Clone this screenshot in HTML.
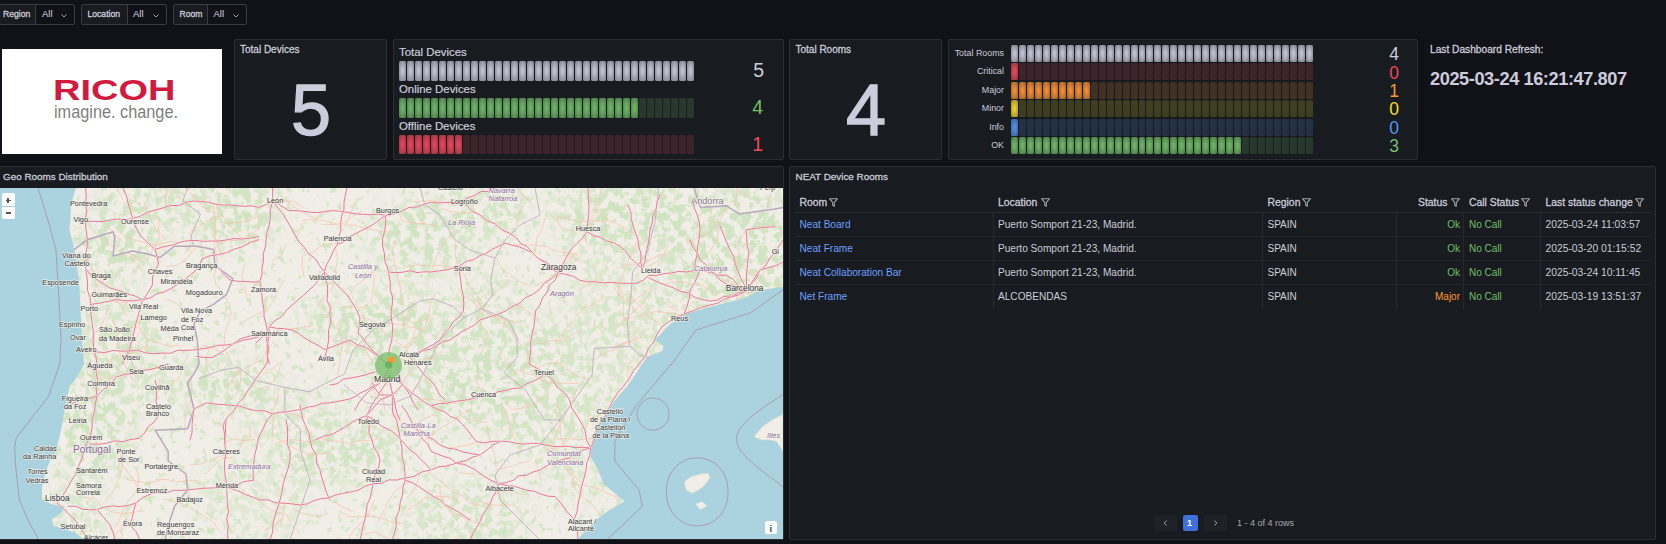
<!DOCTYPE html><html><head><meta charset="utf-8"><style>
*{margin:0;padding:0;box-sizing:border-box}
html,body{width:1666px;height:544px;overflow:hidden;background:#111217;font-family:"Liberation Sans",sans-serif;color:#ccccdc}
.a{position:absolute}
.panel{position:absolute;background:#181b1f;border:1px solid #2c2e34;border-radius:2px}
.t{position:absolute;white-space:nowrap;line-height:1}
.var{position:absolute;top:4px;height:21px;border:1px solid #3a3c42;border-radius:2px;background:#111217}
.var .lab{position:absolute;left:0;top:0;bottom:0;background:#181b1f;border-right:1px solid #3a3c42}
.cell{position:absolute;border-radius:1.5px}
</style></head><body>

<div class="var" style="left:-1px;width:76px"><div class="lab" style="width:36px"></div></div>
<div class="t" style="left:3px;top:10.2px;font-size:8.6px;-webkit-text-stroke:0.28px #ccccdc;color:#ccccdc">Region</div>
<div class="t" style="left:42px;top:9px;font-size:9.5px;color:#d8d8e4">All</div>
<svg class="a" style="left:61px;top:13.5px" width="6" height="4" viewBox="0 0 6 4"><path d="M0.5 0.5 L3 3 L5.5 0.5" fill="none" stroke="#aeb0b8" stroke-width="0.9"/></svg>
<div class="var" style="left:81px;width:86px"><div class="lab" style="width:46px"></div></div>
<div class="t" style="left:87.5px;top:10.2px;font-size:8.6px;-webkit-text-stroke:0.28px #ccccdc;color:#ccccdc">Location</div>
<div class="t" style="left:133px;top:9px;font-size:9.5px;color:#d8d8e4">All</div>
<svg class="a" style="left:153px;top:13.5px" width="6" height="4" viewBox="0 0 6 4"><path d="M0.5 0.5 L3 3 L5.5 0.5" fill="none" stroke="#aeb0b8" stroke-width="0.9"/></svg>
<div class="var" style="left:173px;width:74px"><div class="lab" style="width:34px"></div></div>
<div class="t" style="left:179.5px;top:10.2px;font-size:8.6px;-webkit-text-stroke:0.28px #ccccdc;color:#ccccdc">Room</div>
<div class="t" style="left:213.5px;top:9px;font-size:9.5px;color:#d8d8e4">All</div>
<svg class="a" style="left:233px;top:13.5px" width="6" height="4" viewBox="0 0 6 4"><path d="M0.5 0.5 L3 3 L5.5 0.5" fill="none" stroke="#aeb0b8" stroke-width="0.9"/></svg>
<div class="a" style="left:2px;top:49px;width:220px;height:105px;background:#fff"></div>
<svg class="a" style="left:2px;top:49px" width="220" height="105" viewBox="0 0 220 105"><text x="51" y="50.8" font-family="Liberation Sans" font-weight="bold" font-size="29.5" fill="#d21a3f" textLength="122.5" lengthAdjust="spacingAndGlyphs">RICOH</text><text x="52" y="68.6" font-family="Liberation Sans" font-size="17.5" fill="#7f7f7f" textLength="124" lengthAdjust="spacingAndGlyphs">imagine. change.</text></svg>
<div class="panel" style="left:234px;top:39px;width:153px;height:121px"></div>
<div class="panel" style="left:393px;top:39px;width:391px;height:121px"></div>
<div class="panel" style="left:789px;top:39px;width:153px;height:121px"></div>
<div class="panel" style="left:948px;top:39px;width:470px;height:121px"></div>
<div class="t" style="left:240px;top:44.6px;font-size:10px;-webkit-text-stroke:0.28px #ccccdc">Total Devices</div>
<div class="t" style="left:291px;top:73.5px;font-size:72px;-webkit-text-stroke:1.3px #ccccdc;color:#ccccdc">5</div>
<div class="t" style="left:795.5px;top:44.6px;font-size:10px;-webkit-text-stroke:0.28px #ccccdc">Total Rooms</div>
<div class="t" style="left:846px;top:73.5px;font-size:72px;-webkit-text-stroke:1.3px #ccccdc;color:#ccccdc">4</div>
<div class="t" style="left:399px;top:47px;font-size:11.4px;-webkit-text-stroke:0.2px #ccccdc">Total Devices</div>
<div class="t" style="left:399px;top:84px;font-size:11.4px;-webkit-text-stroke:0.2px #ccccdc">Online Devices</div>
<div class="t" style="left:399px;top:121px;font-size:11.4px;-webkit-text-stroke:0.2px #ccccdc">Offline Devices</div>
<div class="cell" style="left:399px;top:61px;width:7px;height:20px;background:radial-gradient(rgba(204,204,220,0.95) 10%,rgba(204,204,220,0.55))"></div>
<div class="cell" style="left:407px;top:61px;width:7px;height:20px;background:radial-gradient(rgba(204,204,220,0.95) 10%,rgba(204,204,220,0.55))"></div>
<div class="cell" style="left:415px;top:61px;width:7px;height:20px;background:radial-gradient(rgba(204,204,220,0.95) 10%,rgba(204,204,220,0.55))"></div>
<div class="cell" style="left:423px;top:61px;width:7px;height:20px;background:radial-gradient(rgba(204,204,220,0.95) 10%,rgba(204,204,220,0.55))"></div>
<div class="cell" style="left:431px;top:61px;width:7px;height:20px;background:radial-gradient(rgba(204,204,220,0.95) 10%,rgba(204,204,220,0.55))"></div>
<div class="cell" style="left:439px;top:61px;width:7px;height:20px;background:radial-gradient(rgba(204,204,220,0.95) 10%,rgba(204,204,220,0.55))"></div>
<div class="cell" style="left:447px;top:61px;width:7px;height:20px;background:radial-gradient(rgba(204,204,220,0.95) 10%,rgba(204,204,220,0.55))"></div>
<div class="cell" style="left:455px;top:61px;width:7px;height:20px;background:radial-gradient(rgba(204,204,220,0.95) 10%,rgba(204,204,220,0.55))"></div>
<div class="cell" style="left:463px;top:61px;width:7px;height:20px;background:radial-gradient(rgba(204,204,220,0.95) 10%,rgba(204,204,220,0.55))"></div>
<div class="cell" style="left:471px;top:61px;width:7px;height:20px;background:radial-gradient(rgba(204,204,220,0.95) 10%,rgba(204,204,220,0.55))"></div>
<div class="cell" style="left:479px;top:61px;width:7px;height:20px;background:radial-gradient(rgba(204,204,220,0.95) 10%,rgba(204,204,220,0.55))"></div>
<div class="cell" style="left:487px;top:61px;width:7px;height:20px;background:radial-gradient(rgba(204,204,220,0.95) 10%,rgba(204,204,220,0.55))"></div>
<div class="cell" style="left:495px;top:61px;width:7px;height:20px;background:radial-gradient(rgba(204,204,220,0.95) 10%,rgba(204,204,220,0.55))"></div>
<div class="cell" style="left:503px;top:61px;width:7px;height:20px;background:radial-gradient(rgba(204,204,220,0.95) 10%,rgba(204,204,220,0.55))"></div>
<div class="cell" style="left:511px;top:61px;width:7px;height:20px;background:radial-gradient(rgba(204,204,220,0.95) 10%,rgba(204,204,220,0.55))"></div>
<div class="cell" style="left:519px;top:61px;width:7px;height:20px;background:radial-gradient(rgba(204,204,220,0.95) 10%,rgba(204,204,220,0.55))"></div>
<div class="cell" style="left:527px;top:61px;width:7px;height:20px;background:radial-gradient(rgba(204,204,220,0.95) 10%,rgba(204,204,220,0.55))"></div>
<div class="cell" style="left:535px;top:61px;width:7px;height:20px;background:radial-gradient(rgba(204,204,220,0.95) 10%,rgba(204,204,220,0.55))"></div>
<div class="cell" style="left:543px;top:61px;width:7px;height:20px;background:radial-gradient(rgba(204,204,220,0.95) 10%,rgba(204,204,220,0.55))"></div>
<div class="cell" style="left:551px;top:61px;width:7px;height:20px;background:radial-gradient(rgba(204,204,220,0.95) 10%,rgba(204,204,220,0.55))"></div>
<div class="cell" style="left:559px;top:61px;width:7px;height:20px;background:radial-gradient(rgba(204,204,220,0.95) 10%,rgba(204,204,220,0.55))"></div>
<div class="cell" style="left:567px;top:61px;width:7px;height:20px;background:radial-gradient(rgba(204,204,220,0.95) 10%,rgba(204,204,220,0.55))"></div>
<div class="cell" style="left:575px;top:61px;width:7px;height:20px;background:radial-gradient(rgba(204,204,220,0.95) 10%,rgba(204,204,220,0.55))"></div>
<div class="cell" style="left:583px;top:61px;width:7px;height:20px;background:radial-gradient(rgba(204,204,220,0.95) 10%,rgba(204,204,220,0.55))"></div>
<div class="cell" style="left:591px;top:61px;width:7px;height:20px;background:radial-gradient(rgba(204,204,220,0.95) 10%,rgba(204,204,220,0.55))"></div>
<div class="cell" style="left:599px;top:61px;width:7px;height:20px;background:radial-gradient(rgba(204,204,220,0.95) 10%,rgba(204,204,220,0.55))"></div>
<div class="cell" style="left:607px;top:61px;width:7px;height:20px;background:radial-gradient(rgba(204,204,220,0.95) 10%,rgba(204,204,220,0.55))"></div>
<div class="cell" style="left:615px;top:61px;width:7px;height:20px;background:radial-gradient(rgba(204,204,220,0.95) 10%,rgba(204,204,220,0.55))"></div>
<div class="cell" style="left:623px;top:61px;width:7px;height:20px;background:radial-gradient(rgba(204,204,220,0.95) 10%,rgba(204,204,220,0.55))"></div>
<div class="cell" style="left:631px;top:61px;width:7px;height:20px;background:radial-gradient(rgba(204,204,220,0.95) 10%,rgba(204,204,220,0.55))"></div>
<div class="cell" style="left:639px;top:61px;width:7px;height:20px;background:radial-gradient(rgba(204,204,220,0.95) 10%,rgba(204,204,220,0.55))"></div>
<div class="cell" style="left:647px;top:61px;width:7px;height:20px;background:radial-gradient(rgba(204,204,220,0.95) 10%,rgba(204,204,220,0.55))"></div>
<div class="cell" style="left:655px;top:61px;width:7px;height:20px;background:radial-gradient(rgba(204,204,220,0.95) 10%,rgba(204,204,220,0.55))"></div>
<div class="cell" style="left:663px;top:61px;width:7px;height:20px;background:radial-gradient(rgba(204,204,220,0.95) 10%,rgba(204,204,220,0.55))"></div>
<div class="cell" style="left:671px;top:61px;width:7px;height:20px;background:radial-gradient(rgba(204,204,220,0.95) 10%,rgba(204,204,220,0.55))"></div>
<div class="cell" style="left:679px;top:61px;width:7px;height:20px;background:radial-gradient(rgba(204,204,220,0.95) 10%,rgba(204,204,220,0.55))"></div>
<div class="cell" style="left:687px;top:61px;width:7px;height:20px;background:radial-gradient(rgba(204,204,220,0.95) 10%,rgba(204,204,220,0.55))"></div>
<div class="cell" style="left:399px;top:98px;width:7px;height:19.5px;background:radial-gradient(rgba(115,191,105,0.95) 10%,rgba(115,191,105,0.55))"></div>
<div class="cell" style="left:407px;top:98px;width:7px;height:19.5px;background:radial-gradient(rgba(115,191,105,0.95) 10%,rgba(115,191,105,0.55))"></div>
<div class="cell" style="left:415px;top:98px;width:7px;height:19.5px;background:radial-gradient(rgba(115,191,105,0.95) 10%,rgba(115,191,105,0.55))"></div>
<div class="cell" style="left:423px;top:98px;width:7px;height:19.5px;background:radial-gradient(rgba(115,191,105,0.95) 10%,rgba(115,191,105,0.55))"></div>
<div class="cell" style="left:431px;top:98px;width:7px;height:19.5px;background:radial-gradient(rgba(115,191,105,0.95) 10%,rgba(115,191,105,0.55))"></div>
<div class="cell" style="left:439px;top:98px;width:7px;height:19.5px;background:radial-gradient(rgba(115,191,105,0.95) 10%,rgba(115,191,105,0.55))"></div>
<div class="cell" style="left:447px;top:98px;width:7px;height:19.5px;background:radial-gradient(rgba(115,191,105,0.95) 10%,rgba(115,191,105,0.55))"></div>
<div class="cell" style="left:455px;top:98px;width:7px;height:19.5px;background:radial-gradient(rgba(115,191,105,0.95) 10%,rgba(115,191,105,0.55))"></div>
<div class="cell" style="left:463px;top:98px;width:7px;height:19.5px;background:radial-gradient(rgba(115,191,105,0.95) 10%,rgba(115,191,105,0.55))"></div>
<div class="cell" style="left:471px;top:98px;width:7px;height:19.5px;background:radial-gradient(rgba(115,191,105,0.95) 10%,rgba(115,191,105,0.55))"></div>
<div class="cell" style="left:479px;top:98px;width:7px;height:19.5px;background:radial-gradient(rgba(115,191,105,0.95) 10%,rgba(115,191,105,0.55))"></div>
<div class="cell" style="left:487px;top:98px;width:7px;height:19.5px;background:radial-gradient(rgba(115,191,105,0.95) 10%,rgba(115,191,105,0.55))"></div>
<div class="cell" style="left:495px;top:98px;width:7px;height:19.5px;background:radial-gradient(rgba(115,191,105,0.95) 10%,rgba(115,191,105,0.55))"></div>
<div class="cell" style="left:503px;top:98px;width:7px;height:19.5px;background:radial-gradient(rgba(115,191,105,0.95) 10%,rgba(115,191,105,0.55))"></div>
<div class="cell" style="left:511px;top:98px;width:7px;height:19.5px;background:radial-gradient(rgba(115,191,105,0.95) 10%,rgba(115,191,105,0.55))"></div>
<div class="cell" style="left:519px;top:98px;width:7px;height:19.5px;background:radial-gradient(rgba(115,191,105,0.95) 10%,rgba(115,191,105,0.55))"></div>
<div class="cell" style="left:527px;top:98px;width:7px;height:19.5px;background:radial-gradient(rgba(115,191,105,0.95) 10%,rgba(115,191,105,0.55))"></div>
<div class="cell" style="left:535px;top:98px;width:7px;height:19.5px;background:radial-gradient(rgba(115,191,105,0.95) 10%,rgba(115,191,105,0.55))"></div>
<div class="cell" style="left:543px;top:98px;width:7px;height:19.5px;background:radial-gradient(rgba(115,191,105,0.95) 10%,rgba(115,191,105,0.55))"></div>
<div class="cell" style="left:551px;top:98px;width:7px;height:19.5px;background:radial-gradient(rgba(115,191,105,0.95) 10%,rgba(115,191,105,0.55))"></div>
<div class="cell" style="left:559px;top:98px;width:7px;height:19.5px;background:radial-gradient(rgba(115,191,105,0.95) 10%,rgba(115,191,105,0.55))"></div>
<div class="cell" style="left:567px;top:98px;width:7px;height:19.5px;background:radial-gradient(rgba(115,191,105,0.95) 10%,rgba(115,191,105,0.55))"></div>
<div class="cell" style="left:575px;top:98px;width:7px;height:19.5px;background:radial-gradient(rgba(115,191,105,0.95) 10%,rgba(115,191,105,0.55))"></div>
<div class="cell" style="left:583px;top:98px;width:7px;height:19.5px;background:radial-gradient(rgba(115,191,105,0.95) 10%,rgba(115,191,105,0.55))"></div>
<div class="cell" style="left:591px;top:98px;width:7px;height:19.5px;background:radial-gradient(rgba(115,191,105,0.95) 10%,rgba(115,191,105,0.55))"></div>
<div class="cell" style="left:599px;top:98px;width:7px;height:19.5px;background:radial-gradient(rgba(115,191,105,0.95) 10%,rgba(115,191,105,0.55))"></div>
<div class="cell" style="left:607px;top:98px;width:7px;height:19.5px;background:radial-gradient(rgba(115,191,105,0.95) 10%,rgba(115,191,105,0.55))"></div>
<div class="cell" style="left:615px;top:98px;width:7px;height:19.5px;background:radial-gradient(rgba(115,191,105,0.95) 10%,rgba(115,191,105,0.55))"></div>
<div class="cell" style="left:623px;top:98px;width:7px;height:19.5px;background:radial-gradient(rgba(115,191,105,0.95) 10%,rgba(115,191,105,0.55))"></div>
<div class="cell" style="left:631px;top:98px;width:7px;height:19.5px;background:radial-gradient(rgba(115,191,105,0.95) 10%,rgba(115,191,105,0.55))"></div>
<div class="cell" style="left:639px;top:98px;width:7px;height:19.5px;background:rgba(115,191,105,0.18)"></div>
<div class="cell" style="left:647px;top:98px;width:7px;height:19.5px;background:rgba(115,191,105,0.18)"></div>
<div class="cell" style="left:655px;top:98px;width:7px;height:19.5px;background:rgba(115,191,105,0.18)"></div>
<div class="cell" style="left:663px;top:98px;width:7px;height:19.5px;background:rgba(115,191,105,0.18)"></div>
<div class="cell" style="left:671px;top:98px;width:7px;height:19.5px;background:rgba(115,191,105,0.18)"></div>
<div class="cell" style="left:679px;top:98px;width:7px;height:19.5px;background:rgba(115,191,105,0.18)"></div>
<div class="cell" style="left:687px;top:98px;width:7px;height:19.5px;background:rgba(115,191,105,0.18)"></div>
<div class="cell" style="left:399px;top:135px;width:7px;height:19px;background:radial-gradient(rgba(242,73,92,0.95) 10%,rgba(242,73,92,0.55))"></div>
<div class="cell" style="left:407px;top:135px;width:7px;height:19px;background:radial-gradient(rgba(242,73,92,0.95) 10%,rgba(242,73,92,0.55))"></div>
<div class="cell" style="left:415px;top:135px;width:7px;height:19px;background:radial-gradient(rgba(242,73,92,0.95) 10%,rgba(242,73,92,0.55))"></div>
<div class="cell" style="left:423px;top:135px;width:7px;height:19px;background:radial-gradient(rgba(242,73,92,0.95) 10%,rgba(242,73,92,0.55))"></div>
<div class="cell" style="left:431px;top:135px;width:7px;height:19px;background:radial-gradient(rgba(242,73,92,0.95) 10%,rgba(242,73,92,0.55))"></div>
<div class="cell" style="left:439px;top:135px;width:7px;height:19px;background:radial-gradient(rgba(242,73,92,0.95) 10%,rgba(242,73,92,0.55))"></div>
<div class="cell" style="left:447px;top:135px;width:7px;height:19px;background:radial-gradient(rgba(242,73,92,0.95) 10%,rgba(242,73,92,0.55))"></div>
<div class="cell" style="left:455px;top:135px;width:7px;height:19px;background:radial-gradient(rgba(242,73,92,0.95) 10%,rgba(242,73,92,0.55))"></div>
<div class="cell" style="left:463px;top:135px;width:7px;height:19px;background:rgba(242,73,92,0.18)"></div>
<div class="cell" style="left:471px;top:135px;width:7px;height:19px;background:rgba(242,73,92,0.18)"></div>
<div class="cell" style="left:479px;top:135px;width:7px;height:19px;background:rgba(242,73,92,0.18)"></div>
<div class="cell" style="left:487px;top:135px;width:7px;height:19px;background:rgba(242,73,92,0.18)"></div>
<div class="cell" style="left:495px;top:135px;width:7px;height:19px;background:rgba(242,73,92,0.18)"></div>
<div class="cell" style="left:503px;top:135px;width:7px;height:19px;background:rgba(242,73,92,0.18)"></div>
<div class="cell" style="left:511px;top:135px;width:7px;height:19px;background:rgba(242,73,92,0.18)"></div>
<div class="cell" style="left:519px;top:135px;width:7px;height:19px;background:rgba(242,73,92,0.18)"></div>
<div class="cell" style="left:527px;top:135px;width:7px;height:19px;background:rgba(242,73,92,0.18)"></div>
<div class="cell" style="left:535px;top:135px;width:7px;height:19px;background:rgba(242,73,92,0.18)"></div>
<div class="cell" style="left:543px;top:135px;width:7px;height:19px;background:rgba(242,73,92,0.18)"></div>
<div class="cell" style="left:551px;top:135px;width:7px;height:19px;background:rgba(242,73,92,0.18)"></div>
<div class="cell" style="left:559px;top:135px;width:7px;height:19px;background:rgba(242,73,92,0.18)"></div>
<div class="cell" style="left:567px;top:135px;width:7px;height:19px;background:rgba(242,73,92,0.18)"></div>
<div class="cell" style="left:575px;top:135px;width:7px;height:19px;background:rgba(242,73,92,0.18)"></div>
<div class="cell" style="left:583px;top:135px;width:7px;height:19px;background:rgba(242,73,92,0.18)"></div>
<div class="cell" style="left:591px;top:135px;width:7px;height:19px;background:rgba(242,73,92,0.18)"></div>
<div class="cell" style="left:599px;top:135px;width:7px;height:19px;background:rgba(242,73,92,0.18)"></div>
<div class="cell" style="left:607px;top:135px;width:7px;height:19px;background:rgba(242,73,92,0.18)"></div>
<div class="cell" style="left:615px;top:135px;width:7px;height:19px;background:rgba(242,73,92,0.18)"></div>
<div class="cell" style="left:623px;top:135px;width:7px;height:19px;background:rgba(242,73,92,0.18)"></div>
<div class="cell" style="left:631px;top:135px;width:7px;height:19px;background:rgba(242,73,92,0.18)"></div>
<div class="cell" style="left:639px;top:135px;width:7px;height:19px;background:rgba(242,73,92,0.18)"></div>
<div class="cell" style="left:647px;top:135px;width:7px;height:19px;background:rgba(242,73,92,0.18)"></div>
<div class="cell" style="left:655px;top:135px;width:7px;height:19px;background:rgba(242,73,92,0.18)"></div>
<div class="cell" style="left:663px;top:135px;width:7px;height:19px;background:rgba(242,73,92,0.18)"></div>
<div class="cell" style="left:671px;top:135px;width:7px;height:19px;background:rgba(242,73,92,0.18)"></div>
<div class="cell" style="left:679px;top:135px;width:7px;height:19px;background:rgba(242,73,92,0.18)"></div>
<div class="cell" style="left:687px;top:135px;width:7px;height:19px;background:rgba(242,73,92,0.18)"></div>
<div class="t" style="right:902px;top:60.5px;font-size:19.5px;color:#ccccdc;text-align:right">5</div>
<div class="t" style="right:903px;top:97.5px;font-size:19.5px;color:#73bf69;text-align:right">4</div>
<div class="t" style="right:903px;top:134.5px;font-size:19.5px;color:#f2495c;text-align:right">1</div>
<div class="cell" style="left:1011px;top:45px;width:7px;height:17px;background:radial-gradient(rgba(204,204,220,0.95) 10%,rgba(204,204,220,0.55))"></div>
<div class="cell" style="left:1019px;top:45px;width:7px;height:17px;background:radial-gradient(rgba(204,204,220,0.95) 10%,rgba(204,204,220,0.55))"></div>
<div class="cell" style="left:1027px;top:45px;width:7px;height:17px;background:radial-gradient(rgba(204,204,220,0.95) 10%,rgba(204,204,220,0.55))"></div>
<div class="cell" style="left:1035px;top:45px;width:7px;height:17px;background:radial-gradient(rgba(204,204,220,0.95) 10%,rgba(204,204,220,0.55))"></div>
<div class="cell" style="left:1043px;top:45px;width:7px;height:17px;background:radial-gradient(rgba(204,204,220,0.95) 10%,rgba(204,204,220,0.55))"></div>
<div class="cell" style="left:1051px;top:45px;width:7px;height:17px;background:radial-gradient(rgba(204,204,220,0.95) 10%,rgba(204,204,220,0.55))"></div>
<div class="cell" style="left:1059px;top:45px;width:7px;height:17px;background:radial-gradient(rgba(204,204,220,0.95) 10%,rgba(204,204,220,0.55))"></div>
<div class="cell" style="left:1067px;top:45px;width:7px;height:17px;background:radial-gradient(rgba(204,204,220,0.95) 10%,rgba(204,204,220,0.55))"></div>
<div class="cell" style="left:1075px;top:45px;width:7px;height:17px;background:radial-gradient(rgba(204,204,220,0.95) 10%,rgba(204,204,220,0.55))"></div>
<div class="cell" style="left:1083px;top:45px;width:7px;height:17px;background:radial-gradient(rgba(204,204,220,0.95) 10%,rgba(204,204,220,0.55))"></div>
<div class="cell" style="left:1091px;top:45px;width:7px;height:17px;background:radial-gradient(rgba(204,204,220,0.95) 10%,rgba(204,204,220,0.55))"></div>
<div class="cell" style="left:1099px;top:45px;width:7px;height:17px;background:radial-gradient(rgba(204,204,220,0.95) 10%,rgba(204,204,220,0.55))"></div>
<div class="cell" style="left:1107px;top:45px;width:7px;height:17px;background:radial-gradient(rgba(204,204,220,0.95) 10%,rgba(204,204,220,0.55))"></div>
<div class="cell" style="left:1115px;top:45px;width:7px;height:17px;background:radial-gradient(rgba(204,204,220,0.95) 10%,rgba(204,204,220,0.55))"></div>
<div class="cell" style="left:1123px;top:45px;width:7px;height:17px;background:radial-gradient(rgba(204,204,220,0.95) 10%,rgba(204,204,220,0.55))"></div>
<div class="cell" style="left:1131px;top:45px;width:7px;height:17px;background:radial-gradient(rgba(204,204,220,0.95) 10%,rgba(204,204,220,0.55))"></div>
<div class="cell" style="left:1139px;top:45px;width:6px;height:17px;background:radial-gradient(rgba(204,204,220,0.95) 10%,rgba(204,204,220,0.55))"></div>
<div class="cell" style="left:1146px;top:45px;width:7px;height:17px;background:radial-gradient(rgba(204,204,220,0.95) 10%,rgba(204,204,220,0.55))"></div>
<div class="cell" style="left:1154px;top:45px;width:7px;height:17px;background:radial-gradient(rgba(204,204,220,0.95) 10%,rgba(204,204,220,0.55))"></div>
<div class="cell" style="left:1162px;top:45px;width:7px;height:17px;background:radial-gradient(rgba(204,204,220,0.95) 10%,rgba(204,204,220,0.55))"></div>
<div class="cell" style="left:1170px;top:45px;width:7px;height:17px;background:radial-gradient(rgba(204,204,220,0.95) 10%,rgba(204,204,220,0.55))"></div>
<div class="cell" style="left:1178px;top:45px;width:7px;height:17px;background:radial-gradient(rgba(204,204,220,0.95) 10%,rgba(204,204,220,0.55))"></div>
<div class="cell" style="left:1186px;top:45px;width:7px;height:17px;background:radial-gradient(rgba(204,204,220,0.95) 10%,rgba(204,204,220,0.55))"></div>
<div class="cell" style="left:1194px;top:45px;width:7px;height:17px;background:radial-gradient(rgba(204,204,220,0.95) 10%,rgba(204,204,220,0.55))"></div>
<div class="cell" style="left:1202px;top:45px;width:7px;height:17px;background:radial-gradient(rgba(204,204,220,0.95) 10%,rgba(204,204,220,0.55))"></div>
<div class="cell" style="left:1210px;top:45px;width:7px;height:17px;background:radial-gradient(rgba(204,204,220,0.95) 10%,rgba(204,204,220,0.55))"></div>
<div class="cell" style="left:1218px;top:45px;width:7px;height:17px;background:radial-gradient(rgba(204,204,220,0.95) 10%,rgba(204,204,220,0.55))"></div>
<div class="cell" style="left:1226px;top:45px;width:7px;height:17px;background:radial-gradient(rgba(204,204,220,0.95) 10%,rgba(204,204,220,0.55))"></div>
<div class="cell" style="left:1234px;top:45px;width:7px;height:17px;background:radial-gradient(rgba(204,204,220,0.95) 10%,rgba(204,204,220,0.55))"></div>
<div class="cell" style="left:1242px;top:45px;width:7px;height:17px;background:radial-gradient(rgba(204,204,220,0.95) 10%,rgba(204,204,220,0.55))"></div>
<div class="cell" style="left:1250px;top:45px;width:7px;height:17px;background:radial-gradient(rgba(204,204,220,0.95) 10%,rgba(204,204,220,0.55))"></div>
<div class="cell" style="left:1258px;top:45px;width:7px;height:17px;background:radial-gradient(rgba(204,204,220,0.95) 10%,rgba(204,204,220,0.55))"></div>
<div class="cell" style="left:1266px;top:45px;width:7px;height:17px;background:radial-gradient(rgba(204,204,220,0.95) 10%,rgba(204,204,220,0.55))"></div>
<div class="cell" style="left:1274px;top:45px;width:7px;height:17px;background:radial-gradient(rgba(204,204,220,0.95) 10%,rgba(204,204,220,0.55))"></div>
<div class="cell" style="left:1282px;top:45px;width:7px;height:17px;background:radial-gradient(rgba(204,204,220,0.95) 10%,rgba(204,204,220,0.55))"></div>
<div class="cell" style="left:1290px;top:45px;width:7px;height:17px;background:radial-gradient(rgba(204,204,220,0.95) 10%,rgba(204,204,220,0.55))"></div>
<div class="cell" style="left:1298px;top:45px;width:7px;height:17px;background:radial-gradient(rgba(204,204,220,0.95) 10%,rgba(204,204,220,0.55))"></div>
<div class="cell" style="left:1306px;top:45px;width:7px;height:17px;background:radial-gradient(rgba(204,204,220,0.95) 10%,rgba(204,204,220,0.55))"></div>
<div class="t" style="right:662px;top:48.9px;font-size:8.9px;text-align:right">Total Rooms</div>
<div class="t" style="right:267px;top:46.1px;font-size:17.5px;color:#ccccdc;text-align:right">4</div>
<div class="cell" style="left:1011px;top:63px;width:7px;height:17px;background:radial-gradient(rgba(242,73,92,0.95) 10%,rgba(242,73,92,0.55))"></div>
<div class="cell" style="left:1019px;top:63px;width:7px;height:17px;background:rgba(242,73,92,0.18)"></div>
<div class="cell" style="left:1027px;top:63px;width:7px;height:17px;background:rgba(242,73,92,0.18)"></div>
<div class="cell" style="left:1035px;top:63px;width:7px;height:17px;background:rgba(242,73,92,0.18)"></div>
<div class="cell" style="left:1043px;top:63px;width:7px;height:17px;background:rgba(242,73,92,0.18)"></div>
<div class="cell" style="left:1051px;top:63px;width:7px;height:17px;background:rgba(242,73,92,0.18)"></div>
<div class="cell" style="left:1059px;top:63px;width:7px;height:17px;background:rgba(242,73,92,0.18)"></div>
<div class="cell" style="left:1067px;top:63px;width:7px;height:17px;background:rgba(242,73,92,0.18)"></div>
<div class="cell" style="left:1075px;top:63px;width:7px;height:17px;background:rgba(242,73,92,0.18)"></div>
<div class="cell" style="left:1083px;top:63px;width:7px;height:17px;background:rgba(242,73,92,0.18)"></div>
<div class="cell" style="left:1091px;top:63px;width:7px;height:17px;background:rgba(242,73,92,0.18)"></div>
<div class="cell" style="left:1099px;top:63px;width:7px;height:17px;background:rgba(242,73,92,0.18)"></div>
<div class="cell" style="left:1107px;top:63px;width:7px;height:17px;background:rgba(242,73,92,0.18)"></div>
<div class="cell" style="left:1115px;top:63px;width:7px;height:17px;background:rgba(242,73,92,0.18)"></div>
<div class="cell" style="left:1123px;top:63px;width:7px;height:17px;background:rgba(242,73,92,0.18)"></div>
<div class="cell" style="left:1131px;top:63px;width:7px;height:17px;background:rgba(242,73,92,0.18)"></div>
<div class="cell" style="left:1139px;top:63px;width:6px;height:17px;background:rgba(242,73,92,0.18)"></div>
<div class="cell" style="left:1146px;top:63px;width:7px;height:17px;background:rgba(242,73,92,0.18)"></div>
<div class="cell" style="left:1154px;top:63px;width:7px;height:17px;background:rgba(242,73,92,0.18)"></div>
<div class="cell" style="left:1162px;top:63px;width:7px;height:17px;background:rgba(242,73,92,0.18)"></div>
<div class="cell" style="left:1170px;top:63px;width:7px;height:17px;background:rgba(242,73,92,0.18)"></div>
<div class="cell" style="left:1178px;top:63px;width:7px;height:17px;background:rgba(242,73,92,0.18)"></div>
<div class="cell" style="left:1186px;top:63px;width:7px;height:17px;background:rgba(242,73,92,0.18)"></div>
<div class="cell" style="left:1194px;top:63px;width:7px;height:17px;background:rgba(242,73,92,0.18)"></div>
<div class="cell" style="left:1202px;top:63px;width:7px;height:17px;background:rgba(242,73,92,0.18)"></div>
<div class="cell" style="left:1210px;top:63px;width:7px;height:17px;background:rgba(242,73,92,0.18)"></div>
<div class="cell" style="left:1218px;top:63px;width:7px;height:17px;background:rgba(242,73,92,0.18)"></div>
<div class="cell" style="left:1226px;top:63px;width:7px;height:17px;background:rgba(242,73,92,0.18)"></div>
<div class="cell" style="left:1234px;top:63px;width:7px;height:17px;background:rgba(242,73,92,0.18)"></div>
<div class="cell" style="left:1242px;top:63px;width:7px;height:17px;background:rgba(242,73,92,0.18)"></div>
<div class="cell" style="left:1250px;top:63px;width:7px;height:17px;background:rgba(242,73,92,0.18)"></div>
<div class="cell" style="left:1258px;top:63px;width:7px;height:17px;background:rgba(242,73,92,0.18)"></div>
<div class="cell" style="left:1266px;top:63px;width:7px;height:17px;background:rgba(242,73,92,0.18)"></div>
<div class="cell" style="left:1274px;top:63px;width:7px;height:17px;background:rgba(242,73,92,0.18)"></div>
<div class="cell" style="left:1282px;top:63px;width:7px;height:17px;background:rgba(242,73,92,0.18)"></div>
<div class="cell" style="left:1290px;top:63px;width:7px;height:17px;background:rgba(242,73,92,0.18)"></div>
<div class="cell" style="left:1298px;top:63px;width:7px;height:17px;background:rgba(242,73,92,0.18)"></div>
<div class="cell" style="left:1306px;top:63px;width:7px;height:17px;background:rgba(242,73,92,0.18)"></div>
<div class="t" style="right:662px;top:67.3px;font-size:8.9px;text-align:right">Critical</div>
<div class="t" style="right:267px;top:64.5px;font-size:17.5px;color:#f2495c;text-align:right">0</div>
<div class="cell" style="left:1011px;top:82px;width:7px;height:17px;background:radial-gradient(rgba(255,152,48,0.95) 10%,rgba(255,152,48,0.55))"></div>
<div class="cell" style="left:1019px;top:82px;width:7px;height:17px;background:radial-gradient(rgba(255,152,48,0.95) 10%,rgba(255,152,48,0.55))"></div>
<div class="cell" style="left:1027px;top:82px;width:7px;height:17px;background:radial-gradient(rgba(255,152,48,0.95) 10%,rgba(255,152,48,0.55))"></div>
<div class="cell" style="left:1035px;top:82px;width:7px;height:17px;background:radial-gradient(rgba(255,152,48,0.95) 10%,rgba(255,152,48,0.55))"></div>
<div class="cell" style="left:1043px;top:82px;width:7px;height:17px;background:radial-gradient(rgba(255,152,48,0.95) 10%,rgba(255,152,48,0.55))"></div>
<div class="cell" style="left:1051px;top:82px;width:7px;height:17px;background:radial-gradient(rgba(255,152,48,0.95) 10%,rgba(255,152,48,0.55))"></div>
<div class="cell" style="left:1059px;top:82px;width:7px;height:17px;background:radial-gradient(rgba(255,152,48,0.95) 10%,rgba(255,152,48,0.55))"></div>
<div class="cell" style="left:1067px;top:82px;width:7px;height:17px;background:radial-gradient(rgba(255,152,48,0.95) 10%,rgba(255,152,48,0.55))"></div>
<div class="cell" style="left:1075px;top:82px;width:7px;height:17px;background:radial-gradient(rgba(255,152,48,0.95) 10%,rgba(255,152,48,0.55))"></div>
<div class="cell" style="left:1083px;top:82px;width:7px;height:17px;background:radial-gradient(rgba(255,152,48,0.95) 10%,rgba(255,152,48,0.55))"></div>
<div class="cell" style="left:1091px;top:82px;width:7px;height:17px;background:rgba(255,152,48,0.18)"></div>
<div class="cell" style="left:1099px;top:82px;width:7px;height:17px;background:rgba(255,152,48,0.18)"></div>
<div class="cell" style="left:1107px;top:82px;width:7px;height:17px;background:rgba(255,152,48,0.18)"></div>
<div class="cell" style="left:1115px;top:82px;width:7px;height:17px;background:rgba(255,152,48,0.18)"></div>
<div class="cell" style="left:1123px;top:82px;width:7px;height:17px;background:rgba(255,152,48,0.18)"></div>
<div class="cell" style="left:1131px;top:82px;width:7px;height:17px;background:rgba(255,152,48,0.18)"></div>
<div class="cell" style="left:1139px;top:82px;width:6px;height:17px;background:rgba(255,152,48,0.18)"></div>
<div class="cell" style="left:1146px;top:82px;width:7px;height:17px;background:rgba(255,152,48,0.18)"></div>
<div class="cell" style="left:1154px;top:82px;width:7px;height:17px;background:rgba(255,152,48,0.18)"></div>
<div class="cell" style="left:1162px;top:82px;width:7px;height:17px;background:rgba(255,152,48,0.18)"></div>
<div class="cell" style="left:1170px;top:82px;width:7px;height:17px;background:rgba(255,152,48,0.18)"></div>
<div class="cell" style="left:1178px;top:82px;width:7px;height:17px;background:rgba(255,152,48,0.18)"></div>
<div class="cell" style="left:1186px;top:82px;width:7px;height:17px;background:rgba(255,152,48,0.18)"></div>
<div class="cell" style="left:1194px;top:82px;width:7px;height:17px;background:rgba(255,152,48,0.18)"></div>
<div class="cell" style="left:1202px;top:82px;width:7px;height:17px;background:rgba(255,152,48,0.18)"></div>
<div class="cell" style="left:1210px;top:82px;width:7px;height:17px;background:rgba(255,152,48,0.18)"></div>
<div class="cell" style="left:1218px;top:82px;width:7px;height:17px;background:rgba(255,152,48,0.18)"></div>
<div class="cell" style="left:1226px;top:82px;width:7px;height:17px;background:rgba(255,152,48,0.18)"></div>
<div class="cell" style="left:1234px;top:82px;width:7px;height:17px;background:rgba(255,152,48,0.18)"></div>
<div class="cell" style="left:1242px;top:82px;width:7px;height:17px;background:rgba(255,152,48,0.18)"></div>
<div class="cell" style="left:1250px;top:82px;width:7px;height:17px;background:rgba(255,152,48,0.18)"></div>
<div class="cell" style="left:1258px;top:82px;width:7px;height:17px;background:rgba(255,152,48,0.18)"></div>
<div class="cell" style="left:1266px;top:82px;width:7px;height:17px;background:rgba(255,152,48,0.18)"></div>
<div class="cell" style="left:1274px;top:82px;width:7px;height:17px;background:rgba(255,152,48,0.18)"></div>
<div class="cell" style="left:1282px;top:82px;width:7px;height:17px;background:rgba(255,152,48,0.18)"></div>
<div class="cell" style="left:1290px;top:82px;width:7px;height:17px;background:rgba(255,152,48,0.18)"></div>
<div class="cell" style="left:1298px;top:82px;width:7px;height:17px;background:rgba(255,152,48,0.18)"></div>
<div class="cell" style="left:1306px;top:82px;width:7px;height:17px;background:rgba(255,152,48,0.18)"></div>
<div class="t" style="right:662px;top:85.7px;font-size:8.9px;text-align:right">Major</div>
<div class="t" style="right:267px;top:82.9px;font-size:17.5px;color:#ff9830;text-align:right">1</div>
<div class="cell" style="left:1011px;top:100px;width:7px;height:17px;background:radial-gradient(rgba(250,222,42,0.95) 10%,rgba(250,222,42,0.55))"></div>
<div class="cell" style="left:1019px;top:100px;width:7px;height:17px;background:rgba(250,222,42,0.18)"></div>
<div class="cell" style="left:1027px;top:100px;width:7px;height:17px;background:rgba(250,222,42,0.18)"></div>
<div class="cell" style="left:1035px;top:100px;width:7px;height:17px;background:rgba(250,222,42,0.18)"></div>
<div class="cell" style="left:1043px;top:100px;width:7px;height:17px;background:rgba(250,222,42,0.18)"></div>
<div class="cell" style="left:1051px;top:100px;width:7px;height:17px;background:rgba(250,222,42,0.18)"></div>
<div class="cell" style="left:1059px;top:100px;width:7px;height:17px;background:rgba(250,222,42,0.18)"></div>
<div class="cell" style="left:1067px;top:100px;width:7px;height:17px;background:rgba(250,222,42,0.18)"></div>
<div class="cell" style="left:1075px;top:100px;width:7px;height:17px;background:rgba(250,222,42,0.18)"></div>
<div class="cell" style="left:1083px;top:100px;width:7px;height:17px;background:rgba(250,222,42,0.18)"></div>
<div class="cell" style="left:1091px;top:100px;width:7px;height:17px;background:rgba(250,222,42,0.18)"></div>
<div class="cell" style="left:1099px;top:100px;width:7px;height:17px;background:rgba(250,222,42,0.18)"></div>
<div class="cell" style="left:1107px;top:100px;width:7px;height:17px;background:rgba(250,222,42,0.18)"></div>
<div class="cell" style="left:1115px;top:100px;width:7px;height:17px;background:rgba(250,222,42,0.18)"></div>
<div class="cell" style="left:1123px;top:100px;width:7px;height:17px;background:rgba(250,222,42,0.18)"></div>
<div class="cell" style="left:1131px;top:100px;width:7px;height:17px;background:rgba(250,222,42,0.18)"></div>
<div class="cell" style="left:1139px;top:100px;width:6px;height:17px;background:rgba(250,222,42,0.18)"></div>
<div class="cell" style="left:1146px;top:100px;width:7px;height:17px;background:rgba(250,222,42,0.18)"></div>
<div class="cell" style="left:1154px;top:100px;width:7px;height:17px;background:rgba(250,222,42,0.18)"></div>
<div class="cell" style="left:1162px;top:100px;width:7px;height:17px;background:rgba(250,222,42,0.18)"></div>
<div class="cell" style="left:1170px;top:100px;width:7px;height:17px;background:rgba(250,222,42,0.18)"></div>
<div class="cell" style="left:1178px;top:100px;width:7px;height:17px;background:rgba(250,222,42,0.18)"></div>
<div class="cell" style="left:1186px;top:100px;width:7px;height:17px;background:rgba(250,222,42,0.18)"></div>
<div class="cell" style="left:1194px;top:100px;width:7px;height:17px;background:rgba(250,222,42,0.18)"></div>
<div class="cell" style="left:1202px;top:100px;width:7px;height:17px;background:rgba(250,222,42,0.18)"></div>
<div class="cell" style="left:1210px;top:100px;width:7px;height:17px;background:rgba(250,222,42,0.18)"></div>
<div class="cell" style="left:1218px;top:100px;width:7px;height:17px;background:rgba(250,222,42,0.18)"></div>
<div class="cell" style="left:1226px;top:100px;width:7px;height:17px;background:rgba(250,222,42,0.18)"></div>
<div class="cell" style="left:1234px;top:100px;width:7px;height:17px;background:rgba(250,222,42,0.18)"></div>
<div class="cell" style="left:1242px;top:100px;width:7px;height:17px;background:rgba(250,222,42,0.18)"></div>
<div class="cell" style="left:1250px;top:100px;width:7px;height:17px;background:rgba(250,222,42,0.18)"></div>
<div class="cell" style="left:1258px;top:100px;width:7px;height:17px;background:rgba(250,222,42,0.18)"></div>
<div class="cell" style="left:1266px;top:100px;width:7px;height:17px;background:rgba(250,222,42,0.18)"></div>
<div class="cell" style="left:1274px;top:100px;width:7px;height:17px;background:rgba(250,222,42,0.18)"></div>
<div class="cell" style="left:1282px;top:100px;width:7px;height:17px;background:rgba(250,222,42,0.18)"></div>
<div class="cell" style="left:1290px;top:100px;width:7px;height:17px;background:rgba(250,222,42,0.18)"></div>
<div class="cell" style="left:1298px;top:100px;width:7px;height:17px;background:rgba(250,222,42,0.18)"></div>
<div class="cell" style="left:1306px;top:100px;width:7px;height:17px;background:rgba(250,222,42,0.18)"></div>
<div class="t" style="right:662px;top:104.1px;font-size:8.9px;text-align:right">Minor</div>
<div class="t" style="right:267px;top:101.3px;font-size:17.5px;color:#fade2a;text-align:right">0</div>
<div class="cell" style="left:1011px;top:119px;width:7px;height:17px;background:radial-gradient(rgba(87,148,242,0.95) 10%,rgba(87,148,242,0.55))"></div>
<div class="cell" style="left:1019px;top:119px;width:7px;height:17px;background:rgba(87,148,242,0.18)"></div>
<div class="cell" style="left:1027px;top:119px;width:7px;height:17px;background:rgba(87,148,242,0.18)"></div>
<div class="cell" style="left:1035px;top:119px;width:7px;height:17px;background:rgba(87,148,242,0.18)"></div>
<div class="cell" style="left:1043px;top:119px;width:7px;height:17px;background:rgba(87,148,242,0.18)"></div>
<div class="cell" style="left:1051px;top:119px;width:7px;height:17px;background:rgba(87,148,242,0.18)"></div>
<div class="cell" style="left:1059px;top:119px;width:7px;height:17px;background:rgba(87,148,242,0.18)"></div>
<div class="cell" style="left:1067px;top:119px;width:7px;height:17px;background:rgba(87,148,242,0.18)"></div>
<div class="cell" style="left:1075px;top:119px;width:7px;height:17px;background:rgba(87,148,242,0.18)"></div>
<div class="cell" style="left:1083px;top:119px;width:7px;height:17px;background:rgba(87,148,242,0.18)"></div>
<div class="cell" style="left:1091px;top:119px;width:7px;height:17px;background:rgba(87,148,242,0.18)"></div>
<div class="cell" style="left:1099px;top:119px;width:7px;height:17px;background:rgba(87,148,242,0.18)"></div>
<div class="cell" style="left:1107px;top:119px;width:7px;height:17px;background:rgba(87,148,242,0.18)"></div>
<div class="cell" style="left:1115px;top:119px;width:7px;height:17px;background:rgba(87,148,242,0.18)"></div>
<div class="cell" style="left:1123px;top:119px;width:7px;height:17px;background:rgba(87,148,242,0.18)"></div>
<div class="cell" style="left:1131px;top:119px;width:7px;height:17px;background:rgba(87,148,242,0.18)"></div>
<div class="cell" style="left:1139px;top:119px;width:6px;height:17px;background:rgba(87,148,242,0.18)"></div>
<div class="cell" style="left:1146px;top:119px;width:7px;height:17px;background:rgba(87,148,242,0.18)"></div>
<div class="cell" style="left:1154px;top:119px;width:7px;height:17px;background:rgba(87,148,242,0.18)"></div>
<div class="cell" style="left:1162px;top:119px;width:7px;height:17px;background:rgba(87,148,242,0.18)"></div>
<div class="cell" style="left:1170px;top:119px;width:7px;height:17px;background:rgba(87,148,242,0.18)"></div>
<div class="cell" style="left:1178px;top:119px;width:7px;height:17px;background:rgba(87,148,242,0.18)"></div>
<div class="cell" style="left:1186px;top:119px;width:7px;height:17px;background:rgba(87,148,242,0.18)"></div>
<div class="cell" style="left:1194px;top:119px;width:7px;height:17px;background:rgba(87,148,242,0.18)"></div>
<div class="cell" style="left:1202px;top:119px;width:7px;height:17px;background:rgba(87,148,242,0.18)"></div>
<div class="cell" style="left:1210px;top:119px;width:7px;height:17px;background:rgba(87,148,242,0.18)"></div>
<div class="cell" style="left:1218px;top:119px;width:7px;height:17px;background:rgba(87,148,242,0.18)"></div>
<div class="cell" style="left:1226px;top:119px;width:7px;height:17px;background:rgba(87,148,242,0.18)"></div>
<div class="cell" style="left:1234px;top:119px;width:7px;height:17px;background:rgba(87,148,242,0.18)"></div>
<div class="cell" style="left:1242px;top:119px;width:7px;height:17px;background:rgba(87,148,242,0.18)"></div>
<div class="cell" style="left:1250px;top:119px;width:7px;height:17px;background:rgba(87,148,242,0.18)"></div>
<div class="cell" style="left:1258px;top:119px;width:7px;height:17px;background:rgba(87,148,242,0.18)"></div>
<div class="cell" style="left:1266px;top:119px;width:7px;height:17px;background:rgba(87,148,242,0.18)"></div>
<div class="cell" style="left:1274px;top:119px;width:7px;height:17px;background:rgba(87,148,242,0.18)"></div>
<div class="cell" style="left:1282px;top:119px;width:7px;height:17px;background:rgba(87,148,242,0.18)"></div>
<div class="cell" style="left:1290px;top:119px;width:7px;height:17px;background:rgba(87,148,242,0.18)"></div>
<div class="cell" style="left:1298px;top:119px;width:7px;height:17px;background:rgba(87,148,242,0.18)"></div>
<div class="cell" style="left:1306px;top:119px;width:7px;height:17px;background:rgba(87,148,242,0.18)"></div>
<div class="t" style="right:662px;top:122.5px;font-size:8.9px;text-align:right">Info</div>
<div class="t" style="right:267px;top:119.7px;font-size:17.5px;color:#5794f2;text-align:right">0</div>
<div class="cell" style="left:1011px;top:137px;width:7px;height:17px;background:radial-gradient(rgba(115,191,105,0.95) 10%,rgba(115,191,105,0.55))"></div>
<div class="cell" style="left:1019px;top:137px;width:7px;height:17px;background:radial-gradient(rgba(115,191,105,0.95) 10%,rgba(115,191,105,0.55))"></div>
<div class="cell" style="left:1027px;top:137px;width:7px;height:17px;background:radial-gradient(rgba(115,191,105,0.95) 10%,rgba(115,191,105,0.55))"></div>
<div class="cell" style="left:1035px;top:137px;width:7px;height:17px;background:radial-gradient(rgba(115,191,105,0.95) 10%,rgba(115,191,105,0.55))"></div>
<div class="cell" style="left:1043px;top:137px;width:7px;height:17px;background:radial-gradient(rgba(115,191,105,0.95) 10%,rgba(115,191,105,0.55))"></div>
<div class="cell" style="left:1051px;top:137px;width:7px;height:17px;background:radial-gradient(rgba(115,191,105,0.95) 10%,rgba(115,191,105,0.55))"></div>
<div class="cell" style="left:1059px;top:137px;width:7px;height:17px;background:radial-gradient(rgba(115,191,105,0.95) 10%,rgba(115,191,105,0.55))"></div>
<div class="cell" style="left:1067px;top:137px;width:7px;height:17px;background:radial-gradient(rgba(115,191,105,0.95) 10%,rgba(115,191,105,0.55))"></div>
<div class="cell" style="left:1075px;top:137px;width:7px;height:17px;background:radial-gradient(rgba(115,191,105,0.95) 10%,rgba(115,191,105,0.55))"></div>
<div class="cell" style="left:1083px;top:137px;width:7px;height:17px;background:radial-gradient(rgba(115,191,105,0.95) 10%,rgba(115,191,105,0.55))"></div>
<div class="cell" style="left:1091px;top:137px;width:7px;height:17px;background:radial-gradient(rgba(115,191,105,0.95) 10%,rgba(115,191,105,0.55))"></div>
<div class="cell" style="left:1099px;top:137px;width:7px;height:17px;background:radial-gradient(rgba(115,191,105,0.95) 10%,rgba(115,191,105,0.55))"></div>
<div class="cell" style="left:1107px;top:137px;width:7px;height:17px;background:radial-gradient(rgba(115,191,105,0.95) 10%,rgba(115,191,105,0.55))"></div>
<div class="cell" style="left:1115px;top:137px;width:7px;height:17px;background:radial-gradient(rgba(115,191,105,0.95) 10%,rgba(115,191,105,0.55))"></div>
<div class="cell" style="left:1123px;top:137px;width:7px;height:17px;background:radial-gradient(rgba(115,191,105,0.95) 10%,rgba(115,191,105,0.55))"></div>
<div class="cell" style="left:1131px;top:137px;width:7px;height:17px;background:radial-gradient(rgba(115,191,105,0.95) 10%,rgba(115,191,105,0.55))"></div>
<div class="cell" style="left:1139px;top:137px;width:6px;height:17px;background:radial-gradient(rgba(115,191,105,0.95) 10%,rgba(115,191,105,0.55))"></div>
<div class="cell" style="left:1146px;top:137px;width:7px;height:17px;background:radial-gradient(rgba(115,191,105,0.95) 10%,rgba(115,191,105,0.55))"></div>
<div class="cell" style="left:1154px;top:137px;width:7px;height:17px;background:radial-gradient(rgba(115,191,105,0.95) 10%,rgba(115,191,105,0.55))"></div>
<div class="cell" style="left:1162px;top:137px;width:7px;height:17px;background:radial-gradient(rgba(115,191,105,0.95) 10%,rgba(115,191,105,0.55))"></div>
<div class="cell" style="left:1170px;top:137px;width:7px;height:17px;background:radial-gradient(rgba(115,191,105,0.95) 10%,rgba(115,191,105,0.55))"></div>
<div class="cell" style="left:1178px;top:137px;width:7px;height:17px;background:radial-gradient(rgba(115,191,105,0.95) 10%,rgba(115,191,105,0.55))"></div>
<div class="cell" style="left:1186px;top:137px;width:7px;height:17px;background:radial-gradient(rgba(115,191,105,0.95) 10%,rgba(115,191,105,0.55))"></div>
<div class="cell" style="left:1194px;top:137px;width:7px;height:17px;background:radial-gradient(rgba(115,191,105,0.95) 10%,rgba(115,191,105,0.55))"></div>
<div class="cell" style="left:1202px;top:137px;width:7px;height:17px;background:radial-gradient(rgba(115,191,105,0.95) 10%,rgba(115,191,105,0.55))"></div>
<div class="cell" style="left:1210px;top:137px;width:7px;height:17px;background:radial-gradient(rgba(115,191,105,0.95) 10%,rgba(115,191,105,0.55))"></div>
<div class="cell" style="left:1218px;top:137px;width:7px;height:17px;background:radial-gradient(rgba(115,191,105,0.95) 10%,rgba(115,191,105,0.55))"></div>
<div class="cell" style="left:1226px;top:137px;width:7px;height:17px;background:radial-gradient(rgba(115,191,105,0.95) 10%,rgba(115,191,105,0.55))"></div>
<div class="cell" style="left:1234px;top:137px;width:7px;height:17px;background:radial-gradient(rgba(115,191,105,0.95) 10%,rgba(115,191,105,0.55))"></div>
<div class="cell" style="left:1242px;top:137px;width:7px;height:17px;background:rgba(115,191,105,0.18)"></div>
<div class="cell" style="left:1250px;top:137px;width:7px;height:17px;background:rgba(115,191,105,0.18)"></div>
<div class="cell" style="left:1258px;top:137px;width:7px;height:17px;background:rgba(115,191,105,0.18)"></div>
<div class="cell" style="left:1266px;top:137px;width:7px;height:17px;background:rgba(115,191,105,0.18)"></div>
<div class="cell" style="left:1274px;top:137px;width:7px;height:17px;background:rgba(115,191,105,0.18)"></div>
<div class="cell" style="left:1282px;top:137px;width:7px;height:17px;background:rgba(115,191,105,0.18)"></div>
<div class="cell" style="left:1290px;top:137px;width:7px;height:17px;background:rgba(115,191,105,0.18)"></div>
<div class="cell" style="left:1298px;top:137px;width:7px;height:17px;background:rgba(115,191,105,0.18)"></div>
<div class="cell" style="left:1306px;top:137px;width:7px;height:17px;background:rgba(115,191,105,0.18)"></div>
<div class="t" style="right:662px;top:140.9px;font-size:8.9px;text-align:right">OK</div>
<div class="t" style="right:267px;top:138.1px;font-size:17.5px;color:#73bf69;text-align:right">3</div>
<div class="t" style="left:1430px;top:44.8px;font-size:10.2px;-webkit-text-stroke:0.28px #ccccdc">Last Dashboard Refresh:</div>
<div class="t" style="left:1430px;top:69.8px;font-size:18.2px;font-weight:bold;letter-spacing:-0.42px">2025-03-24 16:21:47.807</div>
<div class="panel" style="left:-2px;top:166px;width:786px;height:374px"></div>
<div class="panel" style="left:789px;top:166px;width:867px;height:374px"></div>
<div class="t" style="left:3px;top:171.6px;font-size:9.9px;-webkit-text-stroke:0.28px #ccccdc">Geo Rooms Distribution</div>
<div class="t" style="left:795.5px;top:171.6px;font-size:9.9px;-webkit-text-stroke:0.28px #ccccdc">NEAT Device Rooms</div>
<div class="a" style="left:0;top:188px;width:783px;height:351px;background:#f2efe9;overflow:hidden">
<svg width="783" height="351" viewBox="0 0 783 351" style="position:absolute;left:0;top:0">
<rect width="783" height="351" fill="#f1eee8"/>
<defs><filter id="gA" x="0" y="0" width="100%" height="100%" color-interpolation-filters="sRGB"><feTurbulence type="fractalNoise" baseFrequency="0.13" numOctaves="4" seed="3"/><feColorMatrix type="matrix" values="0 0 0 0 0.835  0 0 0 0 0.905  0 0 0 0 0.775  0 0 0 10 -6.2"/><feGaussianBlur stdDeviation="0.45"/></filter><filter id="gB" x="0" y="0" width="100%" height="100%" color-interpolation-filters="sRGB"><feTurbulence type="fractalNoise" baseFrequency="0.12" numOctaves="4" seed="9"/><feColorMatrix type="matrix" values="0 0 0 0 0.82  0 0 0 0 0.895  0 0 0 0 0.76  0 0 0 8 -3.7"/><feGaussianBlur stdDeviation="0.45"/></filter><filter id="bl" x="-50%" y="-50%" width="200%" height="200%"><feGaussianBlur stdDeviation="10"/></filter><mask id="mB" maskUnits="userSpaceOnUse" x="0" y="0" width="783" height="351"><g filter="url(#bl)" fill="#fff"><ellipse cx="113" cy="60" rx="42.0" ry="37.5" opacity="1"/><ellipse cx="150" cy="17" rx="52.5" ry="27.0" opacity="0.9"/><ellipse cx="234" cy="24" rx="45.0" ry="37.5" opacity="1"/><ellipse cx="120" cy="152" rx="42.0" ry="37.5" opacity="0.9"/><ellipse cx="420" cy="50" rx="52.5" ry="37.5" opacity="1"/><ellipse cx="485" cy="22" rx="45.0" ry="33.0" opacity="0.9"/><ellipse cx="490" cy="122" rx="33.0" ry="37.5" opacity="0.8"/><ellipse cx="388" cy="142" rx="52.5" ry="42.0" opacity="1"/><ellipse cx="640" cy="27" rx="90.0" ry="37.5" opacity="1"/><ellipse cx="740" cy="62" rx="67.5" ry="67.5" opacity="1"/><ellipse cx="645" cy="142" rx="52.5" ry="45.0" opacity="0.7"/><ellipse cx="90" cy="232" rx="42.0" ry="60.0" opacity="1"/><ellipse cx="165" cy="197" rx="45.0" ry="27.0" opacity="0.7"/><ellipse cx="228" cy="197" rx="45.0" ry="27.0" opacity="1"/><ellipse cx="75" cy="327" rx="33.0" ry="33.0" opacity="0.7"/><ellipse cx="340" cy="262" rx="67.5" ry="33.0" opacity="0.9"/><ellipse cx="470" cy="202" rx="60.0" ry="37.5" opacity="1"/><ellipse cx="470" cy="327" rx="60.0" ry="37.5" opacity="0.7"/><ellipse cx="540" cy="212" rx="52.5" ry="52.5" opacity="0.9"/><ellipse cx="575" cy="282" rx="30.0" ry="37.5" opacity="0.6"/><ellipse cx="600" cy="112" rx="37.5" ry="45.0" opacity="0.5"/><ellipse cx="290" cy="232" rx="52.5" ry="37.5" opacity="0.5"/><ellipse cx="250" cy="312" rx="60.0" ry="45.0" opacity="0.5"/><ellipse cx="340" cy="132" rx="45.0" ry="22.5" opacity="0.9"/><ellipse cx="410" cy="132" rx="37.5" ry="30.0" opacity="1"/><ellipse cx="505" cy="172" rx="45.0" ry="37.5" opacity="0.9"/><ellipse cx="455" cy="157" rx="37.5" ry="30.0" opacity="0.8"/><ellipse cx="545" cy="162" rx="37.5" ry="37.5" opacity="0.8"/><ellipse cx="330" cy="252" rx="52.5" ry="22.5" opacity="0.8"/><ellipse cx="450" cy="342" rx="75.0" ry="22.5" opacity="0.6"/><ellipse cx="600" cy="192" rx="30.0" ry="37.5" opacity="0.6"/><ellipse cx="700" cy="92" rx="45.0" ry="37.5" opacity="0.8"/><ellipse cx="600" cy="62" rx="37.5" ry="30.0" opacity="0.5"/></g></mask></defs>
<rect width="783" height="351" filter="url(#gA)"/>
<rect width="783" height="351" filter="url(#gB)" mask="url(#mB)"/>
<polyline points="402.6,196.8 407.3,186.8 413.9,178.0 422.3,171.0 433.3,169.8 442.4,163.7" fill="none" stroke="#f5c4ad" stroke-width="0.75" stroke-linejoin="round" stroke-linecap="round" />
<polyline points="221.6,157.4 227.9,166.5 232.2,176.5 240.9,183.3 240.4,194.3 237.1,204.8 229.1,212.4" fill="none" stroke="#f5c4ad" stroke-width="0.75" stroke-linejoin="round" stroke-linecap="round" />
<polyline points="513.6,56.8 524.6,56.6 535.6,57.4 546.5,58.5 556.4,63.3 567.3,64.7 578.1,66.7" fill="none" stroke="#f5c4ad" stroke-width="0.75" stroke-linejoin="round" stroke-linecap="round" />
<polyline points="496.9,70.0 501.2,80.1 510.0,86.7 518.8,93.3 529.0,97.3" fill="none" stroke="#f5c4ad" stroke-width="0.75" stroke-linejoin="round" stroke-linecap="round" />
<polyline points="773.4,348.5 780.0,339.7 785.7,330.3 793.3,322.4 800.8,314.3" fill="none" stroke="#f5c4ad" stroke-width="0.75" stroke-linejoin="round" stroke-linecap="round" />
<polyline points="616.1,141.3 623.5,133.2 631.3,125.5 639.4,118.0 646.7,109.8 652.0,100.1" fill="none" stroke="#f5c4ad" stroke-width="0.75" stroke-linejoin="round" stroke-linecap="round" />
<polyline points="725.4,20.2 721.2,30.4 714.9,39.4 707.2,47.2 696.6,50.4 686.7,55.2" fill="none" stroke="#f5c4ad" stroke-width="0.75" stroke-linejoin="round" stroke-linecap="round" />
<polyline points="105.3,144.7 116.0,142.2 126.7,139.8 137.7,139.1" fill="none" stroke="#f5c4ad" stroke-width="0.75" stroke-linejoin="round" stroke-linecap="round" />
<polyline points="135.7,279.4 138.9,289.9 138.0,300.8 131.0,309.3 124.5,318.2 120.9,328.6 115.7,338.3" fill="none" stroke="#f5c4ad" stroke-width="0.75" stroke-linejoin="round" stroke-linecap="round" />
<polyline points="363.5,346.5 374.2,343.9 384.1,348.7 393.6,354.2 400.7,362.7 404.9,372.8 412.7,380.6" fill="none" stroke="#f5c4ad" stroke-width="0.75" stroke-linejoin="round" stroke-linecap="round" />
<polyline points="163.2,346.3 160.5,356.9 157.5,367.5 152.8,377.4 151.2,388.3" fill="none" stroke="#f5c4ad" stroke-width="0.75" stroke-linejoin="round" stroke-linecap="round" />
<polyline points="145.5,74.6 136.4,68.5 126.2,64.4" fill="none" stroke="#f5c4ad" stroke-width="0.75" stroke-linejoin="round" stroke-linecap="round" />
<polyline points="403.2,335.8 392.3,334.4 382.1,330.3 371.2,328.4 360.3,328.8 349.3,328.5 339.6,323.3" fill="none" stroke="#f5c4ad" stroke-width="0.75" stroke-linejoin="round" stroke-linecap="round" />
<polyline points="588.3,57.1 583.2,47.4 586.8,37.0 593.7,28.4 597.6,18.2 600.0,7.4 603.2,-3.1" fill="none" stroke="#f5c4ad" stroke-width="0.75" stroke-linejoin="round" stroke-linecap="round" />
<polyline points="121.3,337.0 122.4,348.0 116.7,357.3 113.3,367.8 111.7,378.7 107.5,388.8" fill="none" stroke="#f5c4ad" stroke-width="0.75" stroke-linejoin="round" stroke-linecap="round" />
<polyline points="141.8,81.5 134.7,73.1 126.0,66.3 116.2,61.3 107.6,54.5 98.3,48.6 90.9,40.5" fill="none" stroke="#f5c4ad" stroke-width="0.75" stroke-linejoin="round" stroke-linecap="round" />
<polyline points="398.1,23.0 402.7,33.0 413.5,35.3 424.5,35.7 435.3,37.8" fill="none" stroke="#f5c4ad" stroke-width="0.75" stroke-linejoin="round" stroke-linecap="round" />
<polyline points="401.2,117.2 401.2,106.2 399.4,95.3 396.5,84.7 394.3,73.9 392.2,63.1 395.2,52.5" fill="none" stroke="#f5c4ad" stroke-width="0.75" stroke-linejoin="round" stroke-linecap="round" />
<polyline points="749.7,9.4 740.4,3.5 733.1,-4.7 726.8,-13.7 721.3,-23.3 716.9,-33.3" fill="none" stroke="#f5c4ad" stroke-width="0.75" stroke-linejoin="round" stroke-linecap="round" />
<polyline points="403.1,130.0 412.8,135.1 423.4,132.3 432.7,126.3" fill="none" stroke="#f5c4ad" stroke-width="0.75" stroke-linejoin="round" stroke-linecap="round" />
<polyline points="707.6,305.1 696.6,306.2 685.8,303.9" fill="none" stroke="#f5c4ad" stroke-width="0.75" stroke-linejoin="round" stroke-linecap="round" />
<polyline points="520.0,135.1 509.1,133.1 498.7,129.8 488.4,125.7 479.2,119.7 471.3,112.1 461.6,107.0" fill="none" stroke="#f5c4ad" stroke-width="0.75" stroke-linejoin="round" stroke-linecap="round" />
<polyline points="730.3,243.6 719.4,244.8 708.4,245.1 697.5,246.8 686.6,248.5 675.9,251.1" fill="none" stroke="#f5c4ad" stroke-width="0.75" stroke-linejoin="round" stroke-linecap="round" />
<polyline points="503.9,169.4 510.2,178.4 516.4,187.5" fill="none" stroke="#f5c4ad" stroke-width="0.75" stroke-linejoin="round" stroke-linecap="round" />
<polyline points="720.9,91.0 731.2,95.0 739.2,102.5 750.1,104.3 761.0,105.4" fill="none" stroke="#f5c4ad" stroke-width="0.75" stroke-linejoin="round" stroke-linecap="round" />
<polyline points="327.9,325.7 317.3,328.5 306.5,326.2 296.1,322.7" fill="none" stroke="#f5c4ad" stroke-width="0.75" stroke-linejoin="round" stroke-linecap="round" />
<polyline points="643.1,320.1 653.2,315.9 663.9,313.1 673.4,318.6 682.6,324.6 690.7,332.1" fill="none" stroke="#f5c4ad" stroke-width="0.75" stroke-linejoin="round" stroke-linecap="round" />
<polyline points="333.5,313.7 343.0,319.2 353.0,323.8" fill="none" stroke="#f5c4ad" stroke-width="0.75" stroke-linejoin="round" stroke-linecap="round" />
<polyline points="210.0,158.8 206.5,169.2 206.2,180.2 211.4,189.9" fill="none" stroke="#f5c4ad" stroke-width="0.75" stroke-linejoin="round" stroke-linecap="round" />
<polyline points="582.1,295.0 573.8,287.7 566.1,279.9 558.7,271.7 552.0,263.0" fill="none" stroke="#f5c4ad" stroke-width="0.75" stroke-linejoin="round" stroke-linecap="round" />
<polyline points="576.9,200.6 573.6,211.1 568.5,220.8 563.2,230.4 558.5,240.4 553.7,250.3 547.7,259.5" fill="none" stroke="#f5c4ad" stroke-width="0.75" stroke-linejoin="round" stroke-linecap="round" />
<polyline points="190.8,18.3 181.6,12.3 175.0,3.5 170.9,-6.7 164.8,-15.9 156.6,-23.2" fill="none" stroke="#f5c4ad" stroke-width="0.75" stroke-linejoin="round" stroke-linecap="round" />
<polyline points="148.0,70.9 153.2,61.2 158.7,51.7 158.6,40.7 159.5,29.8" fill="none" stroke="#f5c4ad" stroke-width="0.75" stroke-linejoin="round" stroke-linecap="round" />
<polyline points="216.8,96.8 222.9,105.9 229.0,115.1 231.4,125.8 227.6,136.2 224.6,146.7 224.2,157.7" fill="none" stroke="#f5c4ad" stroke-width="0.75" stroke-linejoin="round" stroke-linecap="round" />
<polyline points="374.1,312.6 369.9,322.8 364.2,332.2 356.1,339.7 349.6,348.5 349.7,359.5" fill="none" stroke="#f5c4ad" stroke-width="0.75" stroke-linejoin="round" stroke-linecap="round" />
<polyline points="636.8,330.6 627.3,336.2 616.3,335.7 606.4,330.9" fill="none" stroke="#f5c4ad" stroke-width="0.75" stroke-linejoin="round" stroke-linecap="round" />
<polyline points="637.8,323.6 637.9,334.6 643.9,343.8 645.5,354.7" fill="none" stroke="#f5c4ad" stroke-width="0.75" stroke-linejoin="round" stroke-linecap="round" />
<polyline points="632.7,113.5 641.6,107.0 650.0,99.9" fill="none" stroke="#f5c4ad" stroke-width="0.75" stroke-linejoin="round" stroke-linecap="round" />
<polyline points="394.8,193.5 397.4,182.8 402.1,172.9 405.7,162.5 411.7,153.3 415.0,142.8" fill="none" stroke="#f5c4ad" stroke-width="0.75" stroke-linejoin="round" stroke-linecap="round" />
<polyline points="118.9,187.5 108.2,190.3 97.2,190.2 86.9,186.4" fill="none" stroke="#f5c4ad" stroke-width="0.75" stroke-linejoin="round" stroke-linecap="round" />
<polyline points="556.0,155.2 561.9,145.9 569.1,137.6 575.8,128.9 583.2,120.8 593.3,116.4 602.7,110.6" fill="none" stroke="#f5c4ad" stroke-width="0.75" stroke-linejoin="round" stroke-linecap="round" />
<polyline points="529.4,183.9 539.4,179.3 549.3,174.4 560.3,175.2 568.4,182.6 577.8,188.3 588.2,191.7" fill="none" stroke="#f5c4ad" stroke-width="0.75" stroke-linejoin="round" stroke-linecap="round" />
<polyline points="191.0,191.6 191.5,202.5 190.5,213.5 185.3,223.2 185.0,234.2 184.9,245.2" fill="none" stroke="#f5c4ad" stroke-width="0.75" stroke-linejoin="round" stroke-linecap="round" />
<polyline points="113.9,339.4 107.2,348.1 103.2,358.3 98.1,368.1 92.0,377.3 82.8,383.3" fill="none" stroke="#f5c4ad" stroke-width="0.75" stroke-linejoin="round" stroke-linecap="round" />
<polyline points="407.1,322.4 416.4,316.7 425.5,310.4 436.3,308.2 447.3,308.7 457.7,312.2" fill="none" stroke="#f5c4ad" stroke-width="0.75" stroke-linejoin="round" stroke-linecap="round" />
<polyline points="649.7,315.4 638.8,313.9 628.5,310.0 619.7,303.5 611.1,296.5" fill="none" stroke="#f5c4ad" stroke-width="0.75" stroke-linejoin="round" stroke-linecap="round" />
<polyline points="572.4,342.1 582.9,345.3 590.4,353.4 598.9,360.4" fill="none" stroke="#f5c4ad" stroke-width="0.75" stroke-linejoin="round" stroke-linecap="round" />
<polyline points="516.4,38.5 518.4,27.7 523.3,17.8" fill="none" stroke="#f5c4ad" stroke-width="0.75" stroke-linejoin="round" stroke-linecap="round" />
<polyline points="583.0,246.1 587.5,236.0 589.2,225.2" fill="none" stroke="#f5c4ad" stroke-width="0.75" stroke-linejoin="round" stroke-linecap="round" />
<polyline points="455.0,57.6 455.3,68.6 458.7,79.1 465.2,87.9 469.0,98.2 476.4,106.3 482.5,115.5" fill="none" stroke="#f5c4ad" stroke-width="0.75" stroke-linejoin="round" stroke-linecap="round" />
<polyline points="598.7,284.1 606.3,276.1 608.2,265.2 605.2,254.6 604.5,243.7" fill="none" stroke="#f5c4ad" stroke-width="0.75" stroke-linejoin="round" stroke-linecap="round" />
<polyline points="227.3,35.7 238.2,34.3 249.0,32.5 259.0,27.9" fill="none" stroke="#f5c4ad" stroke-width="0.75" stroke-linejoin="round" stroke-linecap="round" />
<polyline points="161.0,291.6 150.6,295.3 139.7,293.9 128.9,292.0" fill="none" stroke="#f5c4ad" stroke-width="0.75" stroke-linejoin="round" stroke-linecap="round" />
<polyline points="482.5,126.4 485.7,115.9 492.0,106.9 500.5,99.9 509.2,93.1" fill="none" stroke="#f5c4ad" stroke-width="0.75" stroke-linejoin="round" stroke-linecap="round" />
<polyline points="561.3,67.8 572.3,68.1 581.2,74.5" fill="none" stroke="#f5c4ad" stroke-width="0.75" stroke-linejoin="round" stroke-linecap="round" />
<polyline points="512.1,317.0 501.1,317.3 490.1,316.5 479.6,313.5" fill="none" stroke="#f5c4ad" stroke-width="0.75" stroke-linejoin="round" stroke-linecap="round" />
<polyline points="666.3,346.6 675.3,340.2 683.6,333.0" fill="none" stroke="#f5c4ad" stroke-width="0.75" stroke-linejoin="round" stroke-linecap="round" />
<polyline points="558.1,29.0 568.8,31.1 579.4,34.2 590.3,32.6 601.3,33.2 610.4,39.4" fill="none" stroke="#f5c4ad" stroke-width="0.75" stroke-linejoin="round" stroke-linecap="round" />
<polyline points="669.1,65.1 658.4,67.7 648.4,72.4 638.0,75.7 627.0,76.7" fill="none" stroke="#f5c4ad" stroke-width="0.75" stroke-linejoin="round" stroke-linecap="round" />
<polyline points="105.5,312.8 112.5,304.3 117.5,294.6 121.6,284.4 122.8,273.4 122.2,262.4" fill="none" stroke="#f5c4ad" stroke-width="0.75" stroke-linejoin="round" stroke-linecap="round" />
<polyline points="613.4,99.3 620.5,107.7 629.9,113.4 634.7,123.3" fill="none" stroke="#f5c4ad" stroke-width="0.75" stroke-linejoin="round" stroke-linecap="round" />
<polyline points="567.5,269.0 563.8,258.6 560.7,248.1 560.0,237.1 560.3,226.1 557.4,215.5" fill="none" stroke="#f5c4ad" stroke-width="0.75" stroke-linejoin="round" stroke-linecap="round" />
<polyline points="163.6,311.0 174.4,313.3 184.9,316.5 194.1,322.5 203.7,327.8 212.9,333.9 219.4,342.7" fill="none" stroke="#f5c4ad" stroke-width="0.75" stroke-linejoin="round" stroke-linecap="round" />
<polyline points="218.7,28.7 208.1,31.4 199.5,38.3 190.4,44.5 190.5,55.5 185.5,65.3" fill="none" stroke="#f5c4ad" stroke-width="0.75" stroke-linejoin="round" stroke-linecap="round" />
<polyline points="597.4,91.3 588.0,97.1 578.4,102.5" fill="none" stroke="#f5c4ad" stroke-width="0.75" stroke-linejoin="round" stroke-linecap="round" />
<polyline points="102.3,92.0 106.0,102.3 113.4,110.5 121.8,117.6 126.4,127.6" fill="none" stroke="#f5c4ad" stroke-width="0.75" stroke-linejoin="round" stroke-linecap="round" />
<polyline points="771.7,224.0 774.7,213.5 772.4,202.7" fill="none" stroke="#f5c4ad" stroke-width="0.75" stroke-linejoin="round" stroke-linecap="round" />
<polyline points="744.6,136.5 754.0,130.8 762.1,123.2 770.4,116.0 774.4,105.8 778.5,95.6" fill="none" stroke="#f5c4ad" stroke-width="0.75" stroke-linejoin="round" stroke-linecap="round" />
<polyline points="134.8,331.0 126.7,338.4 117.4,344.2 111.0,353.2 105.4,362.7 100.7,372.6 90.3,376.2" fill="none" stroke="#f5c4ad" stroke-width="0.75" stroke-linejoin="round" stroke-linecap="round" />
<polyline points="546.2,262.2 556.9,259.4 566.5,254.0 572.8,245.1" fill="none" stroke="#f5c4ad" stroke-width="0.75" stroke-linejoin="round" stroke-linecap="round" />
<polyline points="130.9,111.7 120.6,115.5 110.9,110.4 100.8,105.8 95.9,96.0 94.5,85.1 89.4,75.3" fill="none" stroke="#f5c4ad" stroke-width="0.75" stroke-linejoin="round" stroke-linecap="round" />
<polyline points="756.8,86.8 746.3,83.4 739.2,75.0 739.1,64.0 739.2,53.0 745.0,43.7" fill="none" stroke="#f5c4ad" stroke-width="0.75" stroke-linejoin="round" stroke-linecap="round" />
<polyline points="129.3,147.2 138.3,153.5 146.1,161.2" fill="none" stroke="#f5c4ad" stroke-width="0.75" stroke-linejoin="round" stroke-linecap="round" />
<polyline points="342.0,50.6 332.7,56.5 321.8,57.5 312.9,64.0 302.5,67.6 302.0,78.5 304.1,89.3" fill="none" stroke="#f5c4ad" stroke-width="0.75" stroke-linejoin="round" stroke-linecap="round" />
<polyline points="742.8,257.5 746.8,267.8 750.9,278.0" fill="none" stroke="#f5c4ad" stroke-width="0.75" stroke-linejoin="round" stroke-linecap="round" />
<polyline points="440.0,296.6 440.3,307.6 444.9,317.6 453.2,324.8 463.1,329.5 473.0,334.3 483.8,336.8" fill="none" stroke="#f5c4ad" stroke-width="0.75" stroke-linejoin="round" stroke-linecap="round" />
<polyline points="264.3,342.9 273.6,337.1 282.7,330.9" fill="none" stroke="#f5c4ad" stroke-width="0.75" stroke-linejoin="round" stroke-linecap="round" />
<polyline points="271.5,11.4 282.4,12.5 293.4,13.3 302.9,18.8" fill="none" stroke="#f5c4ad" stroke-width="0.75" stroke-linejoin="round" stroke-linecap="round" />
<polyline points="469.4,221.6 459.9,227.1 451.6,234.4 441.8,239.3 433.1,246.0 424.3,252.6" fill="none" stroke="#f5c4ad" stroke-width="0.75" stroke-linejoin="round" stroke-linecap="round" />
<polyline points="686.3,281.2 675.3,281.4 665.8,286.9 660.6,296.5 653.5,305.0 647.8,314.4 641.0,323.0" fill="none" stroke="#f5c4ad" stroke-width="0.75" stroke-linejoin="round" stroke-linecap="round" />
<polyline points="199.4,293.0 188.4,292.4 177.5,293.8 166.7,291.5 155.7,291.2" fill="none" stroke="#f5c4ad" stroke-width="0.75" stroke-linejoin="round" stroke-linecap="round" />
<polyline points="346.1,35.8 350.7,25.8 354.2,15.3" fill="none" stroke="#f5c4ad" stroke-width="0.75" stroke-linejoin="round" stroke-linecap="round" />
<polyline points="481.2,285.7 470.2,285.9 459.3,284.8" fill="none" stroke="#f5c4ad" stroke-width="0.75" stroke-linejoin="round" stroke-linecap="round" />
<polyline points="545.2,30.4 542.0,40.9 536.8,50.7 535.3,61.6 529.4,70.8" fill="none" stroke="#f5c4ad" stroke-width="0.75" stroke-linejoin="round" stroke-linecap="round" />
<polyline points="344.1,42.8 335.7,35.8 325.1,33.0 314.2,31.2 303.2,32.4 299.0,42.5 297.0,53.3" fill="none" stroke="#f5c4ad" stroke-width="0.75" stroke-linejoin="round" stroke-linecap="round" />
<polyline points="406.6,79.0 417.4,76.8 428.3,78.3 439.3,77.3 450.1,79.1 461.1,77.8 472.0,78.9" fill="none" stroke="#f5c4ad" stroke-width="0.75" stroke-linejoin="round" stroke-linecap="round" />
<polyline points="227.6,198.2 233.4,188.9 242.3,182.4 251.7,176.6 261.7,172.1 266.9,162.4 273.8,153.9" fill="none" stroke="#f5c4ad" stroke-width="0.75" stroke-linejoin="round" stroke-linecap="round" />
<polyline points="647.1,79.0 656.9,74.0 664.2,65.8 668.1,55.5" fill="none" stroke="#f5c4ad" stroke-width="0.75" stroke-linejoin="round" stroke-linecap="round" />
<polyline points="138.6,192.3 135.6,181.7 131.1,171.6" fill="none" stroke="#f5c4ad" stroke-width="0.75" stroke-linejoin="round" stroke-linecap="round" />
<polyline points="166.7,111.2 176.8,115.5 183.3,124.4 186.3,135.0" fill="none" stroke="#f5c4ad" stroke-width="0.75" stroke-linejoin="round" stroke-linecap="round" />
<polyline points="382.0,249.8 371.4,252.8 360.4,252.2 350.0,255.6 339.2,253.5 328.2,252.4 317.6,249.5" fill="none" stroke="#f5c4ad" stroke-width="0.75" stroke-linejoin="round" stroke-linecap="round" />
<polyline points="426.9,282.1 434.8,289.7 444.0,295.7 451.5,303.8 461.8,307.7 469.9,315.1 480.6,317.7" fill="none" stroke="#f5c4ad" stroke-width="0.75" stroke-linejoin="round" stroke-linecap="round" />
<polyline points="662.0,311.2 669.6,303.3 676.5,294.7" fill="none" stroke="#f5c4ad" stroke-width="0.75" stroke-linejoin="round" stroke-linecap="round" />
<polyline points="640.5,148.7 630.8,153.9 620.3,157.0 611.5,163.6" fill="none" stroke="#f5c4ad" stroke-width="0.75" stroke-linejoin="round" stroke-linecap="round" />
<polyline points="313.2,137.5 302.5,139.8 291.5,140.9 280.6,142.2 269.8,144.2" fill="none" stroke="#f5c4ad" stroke-width="0.75" stroke-linejoin="round" stroke-linecap="round" />
<polyline points="535.6,272.0 538.7,282.6 541.7,293.2" fill="none" stroke="#f5c4ad" stroke-width="0.75" stroke-linejoin="round" stroke-linecap="round" />
<polyline points="422.1,280.5 418.6,291.0 414.0,301.0 407.4,309.7" fill="none" stroke="#f5c4ad" stroke-width="0.75" stroke-linejoin="round" stroke-linecap="round" />
<polyline points="255.1,251.6 244.1,252.7 233.3,250.8 223.4,255.8" fill="none" stroke="#f5c4ad" stroke-width="0.75" stroke-linejoin="round" stroke-linecap="round" />
<polyline points="732.4,220.1 743.4,221.0 754.2,218.9 765.0,217.2 775.0,221.8 786.0,221.0 796.5,217.6" fill="none" stroke="#f5c4ad" stroke-width="0.75" stroke-linejoin="round" stroke-linecap="round" />
<polyline points="745.8,169.9 743.7,180.8 741.3,191.5" fill="none" stroke="#f5c4ad" stroke-width="0.75" stroke-linejoin="round" stroke-linecap="round" />
<polyline points="637.8,341.7 642.8,331.8 648.0,322.1 652.0,311.9 661.5,306.3" fill="none" stroke="#f5c4ad" stroke-width="0.75" stroke-linejoin="round" stroke-linecap="round" />
<polyline points="689.4,317.0 680.6,323.7 672.7,331.3 668.9,341.6" fill="none" stroke="#f5c4ad" stroke-width="0.75" stroke-linejoin="round" stroke-linecap="round" />
<polyline points="202.0,56.6 192.8,62.7 186.2,71.5 176.8,77.2 165.9,78.5" fill="none" stroke="#f5c4ad" stroke-width="0.75" stroke-linejoin="round" stroke-linecap="round" />
<polyline points="516.3,181.5 526.6,185.2 537.1,188.6 546.1,194.9 557.1,194.9 568.1,195.6 579.1,194.9" fill="none" stroke="#f5c4ad" stroke-width="0.75" stroke-linejoin="round" stroke-linecap="round" />
<polyline points="278.5,251.3 287.9,257.2 297.9,261.7 307.9,266.2 318.9,266.0 329.9,265.0" fill="none" stroke="#f5c4ad" stroke-width="0.75" stroke-linejoin="round" stroke-linecap="round" />
<polyline points="222.7,69.2 218.1,59.2 214.7,48.7 215.9,37.8 214.9,26.8 213.5,15.9" fill="none" stroke="#f5c4ad" stroke-width="0.75" stroke-linejoin="round" stroke-linecap="round" />
<polyline points="660.8,110.4 668.2,118.4 678.3,122.8" fill="none" stroke="#f5c4ad" stroke-width="0.75" stroke-linejoin="round" stroke-linecap="round" />
<polyline points="548.7,25.3 556.8,32.8 563.1,41.8 574.0,42.6" fill="none" stroke="#f5c4ad" stroke-width="0.75" stroke-linejoin="round" stroke-linecap="round" />
<polyline points="659.2,229.6 669.7,232.8 680.5,235.0 691.3,232.9 702.0,230.4 713.0,229.7" fill="none" stroke="#f5c4ad" stroke-width="0.75" stroke-linejoin="round" stroke-linecap="round" />
<polyline points="619.8,299.9 627.4,291.9 634.0,283.1 634.7,272.1" fill="none" stroke="#f5c4ad" stroke-width="0.75" stroke-linejoin="round" stroke-linecap="round" />
<polyline points="604.8,334.0 599.0,324.7 591.9,316.3 583.1,309.7 575.5,301.7 573.2,290.9 566.8,282.0" fill="none" stroke="#f5c4ad" stroke-width="0.75" stroke-linejoin="round" stroke-linecap="round" />
<polyline points="477.7,253.9 467.3,257.3 456.4,259.0 445.4,259.6 435.2,255.4 426.7,248.5" fill="none" stroke="#f5c4ad" stroke-width="0.75" stroke-linejoin="round" stroke-linecap="round" />
<polyline points="576.6,64.6 568.5,72.0 561.1,80.1 553.3,87.9 544.2,94.1 533.8,97.7" fill="none" stroke="#f5c4ad" stroke-width="0.75" stroke-linejoin="round" stroke-linecap="round" />
<polyline points="144.4,322.4 133.7,324.6 122.7,325.2 111.8,323.8 101.9,319.1 94.8,310.6 83.9,309.6" fill="none" stroke="#f5c4ad" stroke-width="0.75" stroke-linejoin="round" stroke-linecap="round" />
<polyline points="518.7,255.0 511.0,247.1 509.2,236.3 506.7,225.5 501.5,215.8" fill="none" stroke="#f5c4ad" stroke-width="0.75" stroke-linejoin="round" stroke-linecap="round" />
<polyline points="107.6,117.2 105.7,128.0 101.0,138.0 94.3,146.7 93.9,157.7 93.9,168.7" fill="none" stroke="#f5c4ad" stroke-width="0.75" stroke-linejoin="round" stroke-linecap="round" />
<polyline points="656.1,214.8 658.5,225.5 663.4,235.4 670.6,243.7 674.8,253.9 675.2,264.9 670.9,275.0" fill="none" stroke="#f5c4ad" stroke-width="0.75" stroke-linejoin="round" stroke-linecap="round" />
<polyline points="766.0,181.6 762.8,171.0 759.3,160.6 752.7,151.9" fill="none" stroke="#f5c4ad" stroke-width="0.75" stroke-linejoin="round" stroke-linecap="round" />
<polyline points="187.7,168.3 182.0,177.7 180.3,188.6 171.9,195.7 165.6,204.7" fill="none" stroke="#f5c4ad" stroke-width="0.75" stroke-linejoin="round" stroke-linecap="round" />
<polyline points="179.3,340.8 183.8,350.8 192.1,358.1 201.2,364.3 211.6,368.0 222.2,370.6 226.6,380.7" fill="none" stroke="#f5c4ad" stroke-width="0.75" stroke-linejoin="round" stroke-linecap="round" />
<polyline points="650.9,211.3 661.7,213.3 672.7,213.4" fill="none" stroke="#f5c4ad" stroke-width="0.75" stroke-linejoin="round" stroke-linecap="round" />
<polyline points="258.8,201.6 269.2,197.9 276.3,189.6 280.0,179.2" fill="none" stroke="#f5c4ad" stroke-width="0.75" stroke-linejoin="round" stroke-linecap="round" />
<polyline points="404.0,142.4 404.2,131.4 409.5,121.8 414.6,112.0" fill="none" stroke="#f5c4ad" stroke-width="0.75" stroke-linejoin="round" stroke-linecap="round" />
<polyline points="497.5,281.7 508.2,279.1 518.6,275.7 529.2,272.8" fill="none" stroke="#f5c4ad" stroke-width="0.75" stroke-linejoin="round" stroke-linecap="round" />
<polyline points="453.9,43.2 446.8,51.5 439.9,60.1 435.8,70.3 433.0,81.0" fill="none" stroke="#f5c4ad" stroke-width="0.75" stroke-linejoin="round" stroke-linecap="round" />
<polyline points="531.4,15.2 523.2,7.8 517.0,-1.3 513.3,-11.7" fill="none" stroke="#f5c4ad" stroke-width="0.75" stroke-linejoin="round" stroke-linecap="round" />
<polyline points="704.8,319.7 695.7,313.5 686.6,307.3 675.9,305.1 668.7,296.7 661.5,288.4" fill="none" stroke="#f5c4ad" stroke-width="0.75" stroke-linejoin="round" stroke-linecap="round" />
<polyline points="676.4,144.3 665.7,142.1 657.6,134.6 648.3,128.8 641.6,120.1 634.3,111.8 627.4,103.3" fill="none" stroke="#f5c4ad" stroke-width="0.75" stroke-linejoin="round" stroke-linecap="round" />
<polyline points="711.9,105.0 703.4,98.1 692.6,95.9 681.8,93.6 670.9,94.5 660.1,96.7" fill="none" stroke="#f5c4ad" stroke-width="0.75" stroke-linejoin="round" stroke-linecap="round" />
<polyline points="179.6,157.5 168.6,158.2 158.3,154.6 147.6,151.7 140.6,143.2 138.1,132.5" fill="none" stroke="#f5c4ad" stroke-width="0.75" stroke-linejoin="round" stroke-linecap="round" />
<polyline points="465.6,230.6 476.4,232.7 487.2,234.7" fill="none" stroke="#f5c4ad" stroke-width="0.75" stroke-linejoin="round" stroke-linecap="round" />
<polyline points="687.6,130.3 677.4,126.3 666.5,124.8 655.6,123.3 645.1,126.8 634.3,128.9 623.8,131.9" fill="none" stroke="#f5c4ad" stroke-width="0.75" stroke-linejoin="round" stroke-linecap="round" />
<polyline points="633.8,45.1 624.1,39.8 614.5,34.6 604.4,30.2 596.0,23.2 593.9,12.3" fill="none" stroke="#f5c4ad" stroke-width="0.75" stroke-linejoin="round" stroke-linecap="round" />
<polyline points="649.5,140.2 640.5,146.6 631.3,152.6 620.8,155.7 611.5,161.7 601.8,166.9 592.6,172.9" fill="none" stroke="#f5c4ad" stroke-width="0.75" stroke-linejoin="round" stroke-linecap="round" />
<polyline points="623.1,272.2 632.3,266.1 639.9,258.2 650.8,257.6" fill="none" stroke="#f5c4ad" stroke-width="0.75" stroke-linejoin="round" stroke-linecap="round" />
<polyline points="704.8,70.0 711.1,61.0 717.0,51.7 719.2,40.9 717.1,30.1" fill="none" stroke="#f5c4ad" stroke-width="0.75" stroke-linejoin="round" stroke-linecap="round" />
<polyline points="475.7,187.5 478.5,198.1 483.9,207.8" fill="none" stroke="#f5c4ad" stroke-width="0.75" stroke-linejoin="round" stroke-linecap="round" />
<polyline points="651.0,336.6 649.9,347.5 650.7,358.5 654.5,368.8 664.4,373.5 674.9,376.8" fill="none" stroke="#f5c4ad" stroke-width="0.75" stroke-linejoin="round" stroke-linecap="round" />
<polyline points="246.8,108.9 244.6,98.1 241.7,87.5 244.8,77.0" fill="none" stroke="#f5c4ad" stroke-width="0.75" stroke-linejoin="round" stroke-linecap="round" />
<polyline points="436.0,104.8 430.7,114.5 428.7,125.3 426.3,136.0 420.8,145.6 411.7,151.7 404.1,159.7" fill="none" stroke="#f5c4ad" stroke-width="0.75" stroke-linejoin="round" stroke-linecap="round" />
<polyline points="283.2,224.7 294.1,226.5 304.5,230.0" fill="none" stroke="#f5c4ad" stroke-width="0.75" stroke-linejoin="round" stroke-linecap="round" />
<polyline points="456.0,17.8 445.3,14.9 434.5,12.8 423.5,12.9 412.6,14.0" fill="none" stroke="#f5c4ad" stroke-width="0.75" stroke-linejoin="round" stroke-linecap="round" />
<polyline points="767.1,68.0 765.3,78.8 762.3,89.4 755.1,97.7 744.4,100.4 736.9,108.4 734.5,119.2" fill="none" stroke="#f5c4ad" stroke-width="0.75" stroke-linejoin="round" stroke-linecap="round" />
<polyline points="492.7,2.9 502.4,-2.3 513.4,-3.2" fill="none" stroke="#f5c4ad" stroke-width="0.75" stroke-linejoin="round" stroke-linecap="round" />
<polyline points="533.6,127.1 524.4,121.1 514.9,115.5" fill="none" stroke="#f5c4ad" stroke-width="0.75" stroke-linejoin="round" stroke-linecap="round" />
<polyline points="669.9,240.1 659.8,235.7 653.4,226.8 649.3,216.6 649.7,205.6 650.5,194.6 655.2,184.7" fill="none" stroke="#f5c4ad" stroke-width="0.75" stroke-linejoin="round" stroke-linecap="round" />
<polyline points="620.7,275.7 623.2,265.0 630.0,256.4 639.0,250.0" fill="none" stroke="#f5c4ad" stroke-width="0.75" stroke-linejoin="round" stroke-linecap="round" />
<polyline points="272.7,72.5 282.0,66.6 286.0,56.3" fill="none" stroke="#f5c4ad" stroke-width="0.75" stroke-linejoin="round" stroke-linecap="round" />
<polyline points="217.4,54.8 228.2,52.6 239.2,52.0 249.1,47.2 258.4,41.4 261.9,30.9" fill="none" stroke="#f5c4ad" stroke-width="0.75" stroke-linejoin="round" stroke-linecap="round" />
<polyline points="116.0,41.8 124.9,48.2 135.2,52.1 145.8,55.1 156.6,57.2 167.2,54.1 178.1,53.7" fill="none" stroke="#f5c4ad" stroke-width="0.75" stroke-linejoin="round" stroke-linecap="round" />
<polyline points="652.4,259.0 649.0,248.5 645.6,238.0 639.0,229.3 632.1,220.7 625.3,212.0 622.5,201.4" fill="none" stroke="#f5c4ad" stroke-width="0.75" stroke-linejoin="round" stroke-linecap="round" />
<polyline points="543.1,209.4 533.9,215.3 523.7,219.5 512.9,221.6 504.6,214.4" fill="none" stroke="#f5c4ad" stroke-width="0.75" stroke-linejoin="round" stroke-linecap="round" />
<polyline points="123.6,172.4 127.0,161.9 133.3,152.9 139.6,143.9" fill="none" stroke="#f5c4ad" stroke-width="0.75" stroke-linejoin="round" stroke-linecap="round" />
<polyline points="258.6,311.8 266.4,319.6 276.4,324.0 287.0,327.1 291.6,337.1 299.4,344.8" fill="none" stroke="#f5c4ad" stroke-width="0.75" stroke-linejoin="round" stroke-linecap="round" />
<polyline points="557.3,251.5 568.2,250.2 579.1,251.9 590.1,250.8 600.9,248.8 607.1,239.7 614.9,232.0" fill="none" stroke="#f5c4ad" stroke-width="0.75" stroke-linejoin="round" stroke-linecap="round" />
<polyline points="342.5,119.3 353.5,118.4 364.4,119.8 371.7,111.6 373.2,100.7 374.4,89.7 370.7,79.4" fill="none" stroke="#f5c4ad" stroke-width="0.75" stroke-linejoin="round" stroke-linecap="round" />
<polyline points="715.2,309.8 722.7,301.7 730.8,294.4 740.2,288.6" fill="none" stroke="#f5c4ad" stroke-width="0.75" stroke-linejoin="round" stroke-linecap="round" />
<polyline points="626.3,77.0 622.8,87.4 617.6,97.1 618.8,108.0" fill="none" stroke="#f5c4ad" stroke-width="0.75" stroke-linejoin="round" stroke-linecap="round" />
<polyline points="421.5,141.3 410.7,139.2 400.1,136.4 389.2,135.2 378.2,135.8" fill="none" stroke="#f5c4ad" stroke-width="0.75" stroke-linejoin="round" stroke-linecap="round" />
<polyline points="426.2,190.0 417.3,196.5 410.8,205.4" fill="none" stroke="#f5c4ad" stroke-width="0.75" stroke-linejoin="round" stroke-linecap="round" />
<polyline points="281.7,8.5 290.1,15.5 298.8,22.2 308.4,27.6 318.9,31.0" fill="none" stroke="#f5c4ad" stroke-width="0.75" stroke-linejoin="round" stroke-linecap="round" />
<polyline points="165.3,21.9 165.7,10.9 168.2,0.2 171.6,-10.2 173.5,-21.1" fill="none" stroke="#f5c4ad" stroke-width="0.75" stroke-linejoin="round" stroke-linecap="round" />
<polyline points="773.6,293.9 764.5,300.0 753.5,300.6 742.7,302.5 731.8,304.5 721.7,308.6" fill="none" stroke="#f5c4ad" stroke-width="0.75" stroke-linejoin="round" stroke-linecap="round" />
<polyline points="122.8,54.5 114.8,46.9 107.5,38.7" fill="none" stroke="#f5c4ad" stroke-width="0.75" stroke-linejoin="round" stroke-linecap="round" />
<polyline points="420.5,243.5 410.6,238.7 400.5,234.2 394.4,225.1 387.4,216.6 379.0,209.5 371.3,201.7" fill="none" stroke="#f5c4ad" stroke-width="0.75" stroke-linejoin="round" stroke-linecap="round" />
<polyline points="579.7,143.0 569.7,147.7 559.6,152.0 548.7,153.2 538.0,155.9" fill="none" stroke="#f5c4ad" stroke-width="0.75" stroke-linejoin="round" stroke-linecap="round" />
<polyline points="122.7,10.5 116.9,1.2 117.4,-9.8 118.3,-20.8 119.0,-31.8 114.2,-41.7 116.1,-52.5" fill="none" stroke="#f5c4ad" stroke-width="0.75" stroke-linejoin="round" stroke-linecap="round" />
<polyline points="474.5,125.0 480.0,134.5 485.1,144.3 484.9,155.3 481.3,165.7" fill="none" stroke="#f5c4ad" stroke-width="0.75" stroke-linejoin="round" stroke-linecap="round" />
<polyline points="361.9,22.9 352.4,28.5 343.7,35.2 332.7,36.5 321.7,36.3" fill="none" stroke="#f5c4ad" stroke-width="0.75" stroke-linejoin="round" stroke-linecap="round" />
<polyline points="232.3,269.4 221.4,271.0 213.2,278.3 205.5,286.2" fill="none" stroke="#f5c4ad" stroke-width="0.75" stroke-linejoin="round" stroke-linecap="round" />
<polyline points="712.1,281.9 701.5,284.8 693.0,291.8 684.8,299.1 677.0,306.9" fill="none" stroke="#f5c4ad" stroke-width="0.75" stroke-linejoin="round" stroke-linecap="round" />
<polyline points="361.1,128.8 371.5,132.5 380.0,139.5 387.2,147.8 396.2,154.1 406.0,159.1" fill="none" stroke="#f5c4ad" stroke-width="0.75" stroke-linejoin="round" stroke-linecap="round" />
<polyline points="144.1,14.3 146.9,25.0 152.2,34.6 158.5,43.6 165.8,51.8" fill="none" stroke="#f5c4ad" stroke-width="0.75" stroke-linejoin="round" stroke-linecap="round" />
<polyline points="414.1,216.1 423.8,211.0 434.8,211.7 445.7,213.5 456.5,215.6" fill="none" stroke="#f5c4ad" stroke-width="0.75" stroke-linejoin="round" stroke-linecap="round" />
<polyline points="127.4,190.9 120.1,182.7 112.0,175.3" fill="none" stroke="#f5c4ad" stroke-width="0.75" stroke-linejoin="round" stroke-linecap="round" />
<polyline points="693.2,134.9 704.2,135.8 714.8,138.6" fill="none" stroke="#f5c4ad" stroke-width="0.75" stroke-linejoin="round" stroke-linecap="round" />
<polyline points="280.5,174.3 271.9,181.1 262.5,186.7" fill="none" stroke="#f5c4ad" stroke-width="0.75" stroke-linejoin="round" stroke-linecap="round" />
<polyline points="250.4,238.7 249.4,249.7 240.4,255.9" fill="none" stroke="#f5c4ad" stroke-width="0.75" stroke-linejoin="round" stroke-linecap="round" />
<polyline points="97.4,192.4 99.4,181.6 107.0,173.6 116.6,168.3 127.6,167.2 137.4,162.3 147.7,158.3" fill="none" stroke="#f5c4ad" stroke-width="0.75" stroke-linejoin="round" stroke-linecap="round" />
<polyline points="165.6,8.7 166.6,-2.2 165.6,-13.2 159.4,-22.3" fill="none" stroke="#f5c4ad" stroke-width="0.75" stroke-linejoin="round" stroke-linecap="round" />
<polyline points="750.5,288.9 758.4,296.5 769.2,298.5 780.2,299.4 790.2,303.9 801.1,304.8 811.0,309.8" fill="none" stroke="#f5c4ad" stroke-width="0.75" stroke-linejoin="round" stroke-linecap="round" />
<polyline points="433.9,226.9 423.6,230.9 414.9,237.5 403.9,236.4" fill="none" stroke="#f5c4ad" stroke-width="0.75" stroke-linejoin="round" stroke-linecap="round" />
<polyline points="651.1,310.2 654.9,320.5 663.4,327.5 672.2,334.2 677.0,344.1 680.5,354.5" fill="none" stroke="#f5c4ad" stroke-width="0.75" stroke-linejoin="round" stroke-linecap="round" />
<polyline points="375.6,169.7 376.0,180.7 376.6,191.7 381.8,201.4 383.4,212.3 385.0,223.2" fill="none" stroke="#f5c4ad" stroke-width="0.75" stroke-linejoin="round" stroke-linecap="round" />
<polyline points="317.3,118.2 323.6,109.2 331.7,101.7 336.3,91.7 335.7,80.8 338.0,70.0 335.1,59.4" fill="none" stroke="#f5c4ad" stroke-width="0.75" stroke-linejoin="round" stroke-linecap="round" />
<polyline points="639.8,45.6 636.2,56.0 632.3,66.2 626.2,75.4 616.7,80.9" fill="none" stroke="#f5c4ad" stroke-width="0.75" stroke-linejoin="round" stroke-linecap="round" />
<polyline points="734.9,339.7 741.9,348.2 751.8,353.0 760.3,359.9 771.3,360.4" fill="none" stroke="#f5c4ad" stroke-width="0.75" stroke-linejoin="round" stroke-linecap="round" />
<polyline points="767.4,18.9 770.2,8.3 774.7,-1.7" fill="none" stroke="#f5c4ad" stroke-width="0.75" stroke-linejoin="round" stroke-linecap="round" />
<polyline points="337.4,189.4 339.1,178.5 340.4,167.6 342.5,156.8 340.3,146.0 337.0,135.5" fill="none" stroke="#f5c4ad" stroke-width="0.75" stroke-linejoin="round" stroke-linecap="round" />
<polyline points="348.9,109.6 353.3,99.5 362.3,93.2 370.2,85.5 378.9,78.8" fill="none" stroke="#f5c4ad" stroke-width="0.75" stroke-linejoin="round" stroke-linecap="round" />
<polyline points="486.9,236.9 488.6,247.8 492.2,258.1 495.0,268.8 496.3,279.7" fill="none" stroke="#f5c4ad" stroke-width="0.75" stroke-linejoin="round" stroke-linecap="round" />
<polyline points="729.8,89.5 719.5,85.7 713.0,76.9" fill="none" stroke="#f5c4ad" stroke-width="0.75" stroke-linejoin="round" stroke-linecap="round" />
<polyline points="278.7,200.0 277.5,210.9 273.6,221.2 273.3,232.2 272.6,243.2 272.0,254.1" fill="none" stroke="#f5c4ad" stroke-width="0.75" stroke-linejoin="round" stroke-linecap="round" />
<polyline points="138.8,312.6 133.6,322.4 125.7,330.0" fill="none" stroke="#f5c4ad" stroke-width="0.75" stroke-linejoin="round" stroke-linecap="round" />
<polyline points="190.0,276.6 201.0,276.1 211.1,271.8 221.4,267.8 232.0,265.1 241.3,259.1" fill="none" stroke="#f5c4ad" stroke-width="0.75" stroke-linejoin="round" stroke-linecap="round" />
<polyline points="134.2,193.6 128.1,184.4 124.2,174.2 119.6,164.2 117.7,153.3 117.5,142.3 112.8,132.4" fill="none" stroke="#f5c4ad" stroke-width="0.75" stroke-linejoin="round" stroke-linecap="round" />
<polyline points="734.7,18.4 736.6,7.5 737.0,-3.5 737.3,-14.5" fill="none" stroke="#f5c4ad" stroke-width="0.75" stroke-linejoin="round" stroke-linecap="round" />
<polyline points="472.9,23.9 462.0,25.4 451.1,23.6 440.6,20.3" fill="none" stroke="#f5c4ad" stroke-width="0.75" stroke-linejoin="round" stroke-linecap="round" />
<polyline points="616.5,94.2 622.1,103.6 623.9,114.5 622.7,125.4 627.1,135.5 629.9,146.1" fill="none" stroke="#f5c4ad" stroke-width="0.75" stroke-linejoin="round" stroke-linecap="round" />
<polyline points="741.3,142.0 738.1,131.5 739.1,120.5 737.0,109.7 737.1,98.7" fill="none" stroke="#f5c4ad" stroke-width="0.75" stroke-linejoin="round" stroke-linecap="round" />
<polyline points="315.1,254.1 304.1,253.5 293.2,251.6 282.3,253.1 272.0,256.8" fill="none" stroke="#f5c4ad" stroke-width="0.75" stroke-linejoin="round" stroke-linecap="round" />
<polyline points="284.9,317.0 282.7,327.8 280.7,338.6" fill="none" stroke="#f5c4ad" stroke-width="0.75" stroke-linejoin="round" stroke-linecap="round" />
<polyline points="217.5,18.3 222.8,27.9 229.0,37.0 236.9,44.7 243.5,53.5" fill="none" stroke="#f5c4ad" stroke-width="0.75" stroke-linejoin="round" stroke-linecap="round" />
<polyline points="333.2,151.9 344.1,153.9 354.5,157.4 364.7,161.5 370.5,170.8 378.1,178.8 385.6,186.8" fill="none" stroke="#f5c4ad" stroke-width="0.75" stroke-linejoin="round" stroke-linecap="round" />
<polyline points="213.7,25.1 204.0,20.0 196.8,11.7 189.4,3.6 184.1,-6.1 178.2,-15.4 168.9,-21.2" fill="none" stroke="#f5c4ad" stroke-width="0.75" stroke-linejoin="round" stroke-linecap="round" />
<polyline points="215.9,97.1 214.2,86.3 217.3,75.7 215.9,64.8 214.0,54.0" fill="none" stroke="#f5c4ad" stroke-width="0.75" stroke-linejoin="round" stroke-linecap="round" />
<polyline points="591.5,232.5 600.8,226.6 610.7,221.8" fill="none" stroke="#f5c4ad" stroke-width="0.75" stroke-linejoin="round" stroke-linecap="round" />
<polyline points="698.6,300.0 695.4,289.5 700.6,279.8 704.2,269.4 711.8,261.4 721.8,256.8 731.8,252.2" fill="none" stroke="#f5c4ad" stroke-width="0.75" stroke-linejoin="round" stroke-linecap="round" />
<polyline points="412.7,293.1 402.5,297.1 394.3,304.4 388.4,313.7 383.3,323.5 378.3,333.3" fill="none" stroke="#f5c4ad" stroke-width="0.75" stroke-linejoin="round" stroke-linecap="round" />
<polyline points="521.6,157.5 514.6,149.0 508.5,139.9 499.9,133.0 490.9,126.7 481.7,120.6 476.5,110.9" fill="none" stroke="#f5c4ad" stroke-width="0.75" stroke-linejoin="round" stroke-linecap="round" />
<polyline points="223.0,165.2 213.1,160.4 202.7,157.0" fill="none" stroke="#f5c4ad" stroke-width="0.75" stroke-linejoin="round" stroke-linecap="round" />
<polyline points="768.2,172.9 766.1,183.7 769.8,194.0 780.8,195.2" fill="none" stroke="#f5c4ad" stroke-width="0.75" stroke-linejoin="round" stroke-linecap="round" />
<polyline points="139.1,304.8 135.6,294.4 129.0,285.6 122.1,277.0 115.3,268.4" fill="none" stroke="#f5c4ad" stroke-width="0.75" stroke-linejoin="round" stroke-linecap="round" />
<polyline points="385.3,172.2 396.1,170.2 406.8,172.5 416.9,177.0" fill="none" stroke="#f5c4ad" stroke-width="0.75" stroke-linejoin="round" stroke-linecap="round" />
<polyline points="630.2,172.8 626.8,183.2 628.5,194.1 637.0,201.1 646.9,205.9 656.5,211.4" fill="none" stroke="#f5c4ad" stroke-width="0.75" stroke-linejoin="round" stroke-linecap="round" />
<polyline points="343.8,36.9 354.8,37.3 365.4,40.3 376.1,42.6 387.0,43.9" fill="none" stroke="#f5c4ad" stroke-width="0.75" stroke-linejoin="round" stroke-linecap="round" />
<polyline points="512.8,12.8 511.9,1.9 512.3,-9.1 511.8,-20.1 514.0,-30.9 515.9,-41.7" fill="none" stroke="#f5c4ad" stroke-width="0.75" stroke-linejoin="round" stroke-linecap="round" />
<polyline points="522.9,307.0 512.7,302.9 501.7,303.3 492.0,308.5" fill="none" stroke="#f5c4ad" stroke-width="0.75" stroke-linejoin="round" stroke-linecap="round" />
<polyline points="570.9,295.9 581.8,297.1 592.7,299.0 602.8,303.2 612.8,307.8 623.6,310.0 634.5,311.4" fill="none" stroke="#f5c4ad" stroke-width="0.75" stroke-linejoin="round" stroke-linecap="round" />
<polyline points="284.2,92.0 278.5,101.4 274.3,111.6 268.3,120.8 258.4,125.6 248.6,130.7 239.0,136.0" fill="none" stroke="#f5c4ad" stroke-width="0.75" stroke-linejoin="round" stroke-linecap="round" />
<polygon points="0.0,0.0 76.0,0.0 73.0,9.0 71.0,19.4 69.5,42.0 74.4,61.4 79.2,93.8 80.9,129.4 82.5,155.2 84.0,176.0 75.0,192.0 70.0,197.0 64.7,221.3 61.4,240.7 56.6,260.0 47.0,279.5 42.0,299.0 42.0,312.0 53.4,316.7 64.7,318.3 61.4,324.8 51.7,331.2 53.4,337.7 74.4,344.2 84.0,352.0 0.0,352.0" fill="#aad3df"/>
<polygon points="783.0,99.0 760.0,102.0 745.0,110.0 714.0,118.0 684.3,126.0 668.0,138.0 655.0,152.0 664.0,158.0 662.0,163.0 647.0,169.0 642.3,176.0 629.4,195.4 613.2,214.8 597.0,237.5 592.2,253.6 589.0,266.6 597.0,279.5 603.5,295.7 624.5,313.5 610.0,321.5 597.0,331.2 580.9,347.4 577.6,352.0 783.0,352.0" fill="#aad3df"/>
<polygon points="684.3,294.0 690.0,289.0 700.0,286.0 708.0,285.0 710.2,290.0 704.0,298.0 697.0,303.0 692.0,305.4 686.0,302.0" fill="#f1eee8" stroke="#cddcbc" stroke-width="0.6"/>
<polygon points="695.7,316.0 702.0,313.5 707.0,318.0 700.0,321.5" fill="#f1eee8"/>
<polygon points="753.9,248.8 762.0,239.0 772.0,232.0 783.0,226.0 783.0,263.3 776.5,253.6 770.0,252.0 762.0,252.0" fill="#f1eee8" stroke="#cddcbc" stroke-width="0.6"/>
<polyline points="38.0,0.0 48.0,32.0 56.0,62.0 59.0,112.0 61.0,152.0 59.8,176.0 48.5,208.3 30.0,232.0 16.2,250.4 14.6,260.0 16.0,282.0 19.4,312.0 28.0,332.0 38.8,352.0" fill="none" stroke="#a996ad" stroke-width="0.9" stroke-linejoin="round" stroke-linecap="round" />
<polyline points="783.0,102.0 750.0,125.0 696.0,142.0 671.0,177.0 671.4,176.0 635.8,218.0 614.8,253.6 614.8,273.0 639.0,302.0 642.3,318.3 606.7,352.0" fill="none" stroke="#a996ad" stroke-width="0.9" stroke-linejoin="round" stroke-linecap="round" />
<circle cx="653" cy="226.10000000000002" r="16.2" fill="none" stroke="#a996ad" stroke-width="0.9"/>
<rect x="666.5" y="269.8" width="61.5" height="68" rx="30" ry="32" fill="none" stroke="#a996ad" stroke-width="0.9"/>
<path d="M783 206.7 C755 224 733 240 737 255 C741 270 765 284 783 298.9" fill="none" stroke="#a996ad" stroke-width="0.9"/>
<polyline points="74.4,61.4 87.3,51.7 113.2,43.7 114.8,50.0 113.0,68.0 132.6,63.0 148.8,66.3 160.0,69.5 174.6,58.2 197.3,58.2 213.5,61.4 215.0,77.6 232.9,90.6 226.4,106.7 213.5,116.4 200.5,122.9 194.0,135.8 197.3,152.0 199.0,176.0 194.0,185.7 187.6,195.4 190.8,208.3 194.0,221.3 187.6,240.7 155.2,242.3 168.2,263.3 168.2,273.0 186.0,286.0 187.6,302.0 174.6,318.3 168.2,337.7 165.0,352.0" fill="none" stroke="#b9a8bd" stroke-width="1.5" stroke-linejoin="round" stroke-linecap="round" />
<polyline points="694.0,0.0 700.5,19.4 726.4,17.8 739.3,25.9 775.0,21.0 783.0,19.4" fill="none" stroke="#b9a8bd" stroke-width="1.5" stroke-linejoin="round" stroke-linecap="round" />
<polyline points="187.6,0.0 182.7,13.0 200.5,25.9 190.8,48.5 194.0,58.0" fill="none" stroke="#b9a9bb" stroke-width="0.8" stroke-linejoin="round" stroke-linecap="round" />
<polyline points="420.0,0.0 425.0,17.0 440.0,27.0 455.0,52.0 470.0,62.0 495.0,70.0 490.6,92.0 492.8,107.4 481.8,120.7 464.1,129.5 453.1,118.5 433.2,110.8 420.0,113.0 405.0,122.0 390.0,132.0" fill="none" stroke="#b9a9bb" stroke-width="0.8" stroke-linejoin="round" stroke-linecap="round" />
<polyline points="198.8,190.5 223.0,181.7 238.5,179.5 256.2,192.7 284.9,199.4 309.0,203.8 331.2,192.7 344.4,186.1 353.2,161.9 373.1,142.0 390.0,132.0" fill="none" stroke="#b9a9bb" stroke-width="0.8" stroke-linejoin="round" stroke-linecap="round" />
<polyline points="344.4,197.0 366.5,214.8 388.5,217.0 410.6,208.2 420.0,192.0 430.0,172.0 440.0,152.0 464.1,129.5" fill="none" stroke="#b9a9bb" stroke-width="0.8" stroke-linejoin="round" stroke-linecap="round" />
<polyline points="535.0,0.0 540.0,27.0 520.0,37.0 505.0,52.0 495.0,70.0" fill="none" stroke="#b9a9bb" stroke-width="0.8" stroke-linejoin="round" stroke-linecap="round" />
<polyline points="658.5,0.0 655.2,32.3 647.2,64.7 632.6,84.0 631.0,106.7 627.4,136.1 629.6,158.2 640.0,167.0 650.0,170.0" fill="none" stroke="#b9a9bb" stroke-width="0.8" stroke-linejoin="round" stroke-linecap="round" />
<polyline points="629.6,158.2 594.3,160.4 592.1,186.9 574.4,212.0 560.0,232.0" fill="none" stroke="#b9a9bb" stroke-width="0.8" stroke-linejoin="round" stroke-linecap="round" />
<polyline points="481.8,120.7 508.2,131.7 517.1,149.4 517.1,169.2 503.8,184.7 525.9,202.3 534.7,217.0 545.0,232.0 560.0,232.0 540.0,257.0 510.0,267.0 495.0,287.0 500.0,312.0 520.0,332.0 540.0,352.0" fill="none" stroke="#b9a9bb" stroke-width="0.8" stroke-linejoin="round" stroke-linecap="round" />
<polyline points="284.9,199.4 284.9,225.8 289.3,230.2 300.3,241.3 300.3,262.0 310.0,292.0 300.0,322.0 290.0,352.0" fill="none" stroke="#b9a9bb" stroke-width="0.8" stroke-linejoin="round" stroke-linecap="round" />
<polyline points="85.7,0.0 86.2,7.8 85.9,15.5 86.6,23.3 85.4,31.0 85.7,38.8 87.3,51.7 87.1,59.0 85.7,66.3 86.3,73.6 85.7,80.9 86.8,88.0 87.6,95.1 87.5,102.4 90.0,109.2 90.6,116.4 90.9,126.1 92.2,135.8 93.4,144.4 93.1,153.1 93.8,161.7 95.9,168.7 97.0,176.0 96.0,184.1 97.6,192.1 96.1,200.2 97.0,208.3 95.3,216.0 94.6,223.8 92.0,231.3 92.2,239.3 90.6,247.0 86.8,255.4 83.9,264.2 80.9,273.0 77.8,279.6 75.5,286.5 71.4,292.6 68.0,299.0 63.0,307.3 57.0,315.0" fill="none" stroke="#f3eee8" stroke-width="1.7" stroke-linejoin="round" stroke-linecap="round" />
<polyline points="85.7,0.0 86.2,7.8 85.9,15.5 86.6,23.3 85.4,31.0 85.7,38.8 87.3,51.7 87.1,59.0 85.7,66.3 86.3,73.6 85.7,80.9 86.8,88.0 87.6,95.1 87.5,102.4 90.0,109.2 90.6,116.4 90.9,126.1 92.2,135.8 93.4,144.4 93.1,153.1 93.8,161.7 95.9,168.7 97.0,176.0 96.0,184.1 97.6,192.1 96.1,200.2 97.0,208.3 95.3,216.0 94.6,223.8 92.0,231.3 92.2,239.3 90.6,247.0 86.8,255.4 83.9,264.2 80.9,273.0 77.8,279.6 75.5,286.5 71.4,292.6 68.0,299.0 63.0,307.3 57.0,315.0" fill="none" stroke="#e6738f" stroke-width="0.95" stroke-linejoin="round" stroke-linecap="round" />
<polyline points="86.0,34.0 94.0,33.2 102.1,33.8 110.0,32.0 117.5,31.0 125.1,31.6 132.6,30.7 140.2,28.2 147.3,24.3 155.0,22.0 162.7,20.0 170.4,17.5 178.6,17.6 186.1,14.2 194.0,13.0 201.2,13.6 208.4,14.2 215.5,16.2 222.7,17.1 230.0,17.0 237.2,17.8 244.3,18.3 251.6,17.8 258.7,19.4 266.1,16.6 272.6,12.0" fill="none" stroke="#f3eee8" stroke-width="1.7" stroke-linejoin="round" stroke-linecap="round" />
<polyline points="86.0,34.0 94.0,33.2 102.1,33.8 110.0,32.0 117.5,31.0 125.1,31.6 132.6,30.7 140.2,28.2 147.3,24.3 155.0,22.0 162.7,20.0 170.4,17.5 178.6,17.6 186.1,14.2 194.0,13.0 201.2,13.6 208.4,14.2 215.5,16.2 222.7,17.1 230.0,17.0 237.2,17.8 244.3,18.3 251.6,17.8 258.7,19.4 266.1,16.6 272.6,12.0" fill="none" stroke="#e6738f" stroke-width="0.95" stroke-linejoin="round" stroke-linecap="round" />
<polyline points="122.9,0.0 126.3,7.4 128.1,15.2 130.5,22.9 132.6,30.7" fill="none" stroke="#f3eee8" stroke-width="1.7" stroke-linejoin="round" stroke-linecap="round" />
<polyline points="122.9,0.0 126.3,7.4 128.1,15.2 130.5,22.9 132.6,30.7" fill="none" stroke="#e6738f" stroke-width="0.95" stroke-linejoin="round" stroke-linecap="round" />
<polyline points="132.6,30.7 135.8,39.1 140.0,47.0 147.2,54.5 155.0,61.4 157.1,68.6 158.5,76.0 155.1,82.5 152.5,89.4 152.4,97.0 148.8,103.5 142.3,113.2 139.8,120.6 138.0,128.3 135.8,135.8 134.0,144.5 131.6,153.1 129.4,161.7 126.1,169.1 122.0,176.0" fill="none" stroke="#f3eee8" stroke-width="1.7" stroke-linejoin="round" stroke-linecap="round" />
<polyline points="132.6,30.7 135.8,39.1 140.0,47.0 147.2,54.5 155.0,61.4 157.1,68.6 158.5,76.0 155.1,82.5 152.5,89.4 152.4,97.0 148.8,103.5 142.3,113.2 139.8,120.6 138.0,128.3 135.8,135.8 134.0,144.5 131.6,153.1 129.4,161.7 126.1,169.1 122.0,176.0" fill="none" stroke="#e6738f" stroke-width="0.95" stroke-linejoin="round" stroke-linecap="round" />
<polyline points="90.6,116.4 99.3,115.2 107.9,113.5 116.4,111.6 125.0,112.8 133.7,112.8 142.3,111.6 150.0,110.0 156.8,105.7 164.4,103.9 171.4,100.3 179.2,95.2 186.8,89.9 194.0,84.0 199.1,78.2 202.0,71.0 209.9,67.8 218.2,66.7 226.4,64.7 234.4,61.2 242.7,58.6 250.4,54.3 258.7,51.7" fill="none" stroke="#f3eee8" stroke-width="1.7" stroke-linejoin="round" stroke-linecap="round" />
<polyline points="90.6,116.4 99.3,115.2 107.9,113.5 116.4,111.6 125.0,112.8 133.7,112.8 142.3,111.6 150.0,110.0 156.8,105.7 164.4,103.9 171.4,100.3 179.2,95.2 186.8,89.9 194.0,84.0 199.1,78.2 202.0,71.0 209.9,67.8 218.2,66.7 226.4,64.7 234.4,61.2 242.7,58.6 250.4,54.3 258.7,51.7" fill="none" stroke="#e6738f" stroke-width="0.95" stroke-linejoin="round" stroke-linecap="round" />
<polyline points="85.7,80.9 92.0,88.3 100.0,93.8 110.0,100.0 118.3,102.2 126.3,105.5 134.5,107.8 142.3,111.6" fill="none" stroke="#f3eee8" stroke-width="1.7" stroke-linejoin="round" stroke-linecap="round" />
<polyline points="85.7,80.9 92.0,88.3 100.0,93.8 110.0,100.0 118.3,102.2 126.3,105.5 134.5,107.8 142.3,111.6" fill="none" stroke="#e6738f" stroke-width="0.95" stroke-linejoin="round" stroke-linecap="round" />
<polyline points="155.0,61.4 163.6,58.7 172.5,57.1 181.0,54.0 188.5,52.6 196.0,52.5 203.5,53.4 211.0,53.0 218.5,53.0 226.0,52.0 234.1,50.5 242.4,51.1 250.6,50.0 258.7,48.5" fill="none" stroke="#f3eee8" stroke-width="1.7" stroke-linejoin="round" stroke-linecap="round" />
<polyline points="155.0,61.4 163.6,58.7 172.5,57.1 181.0,54.0 188.5,52.6 196.0,52.5 203.5,53.4 211.0,53.0 218.5,53.0 226.0,52.0 234.1,50.5 242.4,51.1 250.6,50.0 258.7,48.5" fill="none" stroke="#e6738f" stroke-width="0.95" stroke-linejoin="round" stroke-linecap="round" />
<polyline points="97.0,164.0 105.0,164.5 113.0,162.5 121.0,163.2 129.0,163.0 137.3,162.2 145.4,164.9 153.7,165.7 162.0,165.0 170.1,165.3 177.9,162.3 186.0,162.4 194.0,162.0 202.0,160.8 210.0,159.6 217.8,157.3 226.0,157.0 234.4,155.7 242.2,152.4 250.5,150.9 258.7,148.8" fill="none" stroke="#f3eee8" stroke-width="1.7" stroke-linejoin="round" stroke-linecap="round" />
<polyline points="97.0,164.0 105.0,164.5 113.0,162.5 121.0,163.2 129.0,163.0 137.3,162.2 145.4,164.9 153.7,165.7 162.0,165.0 170.1,165.3 177.9,162.3 186.0,162.4 194.0,162.0 202.0,160.8 210.0,159.6 217.8,157.3 226.0,157.0 234.4,155.7 242.2,152.4 250.5,150.9 258.7,148.8" fill="none" stroke="#e6738f" stroke-width="0.95" stroke-linejoin="round" stroke-linecap="round" />
<polyline points="272.6,0.0 272.6,6.5 272.5,14.2 270.2,21.5 270.3,29.2 269.3,36.8 267.1,44.2 266.0,51.7 265.5,58.8 263.2,65.6 263.5,72.8 262.0,79.8 261.9,87.0 259.7,93.8 261.5,100.7 261.9,107.8 262.7,114.8 264.0,121.8 264.0,128.9 266.0,135.8 267.7,143.8 266.5,152.0 268.9,159.8 267.5,168.1 269.4,176.0" fill="none" stroke="#f3eee8" stroke-width="1.7" stroke-linejoin="round" stroke-linecap="round" />
<polyline points="272.6,0.0 272.6,6.5 272.5,14.2 270.2,21.5 270.3,29.2 269.3,36.8 267.1,44.2 266.0,51.7 265.5,58.8 263.2,65.6 263.5,72.8 262.0,79.8 261.9,87.0 259.7,93.8 261.5,100.7 261.9,107.8 262.7,114.8 264.0,121.8 264.0,128.9 266.0,135.8 267.7,143.8 266.5,152.0 268.9,159.8 267.5,168.1 269.4,176.0" fill="none" stroke="#e6738f" stroke-width="0.95" stroke-linejoin="round" stroke-linecap="round" />
<polyline points="272.6,12.0 280.7,17.4 288.8,22.6 296.1,22.6 303.3,23.3 310.6,24.2 317.9,24.7 325.2,23.4 332.5,22.6 339.8,23.2 347.0,24.3 354.7,25.8 362.5,26.2 370.2,26.8 378.1,26.0 385.8,27.5" fill="none" stroke="#f3eee8" stroke-width="1.7" stroke-linejoin="round" stroke-linecap="round" />
<polyline points="272.6,12.0 280.7,17.4 288.8,22.6 296.1,22.6 303.3,23.3 310.6,24.2 317.9,24.7 325.2,23.4 332.5,22.6 339.8,23.2 347.0,24.3 354.7,25.8 362.5,26.2 370.2,26.8 378.1,26.0 385.8,27.5" fill="none" stroke="#e6738f" stroke-width="0.95" stroke-linejoin="round" stroke-linecap="round" />
<polyline points="272.6,12.0 277.0,19.0 282.6,25.3 286.9,32.5 291.0,39.7 295.0,47.0 299.0,53.9 304.5,59.6 309.0,66.1 315.5,70.9 319.7,77.7 324.4,84.0" fill="none" stroke="#f3eee8" stroke-width="1.7" stroke-linejoin="round" stroke-linecap="round" />
<polyline points="272.6,12.0 277.0,19.0 282.6,25.3 286.9,32.5 291.0,39.7 295.0,47.0 299.0,53.9 304.5,59.6 309.0,66.1 315.5,70.9 319.7,77.7 324.4,84.0" fill="none" stroke="#e6738f" stroke-width="0.95" stroke-linejoin="round" stroke-linecap="round" />
<polyline points="324.4,84.0 326.6,76.7 330.3,70.0 333.2,63.0 337.3,56.6 343.9,53.9 349.2,48.9 355.5,45.7 361.8,42.4 368.1,39.3 374.3,35.8 379.8,31.3 385.8,27.5" fill="none" stroke="#f3eee8" stroke-width="1.7" stroke-linejoin="round" stroke-linecap="round" />
<polyline points="324.4,84.0 326.6,76.7 330.3,70.0 333.2,63.0 337.3,56.6 343.9,53.9 349.2,48.9 355.5,45.7 361.8,42.4 368.1,39.3 374.3,35.8 379.8,31.3 385.8,27.5" fill="none" stroke="#e6738f" stroke-width="0.95" stroke-linejoin="round" stroke-linecap="round" />
<polyline points="337.3,56.6 338.5,49.5 340.8,42.6 340.7,35.3 341.6,28.2 344.0,21.3 344.0,14.0 345.4,7.0 347.0,0.0" fill="none" stroke="#f3eee8" stroke-width="1.7" stroke-linejoin="round" stroke-linecap="round" />
<polyline points="337.3,56.6 338.5,49.5 340.8,42.6 340.7,35.3 341.6,28.2 344.0,21.3 344.0,14.0 345.4,7.0 347.0,0.0" fill="none" stroke="#e6738f" stroke-width="0.95" stroke-linejoin="round" stroke-linecap="round" />
<polyline points="324.4,84.0 319.7,90.6 314.7,97.0 309.1,102.0 303.6,107.3 297.8,112.1 292.0,117.0 286.4,122.6 281.5,128.8 274.4,132.9 269.4,139.0 263.6,147.7 256.0,155.0" fill="none" stroke="#f3eee8" stroke-width="1.7" stroke-linejoin="round" stroke-linecap="round" />
<polyline points="324.4,84.0 319.7,90.6 314.7,97.0 309.1,102.0 303.6,107.3 297.8,112.1 292.0,117.0 286.4,122.6 281.5,128.8 274.4,132.9 269.4,139.0 263.6,147.7 256.0,155.0" fill="none" stroke="#e6738f" stroke-width="0.95" stroke-linejoin="round" stroke-linecap="round" />
<polyline points="324.4,84.0 330.0,89.8 335.6,95.6 341.5,101.1 347.0,107.0 352.0,114.3 356.6,121.8 360.0,130.0 359.3,137.5 358.0,145.0 363.0,150.4 367.4,156.3 372.0,162.0 377.8,166.5 382.2,172.5 388.0,177.0" fill="none" stroke="#f3eee8" stroke-width="1.7" stroke-linejoin="round" stroke-linecap="round" />
<polyline points="324.4,84.0 330.0,89.8 335.6,95.6 341.5,101.1 347.0,107.0 352.0,114.3 356.6,121.8 360.0,130.0 359.3,137.5 358.0,145.0 363.0,150.4 367.4,156.3 372.0,162.0 377.8,166.5 382.2,172.5 388.0,177.0" fill="none" stroke="#e6738f" stroke-width="0.95" stroke-linejoin="round" stroke-linecap="round" />
<polyline points="324.4,84.0 325.4,91.1 327.6,98.1 327.5,105.4 327.0,112.7 330.4,119.5 329.8,126.9 331.0,134.0 328.5,142.8 328.7,152.1 327.0,161.0 324.0,172.0" fill="none" stroke="#f3eee8" stroke-width="1.7" stroke-linejoin="round" stroke-linecap="round" />
<polyline points="324.4,84.0 325.4,91.1 327.6,98.1 327.5,105.4 327.0,112.7 330.4,119.5 329.8,126.9 331.0,134.0 328.5,142.8 328.7,152.1 327.0,161.0 324.0,172.0" fill="none" stroke="#e6738f" stroke-width="0.95" stroke-linejoin="round" stroke-linecap="round" />
<polyline points="269.4,139.0 276.9,140.3 284.5,140.7 292.0,142.0 298.7,145.5 304.8,150.1 311.3,154.0 318.2,157.3 324.4,161.7 332.9,158.5 341.5,155.3 350.0,152.0 357.0,156.6 365.2,159.0 372.0,164.0 380.7,169.7 388.0,177.0" fill="none" stroke="#f3eee8" stroke-width="1.7" stroke-linejoin="round" stroke-linecap="round" />
<polyline points="269.4,139.0 276.9,140.3 284.5,140.7 292.0,142.0 298.7,145.5 304.8,150.1 311.3,154.0 318.2,157.3 324.4,161.7 332.9,158.5 341.5,155.3 350.0,152.0 357.0,156.6 365.2,159.0 372.0,164.0 380.7,169.7 388.0,177.0" fill="none" stroke="#e6738f" stroke-width="0.95" stroke-linejoin="round" stroke-linecap="round" />
<polyline points="385.8,27.5 385.6,35.2 384.8,42.9 382.6,50.4 382.6,58.2 384.4,65.4 384.9,73.0 387.6,80.0 389.0,87.3 390.4,94.5 390.2,101.9 392.5,109.0 392.3,116.4 391.0,123.7 391.4,130.9 392.7,138.2 392.3,145.5 391.7,153.1 389.3,160.4 389.0,168.0" fill="none" stroke="#f3eee8" stroke-width="1.7" stroke-linejoin="round" stroke-linecap="round" />
<polyline points="385.8,27.5 385.6,35.2 384.8,42.9 382.6,50.4 382.6,58.2 384.4,65.4 384.9,73.0 387.6,80.0 389.0,87.3 390.4,94.5 390.2,101.9 392.5,109.0 392.3,116.4 391.0,123.7 391.4,130.9 392.7,138.2 392.3,145.5 391.7,153.1 389.3,160.4 389.0,168.0" fill="none" stroke="#e6738f" stroke-width="0.95" stroke-linejoin="round" stroke-linecap="round" />
<polyline points="385.8,27.5 393.8,25.9 401.4,23.3 408.8,19.5 417.0,19.0 424.6,16.0 431.6,14.2 438.8,15.1 445.9,14.3 453.0,14.7 460.0,13.0 467.6,10.3 475.0,7.0 481.3,3.5 488.7,3.4 495.0,0.0" fill="none" stroke="#f3eee8" stroke-width="1.7" stroke-linejoin="round" stroke-linecap="round" />
<polyline points="385.8,27.5 393.8,25.9 401.4,23.3 408.8,19.5 417.0,19.0 424.6,16.0 431.6,14.2 438.8,15.1 445.9,14.3 453.0,14.7 460.0,13.0 467.6,10.3 475.0,7.0 481.3,3.5 488.7,3.4 495.0,0.0" fill="none" stroke="#e6738f" stroke-width="0.95" stroke-linejoin="round" stroke-linecap="round" />
<polyline points="389.0,84.0 396.0,84.7 403.0,84.2 410.0,82.7 417.0,84.6 424.0,83.8 431.0,84.0 438.4,82.9 445.8,82.0 453.0,80.3 460.0,77.6 466.0,73.4 473.3,71.8 479.4,67.8 486.3,65.3 492.4,61.2 498.9,58.1 505.5,55.0 512.3,57.3 519.2,58.9 525.8,61.8 532.3,64.7 538.4,70.2 545.9,73.8 552.3,78.9 558.2,84.7" fill="none" stroke="#f3eee8" stroke-width="1.7" stroke-linejoin="round" stroke-linecap="round" />
<polyline points="389.0,84.0 396.0,84.7 403.0,84.2 410.0,82.7 417.0,84.6 424.0,83.8 431.0,84.0 438.4,82.9 445.8,82.0 453.0,80.3 460.0,77.6 466.0,73.4 473.3,71.8 479.4,67.8 486.3,65.3 492.4,61.2 498.9,58.1 505.5,55.0 512.3,57.3 519.2,58.9 525.8,61.8 532.3,64.7 538.4,70.2 545.9,73.8 552.3,78.9 558.2,84.7" fill="none" stroke="#e6738f" stroke-width="0.95" stroke-linejoin="round" stroke-linecap="round" />
<polyline points="460.0,77.6 459.7,85.2 460.7,92.8 461.6,100.3 463.3,107.8 463.8,115.4 463.4,123.0 459.1,129.1 453.1,133.9 449.2,140.3 443.8,145.5 440.0,152.0 432.9,156.9 425.1,160.7 417.5,164.7 410.0,169.0" fill="none" stroke="#f3eee8" stroke-width="1.7" stroke-linejoin="round" stroke-linecap="round" />
<polyline points="460.0,77.6 459.7,85.2 460.7,92.8 461.6,100.3 463.3,107.8 463.8,115.4 463.4,123.0 459.1,129.1 453.1,133.9 449.2,140.3 443.8,145.5 440.0,152.0 432.9,156.9 425.1,160.7 417.5,164.7 410.0,169.0" fill="none" stroke="#e6738f" stroke-width="0.95" stroke-linejoin="round" stroke-linecap="round" />
<polyline points="410.0,169.0 417.0,167.0 423.0,162.4 430.4,161.4 436.6,157.6 442.9,153.7 450.0,152.0 455.9,147.9 461.8,143.7 468.3,140.4 474.6,136.9 480.0,132.0 488.5,129.0 497.2,126.5 505.5,123.0 512.0,118.7 519.3,115.5 525.1,109.9 532.3,106.7 539.2,101.7 544.7,95.0 551.9,90.4 558.2,84.7" fill="none" stroke="#f3eee8" stroke-width="1.7" stroke-linejoin="round" stroke-linecap="round" />
<polyline points="410.0,169.0 417.0,167.0 423.0,162.4 430.4,161.4 436.6,157.6 442.9,153.7 450.0,152.0 455.9,147.9 461.8,143.7 468.3,140.4 474.6,136.9 480.0,132.0 488.5,129.0 497.2,126.5 505.5,123.0 512.0,118.7 519.3,115.5 525.1,109.9 532.3,106.7 539.2,101.7 544.7,95.0 551.9,90.4 558.2,84.7" fill="none" stroke="#e6738f" stroke-width="0.95" stroke-linejoin="round" stroke-linecap="round" />
<polyline points="259.7,93.8 252.2,94.1 244.8,93.3 237.4,93.3 230.0,92.0 224.7,87.3 220.2,81.8 215.0,77.0" fill="none" stroke="#f3eee8" stroke-width="1.7" stroke-linejoin="round" stroke-linecap="round" />
<polyline points="259.7,93.8 252.2,94.1 244.8,93.3 237.4,93.3 230.0,92.0 224.7,87.3 220.2,81.8 215.0,77.0" fill="none" stroke="#e6738f" stroke-width="0.95" stroke-linejoin="round" stroke-linecap="round" />
<polyline points="558.2,84.7 562.5,77.0 566.5,69.1 571.0,61.5 576.6,55.7 582.5,50.2 587.3,43.7 587.5,35.6 588.7,27.5 589.0,19.4 588.4,9.7 588.0,0.0" fill="none" stroke="#f3eee8" stroke-width="1.7" stroke-linejoin="round" stroke-linecap="round" />
<polyline points="558.2,84.7 562.5,77.0 566.5,69.1 571.0,61.5 576.6,55.7 582.5,50.2 587.3,43.7 587.5,35.6 588.7,27.5 589.0,19.4 588.4,9.7 588.0,0.0" fill="none" stroke="#e6738f" stroke-width="0.95" stroke-linejoin="round" stroke-linecap="round" />
<polyline points="587.3,43.7 593.3,47.7 600.4,49.1 606.5,52.9 613.5,54.7 619.7,58.2 625.8,63.4 630.6,70.0 636.5,75.4 642.3,80.9" fill="none" stroke="#f3eee8" stroke-width="1.7" stroke-linejoin="round" stroke-linecap="round" />
<polyline points="587.3,43.7 593.3,47.7 600.4,49.1 606.5,52.9 613.5,54.7 619.7,58.2 625.8,63.4 630.6,70.0 636.5,75.4 642.3,80.9" fill="none" stroke="#e6738f" stroke-width="0.95" stroke-linejoin="round" stroke-linecap="round" />
<polyline points="558.2,84.7 565.7,86.4 573.1,88.2 579.8,92.3 587.3,93.8 595.4,93.7 603.4,94.9 611.6,94.4 619.6,95.2 627.7,95.3 635.8,95.4 643.0,92.4 648.8,87.3 656.4,87.6 663.9,85.6 671.4,84.9 678.9,83.4 686.5,84.0 694.0,82.5 702.3,82.7 710.3,84.4 718.2,87.0 726.4,87.3 733.6,91.8 739.0,98.5 745.8,103.5" fill="none" stroke="#f3eee8" stroke-width="1.7" stroke-linejoin="round" stroke-linecap="round" />
<polyline points="558.2,84.7 565.7,86.4 573.1,88.2 579.8,92.3 587.3,93.8 595.4,93.7 603.4,94.9 611.6,94.4 619.6,95.2 627.7,95.3 635.8,95.4 643.0,92.4 648.8,87.3 656.4,87.6 663.9,85.6 671.4,84.9 678.9,83.4 686.5,84.0 694.0,82.5 702.3,82.7 710.3,84.4 718.2,87.0 726.4,87.3 733.6,91.8 739.0,98.5 745.8,103.5" fill="none" stroke="#e6738f" stroke-width="0.95" stroke-linejoin="round" stroke-linecap="round" />
<polyline points="648.8,90.0 656.8,93.5 664.8,96.9 673.1,99.7 681.0,103.5 688.5,105.1 695.1,109.5 702.5,111.4 710.0,113.2 717.4,112.0 724.0,108.3 731.7,108.1 738.4,104.7 745.8,103.5" fill="none" stroke="#f3eee8" stroke-width="1.7" stroke-linejoin="round" stroke-linecap="round" />
<polyline points="648.8,90.0 656.8,93.5 664.8,96.9 673.1,99.7 681.0,103.5 688.5,105.1 695.1,109.5 702.5,111.4 710.0,113.2 717.4,112.0 724.0,108.3 731.7,108.1 738.4,104.7 745.8,103.5" fill="none" stroke="#e6738f" stroke-width="0.95" stroke-linejoin="round" stroke-linecap="round" />
<polyline points="745.8,103.5 738.9,106.9 731.4,108.8 724.2,111.3 717.5,115.2 710.0,117.0 701.2,119.3 692.8,122.8 684.3,126.0 676.2,129.4 668.7,133.7 661.7,139.0 657.2,146.1 653.9,153.8 648.5,160.3 645.5,168.2 639.0,176.0 633.2,183.2 628.8,191.4 623.0,198.6 617.9,204.5 613.8,211.2 610.0,218.0 606.2,225.9 601.9,233.5 597.0,240.7 595.0,250.7 590.6,260.0" fill="none" stroke="#f3eee8" stroke-width="1.7" stroke-linejoin="round" stroke-linecap="round" />
<polyline points="745.8,103.5 738.9,106.9 731.4,108.8 724.2,111.3 717.5,115.2 710.0,117.0 701.2,119.3 692.8,122.8 684.3,126.0 676.2,129.4 668.7,133.7 661.7,139.0 657.2,146.1 653.9,153.8 648.5,160.3 645.5,168.2 639.0,176.0 633.2,183.2 628.8,191.4 623.0,198.6 617.9,204.5 613.8,211.2 610.0,218.0 606.2,225.9 601.9,233.5 597.0,240.7 595.0,250.7 590.6,260.0" fill="none" stroke="#e6738f" stroke-width="0.95" stroke-linejoin="round" stroke-linecap="round" />
<polyline points="745.8,103.5 746.5,95.7 746.4,87.9 747.2,80.2 747.7,72.4 749.0,64.7 747.0,57.3 746.8,49.6 745.8,42.0 753.0,40.6 760.3,39.8 767.6,39.0 775.0,38.8" fill="none" stroke="#f3eee8" stroke-width="1.7" stroke-linejoin="round" stroke-linecap="round" />
<polyline points="745.8,103.5 746.5,95.7 746.4,87.9 747.2,80.2 747.7,72.4 749.0,64.7 747.0,57.3 746.8,49.6 745.8,42.0 753.0,40.6 760.3,39.8 767.6,39.0 775.0,38.8" fill="none" stroke="#e6738f" stroke-width="0.95" stroke-linejoin="round" stroke-linecap="round" />
<polyline points="745.8,103.5 750.7,96.8 756.3,90.7 759.6,82.9 765.9,77.2 770.0,70.0 775.1,64.5 778.9,58.2 783.0,52.0" fill="none" stroke="#f3eee8" stroke-width="1.7" stroke-linejoin="round" stroke-linecap="round" />
<polyline points="745.8,103.5 750.7,96.8 756.3,90.7 759.6,82.9 765.9,77.2 770.0,70.0 775.1,64.5 778.9,58.2 783.0,52.0" fill="none" stroke="#e6738f" stroke-width="0.95" stroke-linejoin="round" stroke-linecap="round" />
<polyline points="694.0,82.5 695.3,74.4 697.0,66.4 697.7,58.2 699.2,50.2 700.0,42.0 699.3,34.3 697.2,26.8 694.1,19.6 693.0,12.0" fill="none" stroke="#f3eee8" stroke-width="1.7" stroke-linejoin="round" stroke-linecap="round" />
<polyline points="694.0,82.5 695.3,74.4 697.0,66.4 697.7,58.2 699.2,50.2 700.0,42.0 699.3,34.3 697.2,26.8 694.1,19.6 693.0,12.0" fill="none" stroke="#e6738f" stroke-width="0.95" stroke-linejoin="round" stroke-linecap="round" />
<polyline points="558.2,84.7 555.4,91.7 549.7,96.9 547.2,104.0 542.5,109.9 540.0,117.0 535.6,123.0 534.8,130.6 534.0,138.2 532.2,145.6 530.7,153.1 530.9,160.9 529.8,168.4 529.0,176.0 537.4,180.5 545.3,185.7 552.3,191.6 557.4,199.4 564.7,205.0 569.6,211.8 571.8,220.2 576.5,227.1 580.9,234.2 585.2,242.4 586.4,251.8 590.6,260.0" fill="none" stroke="#f3eee8" stroke-width="1.7" stroke-linejoin="round" stroke-linecap="round" />
<polyline points="558.2,84.7 555.4,91.7 549.7,96.9 547.2,104.0 542.5,109.9 540.0,117.0 535.6,123.0 534.8,130.6 534.0,138.2 532.2,145.6 530.7,153.1 530.9,160.9 529.8,168.4 529.0,176.0 537.4,180.5 545.3,185.7 552.3,191.6 557.4,199.4 564.7,205.0 569.6,211.8 571.8,220.2 576.5,227.1 580.9,234.2 585.2,242.4 586.4,251.8 590.6,260.0" fill="none" stroke="#e6738f" stroke-width="0.95" stroke-linejoin="round" stroke-linecap="round" />
<polyline points="558.2,84.7 551.1,80.5 545.4,74.6 538.2,70.5 532.3,64.7 527.5,58.9 520.7,55.4 516.0,49.4 509.7,45.3 501.7,41.7 495.1,35.8 486.8,32.5 480.0,27.0 472.6,23.3 466.8,17.5 460.0,13.0" fill="none" stroke="#f3eee8" stroke-width="1.7" stroke-linejoin="round" stroke-linecap="round" />
<polyline points="558.2,84.7 551.1,80.5 545.4,74.6 538.2,70.5 532.3,64.7 527.5,58.9 520.7,55.4 516.0,49.4 509.7,45.3 501.7,41.7 495.1,35.8 486.8,32.5 480.0,27.0 472.6,23.3 466.8,17.5 460.0,13.0" fill="none" stroke="#e6738f" stroke-width="0.95" stroke-linejoin="round" stroke-linecap="round" />
<polyline points="642.3,80.9 645.1,73.4 645.9,65.4 647.8,57.7 649.2,49.9 650.0,42.0 652.1,35.0 652.9,27.7 656.1,21.0 657.2,13.8 660.0,7.0" fill="none" stroke="#f3eee8" stroke-width="1.7" stroke-linejoin="round" stroke-linecap="round" />
<polyline points="642.3,80.9 645.1,73.4 645.9,65.4 647.8,57.7 649.2,49.9 650.0,42.0 652.1,35.0 652.9,27.7 656.1,21.0 657.2,13.8 660.0,7.0" fill="none" stroke="#e6738f" stroke-width="0.95" stroke-linejoin="round" stroke-linecap="round" />
<polyline points="388.0,182.0 385.8,195.4 381.5,201.8 377.6,208.5 373.0,214.8 369.7,221.3 366.4,227.7" fill="none" stroke="#f3eee8" stroke-width="1.7" stroke-linejoin="round" stroke-linecap="round" />
<polyline points="388.0,182.0 385.8,195.4 381.5,201.8 377.6,208.5 373.0,214.8 369.7,221.3 366.4,227.7" fill="none" stroke="#e6738f" stroke-width="0.95" stroke-linejoin="round" stroke-linecap="round" />
<polyline points="388.0,182.0 384.4,189.1 379.4,195.4 372.7,198.2 366.5,202.1 360.0,205.2 354.0,209.3 347.0,211.6 338.9,213.2 330.8,214.7 322.5,215.2 314.7,218.0 307.7,219.2 300.8,221.6 293.7,222.5 286.7,223.8 279.5,224.2 272.6,226.0 266.8,232.7 263.0,240.7 258.6,250.0 256.5,260.0 254.5,268.0 253.7,276.1 253.1,284.2 253.2,292.4 244.0,293.5 235.6,298.0 226.4,299.0 218.6,299.6 210.9,300.0 203.1,300.3 195.3,301.1 187.6,302.0 180.5,302.4 173.3,302.2 166.3,305.1 159.1,304.7 152.0,305.4 143.3,309.2 135.8,315.0 128.2,317.5 120.4,318.6 112.4,318.0 104.6,319.0 97.0,321.5 89.6,321.9 82.4,321.1 75.3,318.2 68.0,318.3" fill="none" stroke="#f3eee8" stroke-width="1.7" stroke-linejoin="round" stroke-linecap="round" />
<polyline points="388.0,182.0 384.4,189.1 379.4,195.4 372.7,198.2 366.5,202.1 360.0,205.2 354.0,209.3 347.0,211.6 338.9,213.2 330.8,214.7 322.5,215.2 314.7,218.0 307.7,219.2 300.8,221.6 293.7,222.5 286.7,223.8 279.5,224.2 272.6,226.0 266.8,232.7 263.0,240.7 258.6,250.0 256.5,260.0 254.5,268.0 253.7,276.1 253.1,284.2 253.2,292.4 244.0,293.5 235.6,298.0 226.4,299.0 218.6,299.6 210.9,300.0 203.1,300.3 195.3,301.1 187.6,302.0 180.5,302.4 173.3,302.2 166.3,305.1 159.1,304.7 152.0,305.4 143.3,309.2 135.8,315.0 128.2,317.5 120.4,318.6 112.4,318.0 104.6,319.0 97.0,321.5 89.6,321.9 82.4,321.1 75.3,318.2 68.0,318.3" fill="none" stroke="#e6738f" stroke-width="0.95" stroke-linejoin="round" stroke-linecap="round" />
<polyline points="207.0,214.8 215.0,216.1 223.1,216.5 231.2,217.4 239.3,218.0 247.5,220.7 255.8,222.8 264.6,222.7 272.6,226.0" fill="none" stroke="#f3eee8" stroke-width="1.7" stroke-linejoin="round" stroke-linecap="round" />
<polyline points="207.0,214.8 215.0,216.1 223.1,216.5 231.2,217.4 239.3,218.0 247.5,220.7 255.8,222.8 264.6,222.7 272.6,226.0" fill="none" stroke="#e6738f" stroke-width="0.95" stroke-linejoin="round" stroke-linecap="round" />
<polyline points="224.8,256.9 226.2,264.6 224.7,272.5 224.5,280.2 225.2,288.0 226.4,295.7 226.8,302.7 227.2,309.8 227.4,316.8 228.5,323.8 226.7,330.9 228.2,337.9 227.6,345.0 228.0,352.0" fill="none" stroke="#f3eee8" stroke-width="1.7" stroke-linejoin="round" stroke-linecap="round" />
<polyline points="224.8,256.9 226.2,264.6 224.7,272.5 224.5,280.2 225.2,288.0 226.4,295.7 226.8,302.7 227.2,309.8 227.4,316.8 228.5,323.8 226.7,330.9 228.2,337.9 227.6,345.0 228.0,352.0" fill="none" stroke="#e6738f" stroke-width="0.95" stroke-linejoin="round" stroke-linecap="round" />
<polyline points="226.0,232.0 225.5,240.3 225.6,248.6 224.8,256.9" fill="none" stroke="#f3eee8" stroke-width="1.7" stroke-linejoin="round" stroke-linecap="round" />
<polyline points="226.0,232.0 225.5,240.3 225.6,248.6 224.8,256.9" fill="none" stroke="#e6738f" stroke-width="0.95" stroke-linejoin="round" stroke-linecap="round" />
<polyline points="390.0,184.0 390.1,192.5 391.3,201.0 392.4,209.5 392.3,218.0 392.9,225.2 396.4,231.8 398.0,238.8 399.4,245.9 400.4,253.0 402.0,260.0 402.0,268.2 403.9,276.2 404.9,284.2 405.0,292.4 403.0,299.8 402.4,307.4 400.2,314.7 399.3,322.3 396.1,329.4 396.3,337.3 394.6,344.7 392.3,352.0" fill="none" stroke="#f3eee8" stroke-width="1.7" stroke-linejoin="round" stroke-linecap="round" />
<polyline points="390.0,184.0 390.1,192.5 391.3,201.0 392.4,209.5 392.3,218.0 392.9,225.2 396.4,231.8 398.0,238.8 399.4,245.9 400.4,253.0 402.0,260.0 402.0,268.2 403.9,276.2 404.9,284.2 405.0,292.4 403.0,299.8 402.4,307.4 400.2,314.7 399.3,322.3 396.1,329.4 396.3,337.3 394.6,344.7 392.3,352.0" fill="none" stroke="#e6738f" stroke-width="0.95" stroke-linejoin="round" stroke-linecap="round" />
<polyline points="392.0,190.0 398.8,194.2 405.3,199.0 411.2,204.5 417.7,209.0 424.1,213.9 431.0,218.0 437.5,221.3 444.5,223.5 450.2,228.4 457.0,231.0 462.4,236.2 467.3,241.8 471.7,247.8 476.4,253.6 484.5,254.9 492.5,253.3 500.6,253.2 508.7,253.6 515.9,255.3 523.1,256.2 530.5,255.3 537.8,255.4 545.0,257.0 552.6,258.3 560.2,258.7 567.8,258.1 575.4,259.8 583.0,259.2 590.6,260.0" fill="none" stroke="#f3eee8" stroke-width="1.7" stroke-linejoin="round" stroke-linecap="round" />
<polyline points="392.0,190.0 398.8,194.2 405.3,199.0 411.2,204.5 417.7,209.0 424.1,213.9 431.0,218.0 437.5,221.3 444.5,223.5 450.2,228.4 457.0,231.0 462.4,236.2 467.3,241.8 471.7,247.8 476.4,253.6 484.5,254.9 492.5,253.3 500.6,253.2 508.7,253.6 515.9,255.3 523.1,256.2 530.5,255.3 537.8,255.4 545.0,257.0 552.6,258.3 560.2,258.7 567.8,258.1 575.4,259.8 583.0,259.2 590.6,260.0" fill="none" stroke="#e6738f" stroke-width="0.95" stroke-linejoin="round" stroke-linecap="round" />
<polyline points="402.0,218.0 406.6,224.2 410.1,231.1 413.9,237.8 418.6,243.9 422.0,250.8 427.9,256.1 431.0,263.3 437.5,266.1 444.1,268.6 450.9,270.6 456.5,275.4 463.8,276.3 470.2,279.2 476.4,282.7 483.4,287.9 490.9,292.4 499.0,295.7" fill="none" stroke="#f3eee8" stroke-width="1.7" stroke-linejoin="round" stroke-linecap="round" />
<polyline points="402.0,218.0 406.6,224.2 410.1,231.1 413.9,237.8 418.6,243.9 422.0,250.8 427.9,256.1 431.0,263.3 437.5,266.1 444.1,268.6 450.9,270.6 456.5,275.4 463.8,276.3 470.2,279.2 476.4,282.7 483.4,287.9 490.9,292.4 499.0,295.7" fill="none" stroke="#e6738f" stroke-width="0.95" stroke-linejoin="round" stroke-linecap="round" />
<polyline points="350.0,304.0 358.0,302.3 365.2,298.1 373.0,295.7 381.2,295.4 388.8,291.9 397.1,292.0 405.0,290.0 414.0,288.4 422.1,283.9 431.0,282.0 437.7,279.0 445.1,278.2 452.3,276.5 459.2,274.0 466.3,272.4 473.0,269.0 480.0,267.0 486.5,262.3 492.8,257.2 500.0,253.6" fill="none" stroke="#f3eee8" stroke-width="1.7" stroke-linejoin="round" stroke-linecap="round" />
<polyline points="350.0,304.0 358.0,302.3 365.2,298.1 373.0,295.7 381.2,295.4 388.8,291.9 397.1,292.0 405.0,290.0 414.0,288.4 422.1,283.9 431.0,282.0 437.7,279.0 445.1,278.2 452.3,276.5 459.2,274.0 466.3,272.4 473.0,269.0 480.0,267.0 486.5,262.3 492.8,257.2 500.0,253.6" fill="none" stroke="#e6738f" stroke-width="0.95" stroke-linejoin="round" stroke-linecap="round" />
<polyline points="366.4,227.7 374.6,232.0 381.5,238.2 390.0,242.0 395.8,246.2 400.6,251.4 405.3,256.7 410.0,262.0 416.1,266.2 420.8,271.6 426.3,276.4 431.0,282.0" fill="none" stroke="#f3eee8" stroke-width="1.7" stroke-linejoin="round" stroke-linecap="round" />
<polyline points="366.4,227.7 374.6,232.0 381.5,238.2 390.0,242.0 395.8,246.2 400.6,251.4 405.3,256.7 410.0,262.0 416.1,266.2 420.8,271.6 426.3,276.4 431.0,282.0" fill="none" stroke="#e6738f" stroke-width="0.95" stroke-linejoin="round" stroke-linecap="round" />
<polyline points="431.0,218.0 438.2,215.7 445.8,215.3 453.3,213.9 460.7,212.6 468.2,211.7 475.5,209.8 482.9,208.3 490.6,207.8 497.5,203.9 505.0,202.6 512.3,200.6 520.0,200.0 526.1,196.0 533.0,193.4 539.5,190.2 545.3,185.7" fill="none" stroke="#f3eee8" stroke-width="1.7" stroke-linejoin="round" stroke-linecap="round" />
<polyline points="431.0,218.0 438.2,215.7 445.8,215.3 453.3,213.9 460.7,212.6 468.2,211.7 475.5,209.8 482.9,208.3 490.6,207.8 497.5,203.9 505.0,202.6 512.3,200.6 520.0,200.0 526.1,196.0 533.0,193.4 539.5,190.2 545.3,185.7" fill="none" stroke="#e6738f" stroke-width="0.95" stroke-linejoin="round" stroke-linecap="round" />
<polyline points="499.0,295.7 506.0,297.3 513.2,298.1 520.1,300.1 527.0,302.3 534.1,303.2 540.8,306.1 547.7,308.2 555.0,308.6 559.9,314.2 564.5,320.1 568.9,326.1 574.4,331.2 575.7,338.1 577.6,344.9 578.0,352.0" fill="none" stroke="#f3eee8" stroke-width="1.7" stroke-linejoin="round" stroke-linecap="round" />
<polyline points="499.0,295.7 506.0,297.3 513.2,298.1 520.1,300.1 527.0,302.3 534.1,303.2 540.8,306.1 547.7,308.2 555.0,308.6 559.9,314.2 564.5,320.1 568.9,326.1 574.4,331.2 575.7,338.1 577.6,344.9 578.0,352.0" fill="none" stroke="#e6738f" stroke-width="0.95" stroke-linejoin="round" stroke-linecap="round" />
<polyline points="499.0,295.7 506.2,294.5 513.1,292.3 519.1,287.7 526.5,287.2 533.1,284.0 540.0,282.0 546.8,277.8 554.1,274.9 561.3,271.8 569.2,270.0 575.8,265.6 582.9,262.0 590.6,260.0" fill="none" stroke="#f3eee8" stroke-width="1.7" stroke-linejoin="round" stroke-linecap="round" />
<polyline points="499.0,295.7 506.2,294.5 513.1,292.3 519.1,287.7 526.5,287.2 533.1,284.0 540.0,282.0 546.8,277.8 554.1,274.9 561.3,271.8 569.2,270.0 575.8,265.6 582.9,262.0 590.6,260.0" fill="none" stroke="#e6738f" stroke-width="0.95" stroke-linejoin="round" stroke-linecap="round" />
<polyline points="590.6,260.0 589.8,267.5 586.8,274.5 586.0,282.0 584.0,290.3 581.6,298.6 580.0,307.0 578.2,315.1 577.1,323.3 574.4,331.2" fill="none" stroke="#f3eee8" stroke-width="1.7" stroke-linejoin="round" stroke-linecap="round" />
<polyline points="590.6,260.0 589.8,267.5 586.8,274.5 586.0,282.0 584.0,290.3 581.6,298.6 580.0,307.0 578.2,315.1 577.1,323.3 574.4,331.2" fill="none" stroke="#e6738f" stroke-width="0.95" stroke-linejoin="round" stroke-linecap="round" />
<polyline points="499.0,295.7 496.9,302.5 493.0,308.4 490.4,315.0 486.7,321.0 482.6,326.8 480.0,333.4 476.5,339.5 472.9,345.6 470.0,352.0" fill="none" stroke="#f3eee8" stroke-width="1.7" stroke-linejoin="round" stroke-linecap="round" />
<polyline points="499.0,295.7 496.9,302.5 493.0,308.4 490.4,315.0 486.7,321.0 482.6,326.8 480.0,333.4 476.5,339.5 472.9,345.6 470.0,352.0" fill="none" stroke="#e6738f" stroke-width="0.95" stroke-linejoin="round" stroke-linecap="round" />
<polyline points="373.0,295.7 371.8,302.8 370.1,309.9 367.2,316.6 366.3,323.8 365.1,330.9 363.1,337.9 361.7,345.0 360.0,352.0" fill="none" stroke="#f3eee8" stroke-width="1.7" stroke-linejoin="round" stroke-linecap="round" />
<polyline points="373.0,295.7 371.8,302.8 370.1,309.9 367.2,316.6 366.3,323.8 365.1,330.9 363.1,337.9 361.7,345.0 360.0,352.0" fill="none" stroke="#e6738f" stroke-width="0.95" stroke-linejoin="round" stroke-linecap="round" />
<polyline points="97.0,208.3 103.2,201.6 110.7,196.2 116.4,189.0 124.9,186.2 133.9,185.8 142.3,182.5 151.1,181.2 159.7,179.1 168.0,176.0" fill="none" stroke="#f3eee8" stroke-width="1.7" stroke-linejoin="round" stroke-linecap="round" />
<polyline points="97.0,208.3 103.2,201.6 110.7,196.2 116.4,189.0 124.9,186.2 133.9,185.8 142.3,182.5 151.1,181.2 159.7,179.1 168.0,176.0" fill="none" stroke="#e6738f" stroke-width="0.95" stroke-linejoin="round" stroke-linecap="round" />
<polyline points="155.2,192.2 156.7,199.2 156.5,206.4 155.9,213.6 158.4,220.5 158.5,227.7 154.3,233.9 148.3,238.7 144.4,245.2 139.0,250.4 130.9,251.4 123.0,253.7 114.6,252.8 106.7,255.2 98.7,256.2 90.6,256.0" fill="none" stroke="#f3eee8" stroke-width="1.7" stroke-linejoin="round" stroke-linecap="round" />
<polyline points="155.2,192.2 156.7,199.2 156.5,206.4 155.9,213.6 158.4,220.5 158.5,227.7 154.3,233.9 148.3,238.7 144.4,245.2 139.0,250.4 130.9,251.4 123.0,253.7 114.6,252.8 106.7,255.2 98.7,256.2 90.6,256.0" fill="none" stroke="#e6738f" stroke-width="0.95" stroke-linejoin="round" stroke-linecap="round" />
<polyline points="64.7,221.3 71.8,215.8 80.0,212.0 88.6,210.6 97.0,208.3" fill="none" stroke="#f3eee8" stroke-width="1.7" stroke-linejoin="round" stroke-linecap="round" />
<polyline points="64.7,221.3 71.8,215.8 80.0,212.0 88.6,210.6 97.0,208.3" fill="none" stroke="#e6738f" stroke-width="0.95" stroke-linejoin="round" stroke-linecap="round" />
<polyline points="57.0,315.0 63.3,320.4 68.9,326.4 75.0,332.0 80.0,338.7 84.1,346.0 90.0,352.0" fill="none" stroke="#f3eee8" stroke-width="1.7" stroke-linejoin="round" stroke-linecap="round" />
<polyline points="57.0,315.0 63.3,320.4 68.9,326.4 75.0,332.0 80.0,338.7 84.1,346.0 90.0,352.0" fill="none" stroke="#e6738f" stroke-width="0.95" stroke-linejoin="round" stroke-linecap="round" />
<polyline points="135.8,315.0 133.8,322.3 132.2,329.7 130.0,337.0 136.1,343.8 140.0,352.0" fill="none" stroke="#f3eee8" stroke-width="1.7" stroke-linejoin="round" stroke-linecap="round" />
<polyline points="135.8,315.0 133.8,322.3 132.2,329.7 130.0,337.0 136.1,343.8 140.0,352.0" fill="none" stroke="#e6738f" stroke-width="0.95" stroke-linejoin="round" stroke-linecap="round" />
<polyline points="97.0,321.5 103.5,329.2 110.0,337.0 113.1,344.3 115.0,352.0" fill="none" stroke="#f3eee8" stroke-width="1.7" stroke-linejoin="round" stroke-linecap="round" />
<polyline points="97.0,321.5 103.5,329.2 110.0,337.0 113.1,344.3 115.0,352.0" fill="none" stroke="#e6738f" stroke-width="0.95" stroke-linejoin="round" stroke-linecap="round" />
<polyline points="207.0,214.8 200.4,217.7 194.0,221.0 192.7,228.7 192.1,236.5 192.1,244.4 190.0,252.0" fill="none" stroke="#f3eee8" stroke-width="1.7" stroke-linejoin="round" stroke-linecap="round" />
<polyline points="207.0,214.8 200.4,217.7 194.0,221.0 192.7,228.7 192.1,236.5 192.1,244.4 190.0,252.0" fill="none" stroke="#e6738f" stroke-width="0.95" stroke-linejoin="round" stroke-linecap="round" />
<polyline points="745.8,103.5 750.5,96.3 755.2,89.1 760.0,82.0 767.8,79.7 775.7,77.8 783.0,74.0" fill="none" stroke="#f3eee8" stroke-width="1.7" stroke-linejoin="round" stroke-linecap="round" />
<polyline points="745.8,103.5 750.5,96.3 755.2,89.1 760.0,82.0 767.8,79.7 775.7,77.8 783.0,74.0" fill="none" stroke="#e6738f" stroke-width="0.95" stroke-linejoin="round" stroke-linecap="round" />
<polyline points="745.8,103.5 739.1,101.1 732.8,97.9 726.0,95.9 720.0,92.0 715.6,86.4 709.5,82.5 705.6,76.4 700.0,72.0 697.4,65.0 692.8,59.0 690.0,52.0" fill="none" stroke="#f3eee8" stroke-width="1.7" stroke-linejoin="round" stroke-linecap="round" />
<polyline points="745.8,103.5 739.1,101.1 732.8,97.9 726.0,95.9 720.0,92.0 715.6,86.4 709.5,82.5 705.6,76.4 700.0,72.0 697.4,65.0 692.8,59.0 690.0,52.0" fill="none" stroke="#e6738f" stroke-width="0.95" stroke-linejoin="round" stroke-linecap="round" />
<polyline points="745.8,103.5 744.1,96.2 740.5,89.7 737.7,82.8 735.4,75.8 733.7,68.5 730.0,62.0 726.6,54.0 723.3,46.0 720.0,38.0" fill="none" stroke="#f3eee8" stroke-width="1.7" stroke-linejoin="round" stroke-linecap="round" />
<polyline points="745.8,103.5 744.1,96.2 740.5,89.7 737.7,82.8 735.4,75.8 733.7,68.5 730.0,62.0 726.6,54.0 723.3,46.0 720.0,38.0" fill="none" stroke="#e6738f" stroke-width="0.95" stroke-linejoin="round" stroke-linecap="round" />
<polyline points="642.3,80.9 640.7,73.8 641.0,66.3 639.1,59.2 638.0,52.0 635.6,45.1 633.2,38.2 631.3,31.2 630.8,23.8 628.0,17.0" fill="none" stroke="#f3eee8" stroke-width="1.7" stroke-linejoin="round" stroke-linecap="round" />
<polyline points="642.3,80.9 640.7,73.8 641.0,66.3 639.1,59.2 638.0,52.0 635.6,45.1 633.2,38.2 631.3,31.2 630.8,23.8 628.0,17.0" fill="none" stroke="#e6738f" stroke-width="0.95" stroke-linejoin="round" stroke-linecap="round" />
<polyline points="684.3,126.0 687.0,118.2 689.3,110.3 690.0,102.0 694.3,95.8 697.1,88.9 700.0,82.0" fill="none" stroke="#f3eee8" stroke-width="1.7" stroke-linejoin="round" stroke-linecap="round" />
<polyline points="684.3,126.0 687.0,118.2 689.3,110.3 690.0,102.0 694.3,95.8 697.1,88.9 700.0,82.0" fill="none" stroke="#e6738f" stroke-width="0.95" stroke-linejoin="round" stroke-linecap="round" />
<polyline points="372.0,194.0 375.3,200.9 380.0,207.0 392.0,207.0 397.4,202.4 402.0,197.0 398.0,184.0" fill="none" stroke="#f3eee8" stroke-width="1.7" stroke-linejoin="round" stroke-linecap="round" />
<polyline points="372.0,194.0 375.3,200.9 380.0,207.0 392.0,207.0 397.4,202.4 402.0,197.0 398.0,184.0" fill="none" stroke="#e6738f" stroke-width="0.95" stroke-linejoin="round" stroke-linecap="round" />
<polyline points="380.0,195.0 372.0,200.4 365.0,207.0 359.3,214.1 355.0,222.0" fill="none" stroke="#f3eee8" stroke-width="1.7" stroke-linejoin="round" stroke-linecap="round" />
<polyline points="380.0,195.0 372.0,200.4 365.0,207.0 359.3,214.1 355.0,222.0" fill="none" stroke="#e6738f" stroke-width="0.95" stroke-linejoin="round" stroke-linecap="round" />
<polyline points="398.0,192.0 404.7,199.0 410.0,207.0 413.3,214.9 418.0,222.0" fill="none" stroke="#f3eee8" stroke-width="1.7" stroke-linejoin="round" stroke-linecap="round" />
<polyline points="398.0,192.0 404.7,199.0 410.0,207.0 413.3,214.9 418.0,222.0" fill="none" stroke="#e6738f" stroke-width="0.95" stroke-linejoin="round" stroke-linecap="round" />
<polyline points="375.0,184.0 366.8,186.5 358.5,188.6 350.0,190.0 343.0,191.3 337.1,195.8 330.0,197.0" fill="none" stroke="#f3eee8" stroke-width="1.7" stroke-linejoin="round" stroke-linecap="round" />
<polyline points="375.0,184.0 366.8,186.5 358.5,188.6 350.0,190.0 343.0,191.3 337.1,195.8 330.0,197.0" fill="none" stroke="#e6738f" stroke-width="0.95" stroke-linejoin="round" stroke-linecap="round" />
<polyline points="390.0,195.0 391.6,202.3 393.7,209.6 395.0,217.0 396.8,224.7 400.0,232.0" fill="none" stroke="#f3eee8" stroke-width="1.7" stroke-linejoin="round" stroke-linecap="round" />
<polyline points="390.0,195.0 391.6,202.3 393.7,209.6 395.0,217.0 396.8,224.7 400.0,232.0" fill="none" stroke="#e6738f" stroke-width="0.95" stroke-linejoin="round" stroke-linecap="round" />
<polyline points="366.4,227.7 373.4,220.0 380.0,212.0 392.0,207.0" fill="none" stroke="#f3eee8" stroke-width="1.7" stroke-linejoin="round" stroke-linecap="round" />
<polyline points="366.4,227.7 373.4,220.0 380.0,212.0 392.0,207.0" fill="none" stroke="#e6738f" stroke-width="0.95" stroke-linejoin="round" stroke-linecap="round" />
<polyline points="366.4,227.7 359.3,230.3 352.7,233.9 346.4,238.1 340.0,242.0 332.1,246.4 323.2,248.3 315.0,252.0" fill="none" stroke="#f3eee8" stroke-width="1.7" stroke-linejoin="round" stroke-linecap="round" />
<polyline points="366.4,227.7 359.3,230.3 352.7,233.9 346.4,238.1 340.0,242.0 332.1,246.4 323.2,248.3 315.0,252.0" fill="none" stroke="#e6738f" stroke-width="0.95" stroke-linejoin="round" stroke-linecap="round" />
<polyline points="366.4,227.7 369.3,235.6 368.9,244.2 372.0,252.0 373.8,259.0 377.8,265.2 380.0,272.0 378.4,280.1 374.8,287.7 373.0,295.7" fill="none" stroke="#f3eee8" stroke-width="1.7" stroke-linejoin="round" stroke-linecap="round" />
<polyline points="366.4,227.7 369.3,235.6 368.9,244.2 372.0,252.0 373.8,259.0 377.8,265.2 380.0,272.0 378.4,280.1 374.8,287.7 373.0,295.7" fill="none" stroke="#e6738f" stroke-width="0.95" stroke-linejoin="round" stroke-linecap="round" />
<polyline points="300.0,217.0 301.4,224.2 302.8,231.3 305.7,238.1 308.9,244.7 310.0,252.0 311.9,259.7 316.1,266.6 316.6,274.8 320.0,282.0 321.8,289.7 324.3,297.2 326.6,304.8 330.0,312.0" fill="none" stroke="#f3eee8" stroke-width="1.7" stroke-linejoin="round" stroke-linecap="round" />
<polyline points="300.0,217.0 301.4,224.2 302.8,231.3 305.7,238.1 308.9,244.7 310.0,252.0 311.9,259.7 316.1,266.6 316.6,274.8 320.0,282.0 321.8,289.7 324.3,297.2 326.6,304.8 330.0,312.0" fill="none" stroke="#e6738f" stroke-width="0.95" stroke-linejoin="round" stroke-linecap="round" />
<polyline points="269.4,142.0 268.7,150.2 267.1,158.4 267.4,166.7 267.2,175.0 261.7,182.8 256.2,190.5 252.0,196.8 247.7,202.9 243.9,209.5 238.5,214.8 234.1,222.7 227.5,229.1 223.0,236.9 224.6,246.8 224.8,256.9" fill="none" stroke="#f3eee8" stroke-width="1.7" stroke-linejoin="round" stroke-linecap="round" />
<polyline points="269.4,142.0 268.7,150.2 267.1,158.4 267.4,166.7 267.2,175.0 261.7,182.8 256.2,190.5 252.0,196.8 247.7,202.9 243.9,209.5 238.5,214.8 234.1,222.7 227.5,229.1 223.0,236.9 224.6,246.8 224.8,256.9" fill="none" stroke="#e6738f" stroke-width="0.95" stroke-linejoin="round" stroke-linecap="round" />
<polyline points="196.6,168.5 204.3,169.4 212.0,169.6 219.6,165.5 226.6,160.6 233.5,155.5 240.7,150.8 247.8,148.6 254.9,146.8 262.0,144.9 269.4,144.0" fill="none" stroke="#f3eee8" stroke-width="1.7" stroke-linejoin="round" stroke-linecap="round" />
<polyline points="196.6,168.5 204.3,169.4 212.0,169.6 219.6,165.5 226.6,160.6 233.5,155.5 240.7,150.8 247.8,148.6 254.9,146.8 262.0,144.9 269.4,144.0" fill="none" stroke="#e6738f" stroke-width="0.95" stroke-linejoin="round" stroke-linecap="round" />
<polyline points="410.0,169.0 414.7,175.0 419.6,180.8 424.1,187.0 430.0,192.0 435.4,198.4 439.1,206.0 445.0,212.0" fill="none" stroke="#f3eee8" stroke-width="1.7" stroke-linejoin="round" stroke-linecap="round" />
<polyline points="410.0,169.0 414.7,175.0 419.6,180.8 424.1,187.0 430.0,192.0 435.4,198.4 439.1,206.0 445.0,212.0" fill="none" stroke="#e6738f" stroke-width="0.95" stroke-linejoin="round" stroke-linecap="round" />
<polyline points="420.0,242.0 426.0,247.9 433.7,251.6 440.0,257.0 447.7,260.1 455.9,261.3 463.7,264.2 471.8,265.7 480.0,267.0" fill="none" stroke="#f3eee8" stroke-width="1.7" stroke-linejoin="round" stroke-linecap="round" />
<polyline points="420.0,242.0 426.0,247.9 433.7,251.6 440.0,257.0 447.7,260.1 455.9,261.3 463.7,264.2 471.8,265.7 480.0,267.0" fill="none" stroke="#e6738f" stroke-width="0.95" stroke-linejoin="round" stroke-linecap="round" />
<polyline points="226.4,299.0 233.3,301.2 240.0,303.7 246.5,306.9 253.3,309.4 260.0,312.0 268.1,311.8 275.9,314.9 284.0,315.1 292.0,315.9 300.0,317.0 307.3,315.8 314.1,312.7 321.2,310.7 328.6,309.8 335.5,307.1 342.7,305.4 350.0,304.0" fill="none" stroke="#f3eee8" stroke-width="1.7" stroke-linejoin="round" stroke-linecap="round" />
<polyline points="226.4,299.0 233.3,301.2 240.0,303.7 246.5,306.9 253.3,309.4 260.0,312.0 268.1,311.8 275.9,314.9 284.0,315.1 292.0,315.9 300.0,317.0 307.3,315.8 314.1,312.7 321.2,310.7 328.6,309.8 335.5,307.1 342.7,305.4 350.0,304.0" fill="none" stroke="#e6738f" stroke-width="0.95" stroke-linejoin="round" stroke-linecap="round" />
<polyline points="405.0,292.0 412.6,295.0 419.6,299.0 426.2,303.7 433.0,308.1 440.0,312.0 445.4,317.0 451.8,320.3 458.1,323.8 464.1,327.8 470.0,332.0" fill="none" stroke="#f3eee8" stroke-width="1.7" stroke-linejoin="round" stroke-linecap="round" />
<polyline points="405.0,292.0 412.6,295.0 419.6,299.0 426.2,303.7 433.0,308.1 440.0,312.0 445.4,317.0 451.8,320.3 458.1,323.8 464.1,327.8 470.0,332.0" fill="none" stroke="#e6738f" stroke-width="0.95" stroke-linejoin="round" stroke-linecap="round" />
<polyline points="286.0,232.0 287.5,239.9 287.7,248.0 287.2,256.1 290.2,263.9 290.0,272.0 288.2,280.0 285.5,287.9 283.3,295.8 281.9,304.0 280.0,312.0 277.6,319.9 274.9,327.7 273.0,335.7 272.6,344.2 270.0,352.0" fill="none" stroke="#f3eee8" stroke-width="1.7" stroke-linejoin="round" stroke-linecap="round" />
<polyline points="286.0,232.0 287.5,239.9 287.7,248.0 287.2,256.1 290.2,263.9 290.0,272.0 288.2,280.0 285.5,287.9 283.3,295.8 281.9,304.0 280.0,312.0 277.6,319.9 274.9,327.7 273.0,335.7 272.6,344.2 270.0,352.0" fill="none" stroke="#e6738f" stroke-width="0.95" stroke-linejoin="round" stroke-linecap="round" />
<text x="70.0" y="18.0" font-family="Liberation Sans" font-size="7.3" fill="#383838"  stroke="#f4f2ee" stroke-width="1.4" paint-order="stroke" stroke-opacity="0.8">Pontevedra</text>
<text x="73.5" y="34.0" font-family="Liberation Sans" font-size="7.3" fill="#383838"  stroke="#f4f2ee" stroke-width="1.4" paint-order="stroke" stroke-opacity="0.8">Vigo</text>
<text x="121.0" y="36.0" font-family="Liberation Sans" font-size="7.3" fill="#383838"  stroke="#f4f2ee" stroke-width="1.4" paint-order="stroke" stroke-opacity="0.8">Ourense</text>
<text x="267.0" y="15.0" font-family="Liberation Sans" font-size="7.3" fill="#383838"  stroke="#f4f2ee" stroke-width="1.4" paint-order="stroke" stroke-opacity="0.8">León</text>
<text x="376.0" y="25.0" font-family="Liberation Sans" font-size="7.3" fill="#383838"  stroke="#f4f2ee" stroke-width="1.4" paint-order="stroke" stroke-opacity="0.8">Burgos</text>
<text x="323.7" y="53.0" font-family="Liberation Sans" font-size="7.3" fill="#383838"  stroke="#f4f2ee" stroke-width="1.4" paint-order="stroke" stroke-opacity="0.8">Palencia</text>
<text x="62.0" y="70.0" font-family="Liberation Sans" font-size="7.3" fill="#383838"  stroke="#f4f2ee" stroke-width="1.4" paint-order="stroke" stroke-opacity="0.8">Viana do</text>
<text x="64.5" y="78.0" font-family="Liberation Sans" font-size="7.3" fill="#383838"  stroke="#f4f2ee" stroke-width="1.4" paint-order="stroke" stroke-opacity="0.8">Castelo</text>
<text x="91.4" y="90.0" font-family="Liberation Sans" font-size="7.3" fill="#383838"  stroke="#f4f2ee" stroke-width="1.4" paint-order="stroke" stroke-opacity="0.8">Braga</text>
<text x="147.7" y="86.0" font-family="Liberation Sans" font-size="7.3" fill="#383838"  stroke="#f4f2ee" stroke-width="1.4" paint-order="stroke" stroke-opacity="0.8">Chaves</text>
<text x="186.0" y="80.0" font-family="Liberation Sans" font-size="7.3" fill="#383838"  stroke="#f4f2ee" stroke-width="1.4" paint-order="stroke" stroke-opacity="0.8">Bragança</text>
<text x="160.6" y="95.5" font-family="Liberation Sans" font-size="7.3" fill="#383838"  stroke="#f4f2ee" stroke-width="1.4" paint-order="stroke" stroke-opacity="0.8">Mirandela</text>
<text x="42.3" y="96.5" font-family="Liberation Sans" font-size="7.3" fill="#383838"  stroke="#f4f2ee" stroke-width="1.4" paint-order="stroke" stroke-opacity="0.8">Esposende</text>
<text x="91.4" y="109.0" font-family="Liberation Sans" font-size="7.3" fill="#383838"  stroke="#f4f2ee" stroke-width="1.4" paint-order="stroke" stroke-opacity="0.8">Guimarães</text>
<text x="185.7" y="107.0" font-family="Liberation Sans" font-size="7.3" fill="#383838"  stroke="#f4f2ee" stroke-width="1.4" paint-order="stroke" stroke-opacity="0.8">Mogadouro</text>
<text x="251.0" y="103.5" font-family="Liberation Sans" font-size="7.3" fill="#383838"  stroke="#f4f2ee" stroke-width="1.4" paint-order="stroke" stroke-opacity="0.8">Zamora</text>
<text x="309.0" y="92.0" font-family="Liberation Sans" font-size="7.3" fill="#383838"  stroke="#f4f2ee" stroke-width="1.4" paint-order="stroke" stroke-opacity="0.8">Valladolid</text>
<text x="129.0" y="120.5" font-family="Liberation Sans" font-size="7.3" fill="#383838"  stroke="#f4f2ee" stroke-width="1.4" paint-order="stroke" stroke-opacity="0.8">Vila Real</text>
<text x="80.6" y="122.5" font-family="Liberation Sans" font-size="7.3" fill="#383838"  stroke="#f4f2ee" stroke-width="1.4" paint-order="stroke" stroke-opacity="0.8">Porto</text>
<text x="140.5" y="132.0" font-family="Liberation Sans" font-size="7.3" fill="#383838"  stroke="#f4f2ee" stroke-width="1.4" paint-order="stroke" stroke-opacity="0.8">Lamego</text>
<text x="181.0" y="125.0" font-family="Liberation Sans" font-size="7.3" fill="#383838"  stroke="#f4f2ee" stroke-width="1.4" paint-order="stroke" stroke-opacity="0.8">Vila Nova</text>
<text x="181.0" y="133.5" font-family="Liberation Sans" font-size="7.3" fill="#383838"  stroke="#f4f2ee" stroke-width="1.4" paint-order="stroke" stroke-opacity="0.8">de Foz</text>
<text x="181.0" y="141.5" font-family="Liberation Sans" font-size="7.3" fill="#383838"  stroke="#f4f2ee" stroke-width="1.4" paint-order="stroke" stroke-opacity="0.8">Coa</text>
<text x="160.6" y="142.5" font-family="Liberation Sans" font-size="7.3" fill="#383838"  stroke="#f4f2ee" stroke-width="1.4" paint-order="stroke" stroke-opacity="0.8">Mêda</text>
<text x="59.0" y="139.0" font-family="Liberation Sans" font-size="7.3" fill="#383838"  stroke="#f4f2ee" stroke-width="1.4" paint-order="stroke" stroke-opacity="0.8">Espinho</text>
<text x="99.0" y="144.0" font-family="Liberation Sans" font-size="7.3" fill="#383838"  stroke="#f4f2ee" stroke-width="1.4" paint-order="stroke" stroke-opacity="0.8">São João</text>
<text x="99.0" y="152.5" font-family="Liberation Sans" font-size="7.3" fill="#383838"  stroke="#f4f2ee" stroke-width="1.4" paint-order="stroke" stroke-opacity="0.8">da Madeira</text>
<text x="70.0" y="151.5" font-family="Liberation Sans" font-size="7.3" fill="#383838"  stroke="#f4f2ee" stroke-width="1.4" paint-order="stroke" stroke-opacity="0.8">Ovar</text>
<text x="173.0" y="152.5" font-family="Liberation Sans" font-size="7.3" fill="#383838"  stroke="#f4f2ee" stroke-width="1.4" paint-order="stroke" stroke-opacity="0.8">Pinhel</text>
<text x="251.0" y="147.5" font-family="Liberation Sans" font-size="7.3" fill="#383838"  stroke="#f4f2ee" stroke-width="1.4" paint-order="stroke" stroke-opacity="0.8">Salamanca</text>
<text x="359.0" y="138.5" font-family="Liberation Sans" font-size="7.3" fill="#383838"  stroke="#f4f2ee" stroke-width="1.4" paint-order="stroke" stroke-opacity="0.8">Segovia</text>
<text x="76.0" y="164.0" font-family="Liberation Sans" font-size="7.3" fill="#383838"  stroke="#f4f2ee" stroke-width="1.4" paint-order="stroke" stroke-opacity="0.8">Aveiro</text>
<text x="121.9" y="172.0" font-family="Liberation Sans" font-size="7.3" fill="#383838"  stroke="#f4f2ee" stroke-width="1.4" paint-order="stroke" stroke-opacity="0.8">Viseu</text>
<text x="318.0" y="173.0" font-family="Liberation Sans" font-size="7.3" fill="#383838"  stroke="#f4f2ee" stroke-width="1.4" paint-order="stroke" stroke-opacity="0.8">Ávila</text>
<text x="87.3" y="179.8" font-family="Liberation Sans" font-size="7.3" fill="#383838"  stroke="#f4f2ee" stroke-width="1.4" paint-order="stroke" stroke-opacity="0.8">Águeda</text>
<text x="159.0" y="182.0" font-family="Liberation Sans" font-size="7.3" fill="#383838"  stroke="#f4f2ee" stroke-width="1.4" paint-order="stroke" stroke-opacity="0.8">Guarda</text>
<text x="129.0" y="186.0" font-family="Liberation Sans" font-size="7.3" fill="#383838"  stroke="#f4f2ee" stroke-width="1.4" paint-order="stroke" stroke-opacity="0.8">Seia</text>
<text x="87.3" y="197.6" font-family="Liberation Sans" font-size="7.3" fill="#383838"  stroke="#f4f2ee" stroke-width="1.4" paint-order="stroke" stroke-opacity="0.8">Coimbra</text>
<text x="145.0" y="202.0" font-family="Liberation Sans" font-size="7.3" fill="#383838"  stroke="#f4f2ee" stroke-width="1.4" paint-order="stroke" stroke-opacity="0.8">Covilhã</text>
<text x="61.7" y="212.5" font-family="Liberation Sans" font-size="7.3" fill="#383838"  stroke="#f4f2ee" stroke-width="1.4" paint-order="stroke" stroke-opacity="0.8">Figueira</text>
<text x="64.0" y="220.8" font-family="Liberation Sans" font-size="7.3" fill="#383838"  stroke="#f4f2ee" stroke-width="1.4" paint-order="stroke" stroke-opacity="0.8">da Foz</text>
<text x="146.0" y="220.5" font-family="Liberation Sans" font-size="7.3" fill="#383838"  stroke="#f4f2ee" stroke-width="1.4" paint-order="stroke" stroke-opacity="0.8">Castelo</text>
<text x="146.0" y="228.0" font-family="Liberation Sans" font-size="7.3" fill="#383838"  stroke="#f4f2ee" stroke-width="1.4" paint-order="stroke" stroke-opacity="0.8">Branco</text>
<text x="68.8" y="234.7" font-family="Liberation Sans" font-size="7.3" fill="#383838"  stroke="#f4f2ee" stroke-width="1.4" paint-order="stroke" stroke-opacity="0.8">Leiria</text>
<text x="80.0" y="251.8" font-family="Liberation Sans" font-size="7.3" fill="#383838"  stroke="#f4f2ee" stroke-width="1.4" paint-order="stroke" stroke-opacity="0.8">Ourém</text>
<text x="357.6" y="236.0" font-family="Liberation Sans" font-size="7.3" fill="#383838"  stroke="#f4f2ee" stroke-width="1.4" paint-order="stroke" stroke-opacity="0.8">Toledo</text>
<text x="34.0" y="262.5" font-family="Liberation Sans" font-size="7.3" fill="#383838"  stroke="#f4f2ee" stroke-width="1.4" paint-order="stroke" stroke-opacity="0.8">Caldas</text>
<text x="23.0" y="270.7" font-family="Liberation Sans" font-size="7.3" fill="#383838"  stroke="#f4f2ee" stroke-width="1.4" paint-order="stroke" stroke-opacity="0.8">da Rainha</text>
<text x="116.6" y="265.5" font-family="Liberation Sans" font-size="7.3" fill="#383838"  stroke="#f4f2ee" stroke-width="1.4" paint-order="stroke" stroke-opacity="0.8">Ponte</text>
<text x="118.0" y="273.5" font-family="Liberation Sans" font-size="7.3" fill="#383838"  stroke="#f4f2ee" stroke-width="1.4" paint-order="stroke" stroke-opacity="0.8">de Sor</text>
<text x="212.8" y="266.0" font-family="Liberation Sans" font-size="7.3" fill="#383838"  stroke="#f4f2ee" stroke-width="1.4" paint-order="stroke" stroke-opacity="0.8">Cáceres</text>
<text x="144.4" y="280.6" font-family="Liberation Sans" font-size="7.3" fill="#383838"  stroke="#f4f2ee" stroke-width="1.4" paint-order="stroke" stroke-opacity="0.8">Portalegre</text>
<text x="362.0" y="286.0" font-family="Liberation Sans" font-size="7.3" fill="#383838"  stroke="#f4f2ee" stroke-width="1.4" paint-order="stroke" stroke-opacity="0.8">Ciudad</text>
<text x="366.0" y="294.0" font-family="Liberation Sans" font-size="7.3" fill="#383838"  stroke="#f4f2ee" stroke-width="1.4" paint-order="stroke" stroke-opacity="0.8">Real</text>
<text x="27.5" y="286.4" font-family="Liberation Sans" font-size="7.3" fill="#383838"  stroke="#f4f2ee" stroke-width="1.4" paint-order="stroke" stroke-opacity="0.8">Torres</text>
<text x="25.7" y="294.6" font-family="Liberation Sans" font-size="7.3" fill="#383838"  stroke="#f4f2ee" stroke-width="1.4" paint-order="stroke" stroke-opacity="0.8">Vedras</text>
<text x="76.0" y="285.0" font-family="Liberation Sans" font-size="7.3" fill="#383838"  stroke="#f4f2ee" stroke-width="1.4" paint-order="stroke" stroke-opacity="0.8">Santarém</text>
<text x="76.0" y="299.5" font-family="Liberation Sans" font-size="7.3" fill="#383838"  stroke="#f4f2ee" stroke-width="1.4" paint-order="stroke" stroke-opacity="0.8">Samora</text>
<text x="76.0" y="307.0" font-family="Liberation Sans" font-size="7.3" fill="#383838"  stroke="#f4f2ee" stroke-width="1.4" paint-order="stroke" stroke-opacity="0.8">Correia</text>
<text x="215.7" y="299.5" font-family="Liberation Sans" font-size="7.3" fill="#383838"  stroke="#f4f2ee" stroke-width="1.4" paint-order="stroke" stroke-opacity="0.8">Mérida</text>
<text x="136.5" y="305.0" font-family="Liberation Sans" font-size="7.3" fill="#383838"  stroke="#f4f2ee" stroke-width="1.4" paint-order="stroke" stroke-opacity="0.8">Estremoz</text>
<text x="176.5" y="314.0" font-family="Liberation Sans" font-size="7.3" fill="#383838"  stroke="#f4f2ee" stroke-width="1.4" paint-order="stroke" stroke-opacity="0.8">Badajoz</text>
<text x="60.6" y="340.5" font-family="Liberation Sans" font-size="7.3" fill="#383838"  stroke="#f4f2ee" stroke-width="1.4" paint-order="stroke" stroke-opacity="0.8">Setúbal</text>
<text x="123.0" y="337.6" font-family="Liberation Sans" font-size="7.3" fill="#383838"  stroke="#f4f2ee" stroke-width="1.4" paint-order="stroke" stroke-opacity="0.8">Évora</text>
<text x="157.0" y="339.0" font-family="Liberation Sans" font-size="7.3" fill="#383838"  stroke="#f4f2ee" stroke-width="1.4" paint-order="stroke" stroke-opacity="0.8">Reguengos</text>
<text x="157.0" y="347.0" font-family="Liberation Sans" font-size="7.3" fill="#383838"  stroke="#f4f2ee" stroke-width="1.4" paint-order="stroke" stroke-opacity="0.8">de Monsaraz</text>
<text x="83.8" y="351.5" font-family="Liberation Sans" font-size="7.3" fill="#383838"  stroke="#f4f2ee" stroke-width="1.4" paint-order="stroke" stroke-opacity="0.8">Alcácer</text>
<text x="451.0" y="16.0" font-family="Liberation Sans" font-size="7.3" fill="#383838"  stroke="#f4f2ee" stroke-width="1.4" paint-order="stroke" stroke-opacity="0.8">Logroño</text>
<text x="575.7" y="43.0" font-family="Liberation Sans" font-size="7.3" fill="#383838"  stroke="#f4f2ee" stroke-width="1.4" paint-order="stroke" stroke-opacity="0.8">Huesca</text>
<text x="453.8" y="83.3" font-family="Liberation Sans" font-size="7.3" fill="#383838"  stroke="#f4f2ee" stroke-width="1.4" paint-order="stroke" stroke-opacity="0.8">Soria</text>
<text x="641.0" y="84.8" font-family="Liberation Sans" font-size="7.3" fill="#383838"  stroke="#f4f2ee" stroke-width="1.4" paint-order="stroke" stroke-opacity="0.8">Lleida</text>
<text x="671.0" y="132.5" font-family="Liberation Sans" font-size="7.3" fill="#383838"  stroke="#f4f2ee" stroke-width="1.4" paint-order="stroke" stroke-opacity="0.8">Reus</text>
<text x="399.0" y="168.5" font-family="Liberation Sans" font-size="7.3" fill="#383838"  stroke="#f4f2ee" stroke-width="1.4" paint-order="stroke" stroke-opacity="0.8">Alcalá</text>
<text x="404.0" y="176.5" font-family="Liberation Sans" font-size="7.3" fill="#383838"  stroke="#f4f2ee" stroke-width="1.4" paint-order="stroke" stroke-opacity="0.8">Henares</text>
<text x="534.0" y="187.0" font-family="Liberation Sans" font-size="7.3" fill="#383838"  stroke="#f4f2ee" stroke-width="1.4" paint-order="stroke" stroke-opacity="0.8">Teruel</text>
<text x="471.0" y="209.3" font-family="Liberation Sans" font-size="7.3" fill="#383838"  stroke="#f4f2ee" stroke-width="1.4" paint-order="stroke" stroke-opacity="0.8">Cuenca</text>
<text x="596.8" y="226.4" font-family="Liberation Sans" font-size="7.3" fill="#383838"  stroke="#f4f2ee" stroke-width="1.4" paint-order="stroke" stroke-opacity="0.8">Castelló</text>
<text x="590.0" y="234.0" font-family="Liberation Sans" font-size="7.3" fill="#383838"  stroke="#f4f2ee" stroke-width="1.4" paint-order="stroke" stroke-opacity="0.8">de la Plana /</text>
<text x="595.0" y="241.7" font-family="Liberation Sans" font-size="7.3" fill="#383838"  stroke="#f4f2ee" stroke-width="1.4" paint-order="stroke" stroke-opacity="0.8">Castellón</text>
<text x="592.5" y="249.6" font-family="Liberation Sans" font-size="7.3" fill="#383838"  stroke="#f4f2ee" stroke-width="1.4" paint-order="stroke" stroke-opacity="0.8">de la Plana</text>
<text x="485.5" y="303.4" font-family="Liberation Sans" font-size="7.3" fill="#383838"  stroke="#f4f2ee" stroke-width="1.4" paint-order="stroke" stroke-opacity="0.8">Albacete</text>
<text x="568.0" y="336.0" font-family="Liberation Sans" font-size="7.3" fill="#383838"  stroke="#f4f2ee" stroke-width="1.4" paint-order="stroke" stroke-opacity="0.8">Alacant /</text>
<text x="568.0" y="343.4" font-family="Liberation Sans" font-size="7.3" fill="#383838"  stroke="#f4f2ee" stroke-width="1.4" paint-order="stroke" stroke-opacity="0.8">Alicante</text>
<text x="438.0" y="2.0" font-family="Liberation Sans" font-size="7.3" fill="#383838"  stroke="#f4f2ee" stroke-width="1.4" paint-order="stroke" stroke-opacity="0.8">Castelo</text>
<text x="771.7" y="66.0" font-family="Liberation Sans" font-size="7.3" fill="#383838"  stroke="#f4f2ee" stroke-width="1.4" paint-order="stroke" stroke-opacity="0.8">Gi</text>
<text x="760.0" y="2.0" font-family="Liberation Sans" font-size="7.3" fill="#383838"  stroke="#f4f2ee" stroke-width="1.4" paint-order="stroke" stroke-opacity="0.8">Perp</text>
<text x="541.0" y="81.5" font-family="Liberation Sans" font-size="8.4" fill="#383838"  stroke="#f4f2ee" stroke-width="1.4" paint-order="stroke" stroke-opacity="0.8">Zaragoza</text>
<text x="45.0" y="313.0" font-family="Liberation Sans" font-size="8.4" fill="#383838"  stroke="#f4f2ee" stroke-width="1.4" paint-order="stroke" stroke-opacity="0.8">Lisboa</text>
<text x="725.8" y="103.0" font-family="Liberation Sans" font-size="8.4" fill="#383838"  stroke="#f4f2ee" stroke-width="1.4" paint-order="stroke" stroke-opacity="0.8">Barcelona</text>
<text x="374.0" y="193.8" font-family="Liberation Sans" font-size="8.6" fill="#333333"  stroke="#f4f2ee" stroke-width="1.4" paint-order="stroke" stroke-opacity="0.8">Madrid</text>
<text x="73.0" y="264.5" font-family="Liberation Sans" font-size="10.2" fill="#8a6a98"  stroke="#f4f2ee" stroke-width="1.4" paint-order="stroke" stroke-opacity="0.8">Portugal</text>
<text x="691.0" y="15.5" font-family="Liberation Sans" font-size="9.2" fill="#8c7a8f"  stroke="#f4f2ee" stroke-width="1.4" paint-order="stroke" stroke-opacity="0.8">Andorra</text>
<text x="347.7" y="80.5" font-family="Liberation Sans" font-size="7.4" fill="#8f6e9d" font-style="italic" stroke="#f4f2ee" stroke-width="1.4" paint-order="stroke" stroke-opacity="0.8">Castilla y</text>
<text x="355.0" y="89.5" font-family="Liberation Sans" font-size="7.4" fill="#8f6e9d" font-style="italic" stroke="#f4f2ee" stroke-width="1.4" paint-order="stroke" stroke-opacity="0.8">León</text>
<text x="488.6" y="4.5" font-family="Liberation Sans" font-size="7.4" fill="#8f6e9d" font-style="italic" stroke="#f4f2ee" stroke-width="1.4" paint-order="stroke" stroke-opacity="0.8">Navarra</text>
<text x="488.6" y="12.5" font-family="Liberation Sans" font-size="7.4" fill="#8f6e9d" font-style="italic" stroke="#f4f2ee" stroke-width="1.4" paint-order="stroke" stroke-opacity="0.8">Nafarroa</text>
<text x="448.0" y="36.5" font-family="Liberation Sans" font-size="7.4" fill="#8f6e9d" font-style="italic" stroke="#f4f2ee" stroke-width="1.4" paint-order="stroke" stroke-opacity="0.8">La Rioja</text>
<text x="694.0" y="83.0" font-family="Liberation Sans" font-size="7.4" fill="#8f6e9d" font-style="italic" stroke="#f4f2ee" stroke-width="1.4" paint-order="stroke" stroke-opacity="0.8">Catalunya</text>
<text x="550.0" y="107.5" font-family="Liberation Sans" font-size="7.4" fill="#8f6e9d" font-style="italic" stroke="#f4f2ee" stroke-width="1.4" paint-order="stroke" stroke-opacity="0.8">Aragón</text>
<text x="228.0" y="280.7" font-family="Liberation Sans" font-size="7.4" fill="#8f6e9d" font-style="italic" stroke="#f4f2ee" stroke-width="1.4" paint-order="stroke" stroke-opacity="0.8">Extremadura</text>
<text x="400.7" y="239.7" font-family="Liberation Sans" font-size="7.4" fill="#8f6e9d" font-style="italic" stroke="#f4f2ee" stroke-width="1.4" paint-order="stroke" stroke-opacity="0.8">Castilla-La</text>
<text x="403.5" y="248.0" font-family="Liberation Sans" font-size="7.4" fill="#8f6e9d" font-style="italic" stroke="#f4f2ee" stroke-width="1.4" paint-order="stroke" stroke-opacity="0.8">Mancha</text>
<text x="547.0" y="268.0" font-family="Liberation Sans" font-size="7.4" fill="#8f6e9d" font-style="italic" stroke="#f4f2ee" stroke-width="1.4" paint-order="stroke" stroke-opacity="0.8">Comunitat</text>
<text x="547.0" y="276.5" font-family="Liberation Sans" font-size="7.4" fill="#8f6e9d" font-style="italic" stroke="#f4f2ee" stroke-width="1.4" paint-order="stroke" stroke-opacity="0.8">Valenciana</text>
<text x="767.0" y="249.7" font-family="Liberation Sans" font-size="7.4" fill="#8f6e9d" font-style="italic" stroke="#f4f2ee" stroke-width="1.4" paint-order="stroke" stroke-opacity="0.8">Illes</text>
<circle cx="388.5" cy="177.39999999999998" r="13.4" fill="#73bf69" fill-opacity="0.75"/>
<circle cx="391.3" cy="172.10000000000002" r="3.7" fill="#ff9830"/>
<circle cx="388.7" cy="176.89999999999998" r="3.7" fill="#66b05c" fill-opacity="0.9"/>
</svg>
<div style="position:absolute;left:2px;top:4.6px;width:13px;height:13px;background:#fff;border-radius:2px 2px 0 0"></div>
<div style="position:absolute;left:2px;top:18.9px;width:13px;height:12.6px;background:#fff;border-radius:0 0 2px 2px"></div>
<div style="position:absolute;left:5.6px;top:11.7px;width:5.3px;height:1.6px;background:#555"></div>
<div style="position:absolute;left:7.45px;top:9.9px;width:1.6px;height:5.2px;background:#555"></div>
<div style="position:absolute;left:5.6px;top:24.3px;width:5.3px;height:1.9px;background:#555"></div>
<div style="position:absolute;left:765px;top:333px;width:12px;height:13px;background:#fff;border-radius:2px"></div>
<div style="position:absolute;left:769.6px;top:336px;font-size:9.4px;font-weight:bold;color:#444;line-height:1;font-family:Liberation Sans">i</div>
</div>
<div class="a" style="left:795px;top:212px;width:856px;height:1px;background:#2c2e34"></div>
<div class="a" style="left:795px;top:236px;width:856px;height:1px;background:#26282d"></div>
<div class="a" style="left:795px;top:260px;width:856px;height:1px;background:#26282d"></div>
<div class="a" style="left:795px;top:284px;width:856px;height:1px;background:#26282d"></div>
<div class="a" style="left:993px;top:213px;width:1px;height:96px;background:#26282d"></div>
<div class="a" style="left:1262px;top:213px;width:1px;height:96px;background:#26282d"></div>
<div class="a" style="left:1396px;top:213px;width:1px;height:96px;background:#26282d"></div>
<div class="a" style="left:1463px;top:213px;width:1px;height:96px;background:#26282d"></div>
<div class="a" style="left:1540px;top:213px;width:1px;height:96px;background:#26282d"></div>
<div class="t" style="left:799.5px;top:197.5px;font-size:10.4px;-webkit-text-stroke:0.28px #ccccdc">Room</div>
<svg class="a" style="left:829px;top:197.5px" width="9" height="9" viewBox="0 0 9 9"><path d="M0.6 0.8 H8.4 L5.3 4.4 V8.3 L3.7 7.3 V4.4 Z" fill="none" stroke="#a4a6ae" stroke-width="1.05" stroke-linejoin="round"/></svg>
<div class="t" style="left:998px;top:197.5px;font-size:10.4px;-webkit-text-stroke:0.28px #ccccdc">Location</div>
<svg class="a" style="left:1041px;top:197.5px" width="9" height="9" viewBox="0 0 9 9"><path d="M0.6 0.8 H8.4 L5.3 4.4 V8.3 L3.7 7.3 V4.4 Z" fill="none" stroke="#a4a6ae" stroke-width="1.05" stroke-linejoin="round"/></svg>
<div class="t" style="left:1267.5px;top:197.5px;font-size:10.4px;-webkit-text-stroke:0.28px #ccccdc">Region</div>
<svg class="a" style="left:1302px;top:197.5px" width="9" height="9" viewBox="0 0 9 9"><path d="M0.6 0.8 H8.4 L5.3 4.4 V8.3 L3.7 7.3 V4.4 Z" fill="none" stroke="#a4a6ae" stroke-width="1.05" stroke-linejoin="round"/></svg>
<div class="t" style="left:1418px;top:197.5px;font-size:10.4px;-webkit-text-stroke:0.28px #ccccdc">Status</div>
<svg class="a" style="left:1451px;top:197.5px" width="9" height="9" viewBox="0 0 9 9"><path d="M0.6 0.8 H8.4 L5.3 4.4 V8.3 L3.7 7.3 V4.4 Z" fill="none" stroke="#a4a6ae" stroke-width="1.05" stroke-linejoin="round"/></svg>
<div class="t" style="left:1469px;top:197.5px;font-size:10.4px;-webkit-text-stroke:0.28px #ccccdc">Call Status</div>
<svg class="a" style="left:1521px;top:197.5px" width="9" height="9" viewBox="0 0 9 9"><path d="M0.6 0.8 H8.4 L5.3 4.4 V8.3 L3.7 7.3 V4.4 Z" fill="none" stroke="#a4a6ae" stroke-width="1.05" stroke-linejoin="round"/></svg>
<div class="t" style="left:1545.5px;top:197.5px;font-size:10.4px;-webkit-text-stroke:0.28px #ccccdc">Last status change</div>
<svg class="a" style="left:1635px;top:197.5px" width="9" height="9" viewBox="0 0 9 9"><path d="M0.6 0.8 H8.4 L5.3 4.4 V8.3 L3.7 7.3 V4.4 Z" fill="none" stroke="#a4a6ae" stroke-width="1.05" stroke-linejoin="round"/></svg>
<div class="t" style="left:799.5px;top:220px;font-size:10.1px;color:#6e9fff">Neat Board</div>
<div class="t" style="left:998px;top:220px;font-size:10.1px">Puerto Somport 21-23, Madrid.</div>
<div class="t" style="left:1267.5px;top:220px;font-size:10px">SPAIN</div>
<div class="t" style="right:206px;top:220px;font-size:10px;color:#73bf69;text-align:right">Ok</div>
<div class="t" style="left:1469px;top:220px;font-size:10px;color:#73bf69">No Call</div>
<div class="t" style="left:1545.5px;top:220px;font-size:10.3px">2025-03-24 11:03:57</div>
<div class="t" style="left:799.5px;top:244px;font-size:10.1px;color:#6e9fff">Neat Frame</div>
<div class="t" style="left:998px;top:244px;font-size:10.1px">Puerto Somport 21-23, Madrid.</div>
<div class="t" style="left:1267.5px;top:244px;font-size:10px">SPAIN</div>
<div class="t" style="right:206px;top:244px;font-size:10px;color:#73bf69;text-align:right">Ok</div>
<div class="t" style="left:1469px;top:244px;font-size:10px;color:#73bf69">No Call</div>
<div class="t" style="left:1545.5px;top:244px;font-size:10.3px">2025-03-20 01:15:52</div>
<div class="t" style="left:799.5px;top:268px;font-size:10.1px;color:#6e9fff">Neat Collaboration Bar</div>
<div class="t" style="left:998px;top:268px;font-size:10.1px">Puerto Somport 21-23, Madrid.</div>
<div class="t" style="left:1267.5px;top:268px;font-size:10px">SPAIN</div>
<div class="t" style="right:206px;top:268px;font-size:10px;color:#73bf69;text-align:right">Ok</div>
<div class="t" style="left:1469px;top:268px;font-size:10px;color:#73bf69">No Call</div>
<div class="t" style="left:1545.5px;top:268px;font-size:10.3px">2025-03-24 10:11:45</div>
<div class="t" style="left:799.5px;top:292px;font-size:10.1px;color:#6e9fff">Net Frame</div>
<div class="t" style="left:998px;top:292px;font-size:10.1px">ALCOBENDAS</div>
<div class="t" style="left:1267.5px;top:292px;font-size:10px">SPAIN</div>
<div class="t" style="right:206px;top:292px;font-size:10px;color:#ff9830;text-align:right">Major</div>
<div class="t" style="left:1469px;top:292px;font-size:10px;color:#73bf69">No Call</div>
<div class="t" style="left:1545.5px;top:292px;font-size:10.3px">2025-03-19 13:51:37</div>
<div class="a" style="left:1154px;top:515px;width:23px;height:16px;background:#1e2126;border-radius:2px"></div>
<div class="a" style="left:1183px;top:515px;width:15px;height:16px;background:#3d71d9;border-radius:2px"></div>
<div class="a" style="left:1204px;top:515px;width:23px;height:16px;background:#1e2126;border-radius:2px"></div>
<div class="t" style="left:1187px;top:518.5px;font-size:9px;font-weight:bold;color:#fff">1</div>
<svg class="a" style="left:1163px;top:520px" width="5" height="6" viewBox="0 0 5 6"><path d="M3.5 0.5 L1.2 3 L3.5 5.5" fill="none" stroke="#aeb0b8" stroke-width="0.9"/></svg>
<svg class="a" style="left:1213px;top:520px" width="5" height="6" viewBox="0 0 5 6"><path d="M1.5 0.5 L3.8 3 L1.5 5.5" fill="none" stroke="#aeb0b8" stroke-width="0.9"/></svg>
<div class="t" style="left:1237px;top:518.5px;font-size:9px;color:#a9abb3">1 - 4 of 4 rows</div>
</body></html>
